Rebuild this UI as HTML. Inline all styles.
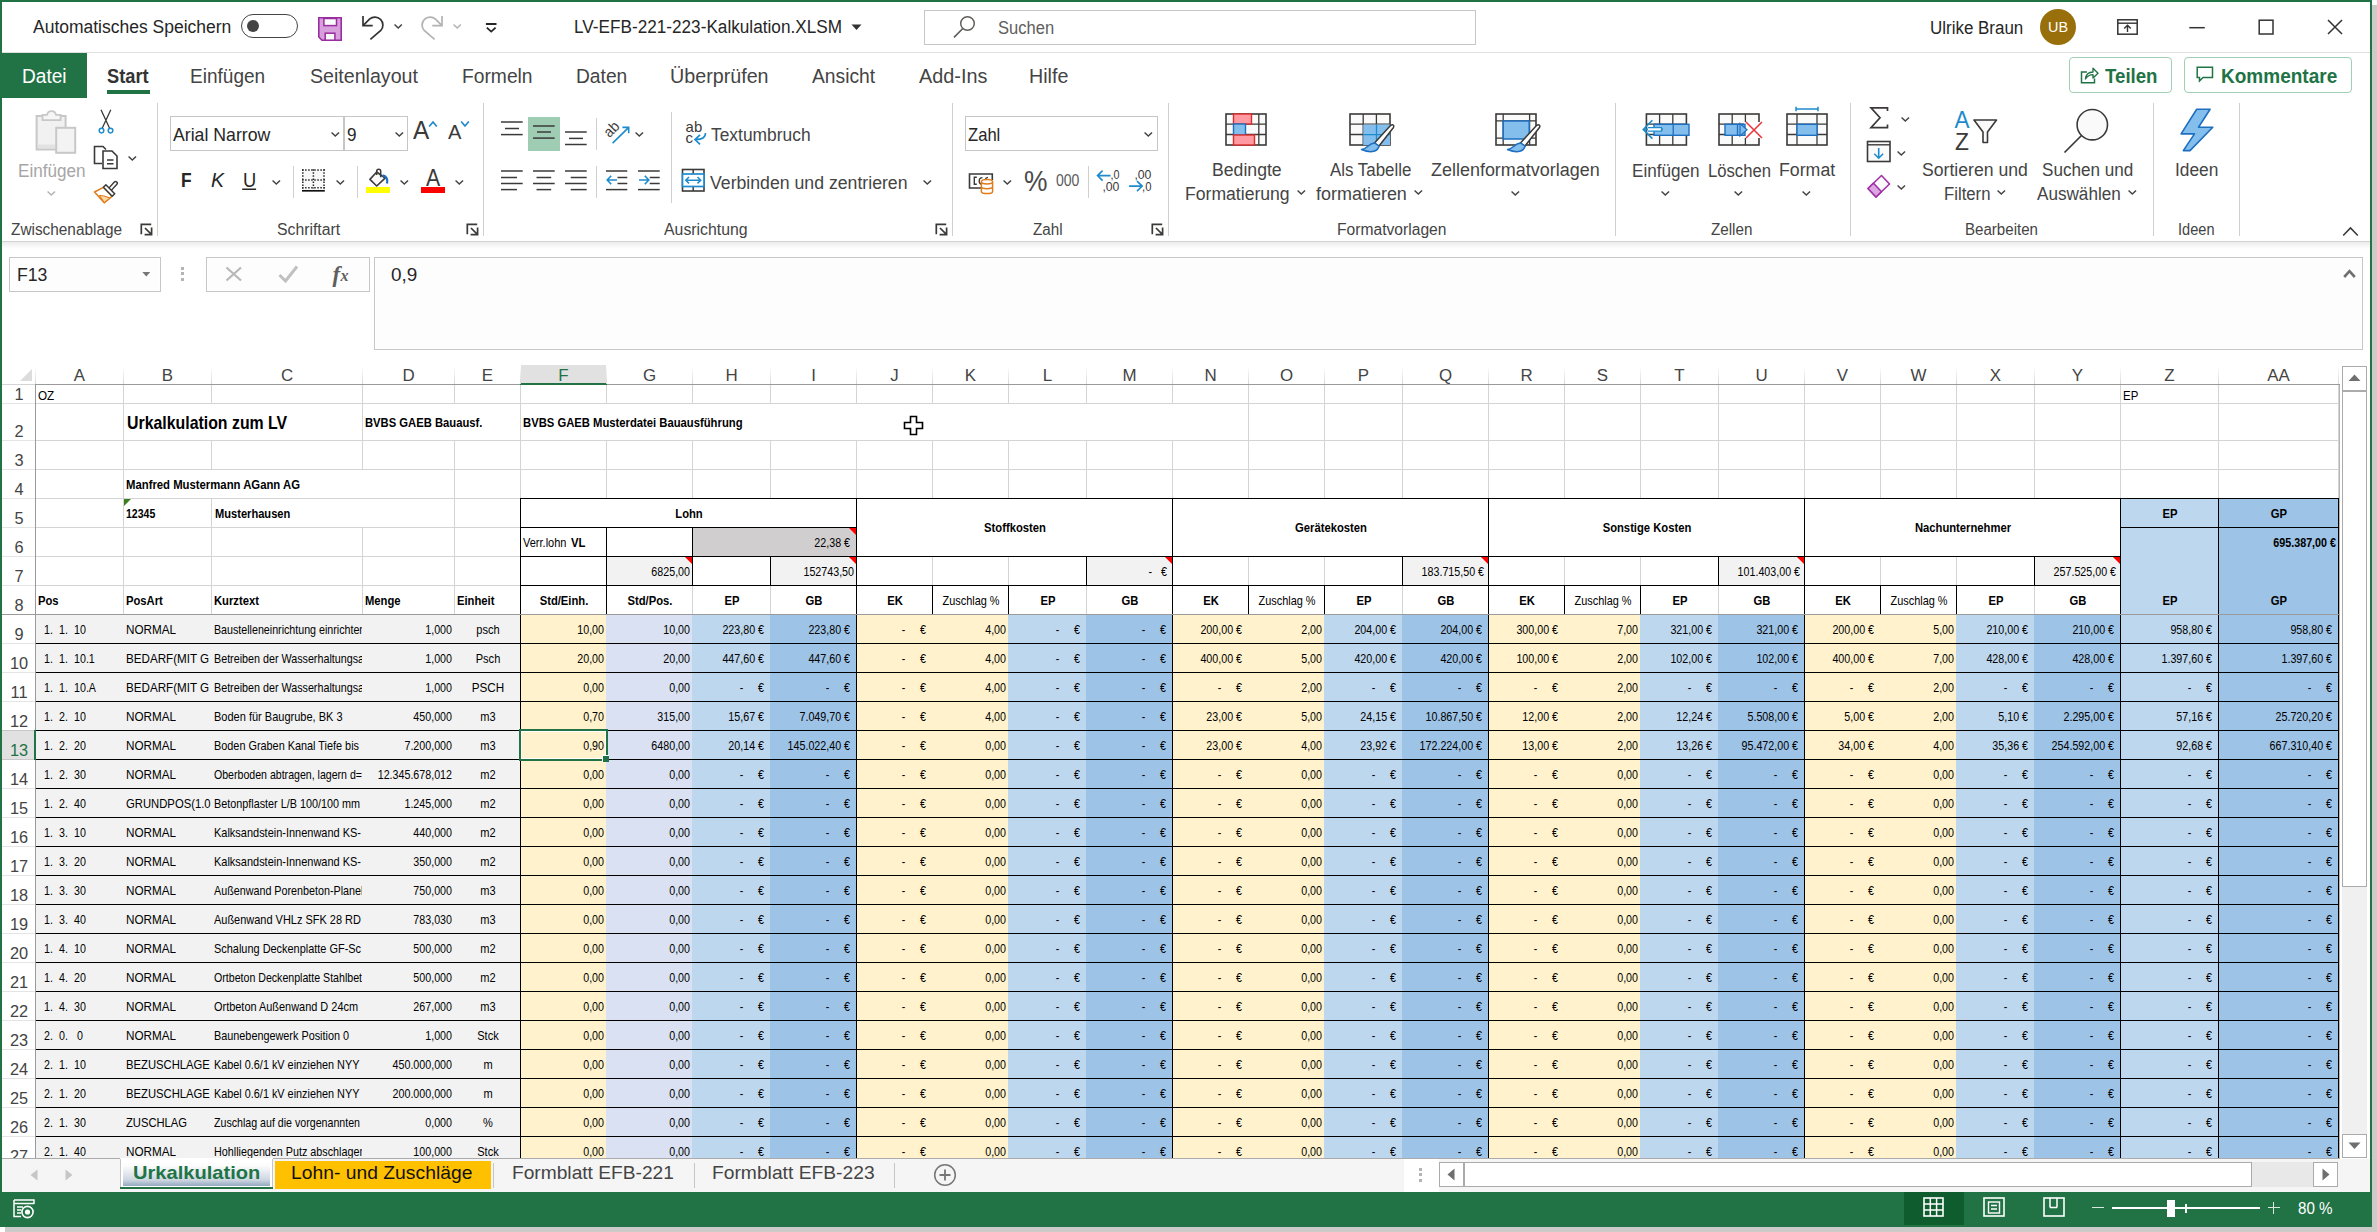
<!DOCTYPE html><html lang="de"><head><meta charset="utf-8"><title>LV-EFB-221-223-Kalkulation.XLSM - Excel</title><style>
html,body{margin:0;padding:0}
body{width:2377px;height:1232px;background:#cdcbca;position:relative;overflow:hidden;font-family:"Liberation Sans",sans-serif}
#w{position:absolute;left:0;top:0;width:2372px;height:1227px;background:#fff;overflow:hidden}
.r{position:absolute;display:block}
.t{position:absolute;white-space:nowrap;line-height:1;color:#444}
.p{white-space:pre}
</style></head><body><div id="w">
<div class="r" style="left:2px;top:2px;width:2368px;height:50px;background:#fff;"></div>
<div class="r" style="left:2px;top:52px;width:2368px;height:1px;background:#e1dfdd;"></div>
<span class="t" style="top:18px;font-size:18px;left:33.30px;transform-origin:0 50%;transform:scaleX(0.9715);color:#262626;">Automatisches Speichern</span>
<div class="r" style="left:241px;top:14px;width:55px;height:22px;border:1.4px solid #444;border-radius:12px;box-sizing:content-box"></div>
<div class="r" style="left:247px;top:20.3px;width:12px;height:12px;border-radius:6px;background:#444"></div>
<svg class="r" style="left:318px;top:17px;" width="24" height="24" viewBox="0 0 24 24"><path d="M0.8 0.8H23.2V23.2H4L0.8 20Z" fill="#d79fdc" stroke="#9a2da0" stroke-width="1.6"/><rect x="5.9" y="1.5" width="12.6" height="7.1" fill="#fafafa" stroke="#9a2da0" stroke-width="1.5"/><rect x="7.2" y="16.2" width="9.7" height="7" fill="#f8f8f8" stroke="#9a2da0" stroke-width="1.5"/></svg>
<svg class="r" style="left:360px;top:14px;" width="26" height="27" viewBox="0 0 26 27"><path d="M3 2V11.6H12.7" fill="none" stroke="#333" stroke-width="1.7"/><path d="M3.3 11.3L9.5 5.2A8 8 0 0 1 20.8 16.5L10.4 25.4" fill="none" stroke="#333" stroke-width="1.7"/></svg>
<svg class="r" style="left:393.4px;top:23.2px;" width="10.4" height="7.2" viewBox="0 0 10.4 7.2"><path d="M1.55 1.50L5.20 4.95L8.85 1.50" fill="none" stroke="#444" stroke-width="1.5"/></svg>
<svg class="r" style="left:418px;top:14px;" width="26" height="27" viewBox="0 0 26 27"><path d="M24 2V11.6H14.3" fill="none" stroke="#b4b2b0" stroke-width="1.7"/><path d="M23.7 11.3L17.5 5.2A8 8 0 0 0 6.2 16.5L16.6 25.4" fill="none" stroke="#b4b2b0" stroke-width="1.7"/></svg>
<svg class="r" style="left:452.2px;top:23.2px;" width="10.4" height="7.2" viewBox="0 0 10.4 7.2"><path d="M1.55 1.50L5.20 4.95L8.85 1.50" fill="none" stroke="#b4b2b0" stroke-width="1.5"/></svg>
<svg class="r" style="left:485px;top:22px;" width="13" height="11" viewBox="0 0 13 11"><path d="M0.9 2H11.5" stroke="#262626" stroke-width="2"/><path d="M1.8 5.6L6.2 9.6L10.6 5.6" fill="none" stroke="#262626" stroke-width="1.8"/></svg>
<span class="t" style="top:18px;font-size:18px;left:573.70px;transform-origin:0 50%;transform:scaleX(0.9543);color:#262626;">LV-EFB-221-223-Kalkulation.XLSM</span>
<svg class="r" style="left:851px;top:24px;" width="11" height="7" viewBox="0 0 11 7"><path d="M0.5 0.5H10.5L5.5 6Z" fill="#333"/></svg>
<div class="r" style="left:924px;top:10px;width:550px;height:33px;border:1px solid #c8c6c4;background:#fff;box-sizing:content-box"></div>
<svg class="r" style="left:953px;top:15px;" width="23" height="24" viewBox="0 0 23 24"><circle cx="14.5" cy="8.5" r="6.8" fill="none" stroke="#605e5c" stroke-width="1.5"/><path d="M9.8 13.5L1 22.3" stroke="#605e5c" stroke-width="1.7"/></svg>
<span class="t" style="top:19px;font-size:18px;left:998.40px;transform-origin:0 50%;transform:scaleX(0.9189);color:#605e5c;">Suchen</span>
<span class="t" style="top:19px;font-size:18px;left:1930.30px;transform-origin:0 50%;transform:scaleX(0.9420);color:#262626;">Ulrike Braun</span>
<div class="r" style="left:2040px;top:9px;width:36px;height:36px;border-radius:18px;background:#986f0b"></div>
<span class="t" style="top:19px;font-size:15px;left:2058.00px;transform:translateX(-50%) scaleX(0.9598);color:#fff;">UB</span>
<svg class="r" style="left:2117px;top:19px;" width="21" height="16" viewBox="0 0 21 16"><rect x="0.8" y="0.8" width="19.4" height="14.4" fill="none" stroke="#333" stroke-width="1.5"/><path d="M0.8 4.2H20.2" stroke="#333" stroke-width="1.4"/><path d="M10.5 13V6.5M7.2 9.5L10.5 6.3L13.8 9.5" fill="none" stroke="#333" stroke-width="1.4"/></svg>
<svg class="r" style="left:2188px;top:25px;" width="18" height="5" viewBox="0 0 18 5"><path d="M1.3 2.7H16.8" stroke="#333" stroke-width="1.5"/></svg>
<svg class="r" style="left:2257px;top:18px;" width="18" height="18" viewBox="0 0 18 18"><rect x="2.2" y="2.2" width="13.8" height="13.8" fill="none" stroke="#333" stroke-width="1.5"/></svg>
<svg class="r" style="left:2327px;top:19px;" width="16" height="16" viewBox="0 0 16 16"><path d="M1 1L15 15M15 1L1 15" stroke="#333" stroke-width="1.5"/></svg>
<div class="r" style="left:2px;top:53px;width:85px;height:45px;background:#217346;"></div>
<span class="t" style="top:67px;font-size:19.7px;left:21.60px;transform-origin:0 50%;transform:scaleX(0.9698);color:#fff;">Datei</span>
<span class="t" style="top:66px;font-size:20px;left:107.40px;transform-origin:0 50%;transform:scaleX(0.9129);color:#333;font-weight:bold;">Start</span>
<div class="r" style="left:107px;top:90px;width:43px;height:4px;background:#217346;"></div>
<span class="t" style="top:67px;font-size:19.7px;left:190.40px;transform-origin:0 50%;transform:scaleX(0.9669);color:#444;">Einfügen</span>
<span class="t" style="top:67px;font-size:19.7px;left:310.40px;transform-origin:0 50%;transform:scaleX(0.9960);color:#444;">Seitenlayout</span>
<span class="t" style="top:67px;font-size:19.7px;left:461.70px;transform-origin:0 50%;transform:scaleX(0.9771);color:#444;">Formeln</span>
<span class="t" style="top:67px;font-size:19.7px;left:575.50px;transform-origin:0 50%;transform:scaleX(0.9758);color:#444;">Daten</span>
<span class="t" style="top:67px;font-size:19.7px;left:670.00px;transform-origin:0 50%;transform:scaleX(1.0004);color:#444;">Überprüfen</span>
<span class="t" style="top:67px;font-size:19.7px;left:812.40px;transform-origin:0 50%;transform:scaleX(0.9783);color:#444;">Ansicht</span>
<span class="t" style="top:67px;font-size:19.7px;left:918.50px;transform-origin:0 50%;transform:scaleX(1.0074);color:#444;">Add-Ins</span>
<span class="t" style="top:67px;font-size:19.7px;left:1029.30px;transform-origin:0 50%;transform:scaleX(0.9997);color:#444;">Hilfe</span>
<div class="r" style="left:2069px;top:57px;width:101px;height:34px;border:1px solid #9fd0b5;border-radius:4px;box-sizing:content-box"></div>
<div class="r" style="left:2184px;top:57px;width:166px;height:34px;border:1px solid #9fd0b5;border-radius:4px;box-sizing:content-box"></div>
<svg class="r" style="left:2080px;top:66px;" width="19" height="18" viewBox="0 0 19 18"><path d="M7 6H1.5V16.8H14.5V12.5" fill="none" stroke="#217346" stroke-width="1.5"/><path d="M5.5 13C6 8.5 9 6 13 6V2.3L18 7.3L13 12V8.6C10 8.6 7.5 9.8 5.5 13Z" fill="none" stroke="#217346" stroke-width="1.4" stroke-linejoin="round"/></svg>
<span class="t" style="top:66px;font-size:20px;left:2105.00px;transform-origin:0 50%;transform:scaleX(0.9323);color:#217346;font-weight:bold;">Teilen</span>
<svg class="r" style="left:2196px;top:66px;" width="18" height="17" viewBox="0 0 18 17"><path d="M1.2 1.2H16.5V11.5H7L3.5 15V11.5H1.2Z" fill="none" stroke="#217346" stroke-width="1.5"/></svg>
<span class="t" style="top:66px;font-size:20px;left:2221.00px;transform-origin:0 50%;transform:scaleX(0.9505);color:#217346;font-weight:bold;">Kommentare</span>
<svg class="r" style="left:35px;top:108px;" width="42" height="47" viewBox="0 0 42 47"><rect x="1.6" y="8" width="29" height="33.5" fill="#f1f1f1" stroke="#c8c8c8" stroke-width="2"/><path d="M3 36.5H20V40H3Z" fill="#e2e2e2"/><path d="M7.5 12.2V6.8H12A4.6 4.6 0 0 1 21 6.8H25.6V12.2Z" fill="#f6f6f6" stroke="#c8c8c8" stroke-width="1.8"/><rect x="21.2" y="19.8" width="19" height="25" fill="#f3f3f3" stroke="#c8c8c8" stroke-width="2"/></svg>
<span class="t" style="top:163px;font-size:17.6px;left:17.80px;transform-origin:0 50%;transform:scaleX(0.9729);color:#a6a6a6;">Einfügen</span>
<svg class="r" style="left:46px;top:190px;" width="10.6" height="7.2" viewBox="0 0 10.6 7.2"><path d="M1.55 1.50L5.30 4.95L9.05 1.50" fill="none" stroke="#b4b4b4" stroke-width="1.5"/></svg>
<svg class="r" style="left:97px;top:108.5px;" width="18" height="26" viewBox="0 0 18 26"><path d="M4 0.8L12.6 19.2M13.8 0.8L5.2 19.2" stroke="#3b3a39" stroke-width="1.3" fill="none"/><circle cx="4.5" cy="21.6" r="2.3" fill="#fff" stroke="#1e8bcd" stroke-width="1.5"/><circle cx="13.5" cy="21.6" r="2.3" fill="#fff" stroke="#1e8bcd" stroke-width="1.5"/></svg>
<svg class="r" style="left:93px;top:145px;" width="26" height="25" viewBox="0 0 26 25"><path d="M9 18.5H1.5V1.5H10L13 4.5" fill="none" stroke="#3b3a39" stroke-width="1.6"/><path d="M10 6H19L24 11V23.5H10Z" fill="#fff" stroke="#3b3a39" stroke-width="1.6"/><path d="M14 15H20.5M14 18.7H20.5" stroke="#3b3a39" stroke-width="1.4"/></svg>
<svg class="r" style="left:127.2px;top:155px;" width="10.6" height="7.2" viewBox="0 0 10.6 7.2"><path d="M1.55 1.50L5.30 4.95L9.05 1.50" fill="none" stroke="#444" stroke-width="1.5"/></svg>
<svg class="r" style="left:93px;top:180px;" width="26" height="24" viewBox="0 0 26 24"><path d="M17.3 9L22.6 3.2" stroke="#3b3a39" stroke-width="4.8" stroke-linecap="round"/><path d="M17.3 9L22.6 3.2" stroke="#fff" stroke-width="1.9" stroke-linecap="round"/><path d="M10.4 7.3L1.5 12L11.3 22.7L19.2 16.2Z" fill="#fff" stroke="#e07b1a" stroke-width="1.5" stroke-linejoin="round"/><path d="M6.5 15.5C10 15 13 16.5 16.8 18.2L11.3 22.7Z" fill="#fbd9a6" stroke="#e07b1a" stroke-width="1.1" stroke-linejoin="round"/><path d="M10.4 7.3L12.9 4.8L21.7 13.7L19.2 16.2Z" fill="#fff" stroke="#3b3a39" stroke-width="1.5" stroke-linejoin="round"/></svg>
<span class="t" style="top:222px;font-size:15.6px;left:11.10px;transform-origin:0 50%;transform:scaleX(0.9855);color:#444;">Zwischenablage</span>
<svg class="r" style="left:139.5px;top:222.5px;" width="13" height="13" viewBox="0 0 13 13"><path d="M1.3 11.3V1.3H11.2M5 5L11.4 11.4M11.6 4.6V11.6H4.6" fill="none" stroke="#3b3a39" stroke-width="1.7"/></svg>
<div class="r" style="left:157px;top:103px;width:1px;height:133px;background:#d2d0ce;"></div>
<div class="r" style="left:170px;top:116px;width:172px;height:33px;border:1px solid #c8c6c4;box-sizing:content-box"></div>
<div class="r" style="left:344px;top:116px;width:62px;height:33px;border:1px solid #c8c6c4;box-sizing:content-box"></div>
<span class="t" style="top:126px;font-size:18.5px;left:173.30px;transform-origin:0 50%;transform:scaleX(0.9560);color:#262626;">Arial Narrow</span>
<svg class="r" style="left:329.8px;top:131px;" width="10.6" height="7.2" viewBox="0 0 10.6 7.2"><path d="M1.55 1.50L5.30 4.95L9.05 1.50" fill="none" stroke="#444" stroke-width="1.5"/></svg>
<span class="t" style="top:126px;font-size:18.5px;left:347.00px;transform-origin:0 50%;transform:scaleX(0.9233);color:#262626;">9</span>
<svg class="r" style="left:393.8px;top:131px;" width="10.6" height="7.2" viewBox="0 0 10.6 7.2"><path d="M1.55 1.50L5.30 4.95L9.05 1.50" fill="none" stroke="#444" stroke-width="1.5"/></svg>
<span class="t" style="top:117px;font-size:26px;left:413.20px;transform-origin:0 50%;transform:scaleX(0.9341);color:#3b3a39;">A</span>
<svg class="r" style="left:427.5px;top:120px;" width="10" height="8" viewBox="0 0 10 8"><path d="M1.2 6.5L5 2L8.8 6.5" fill="none" stroke="#1e8bcd" stroke-width="1.7"/></svg>
<span class="t" style="top:122px;font-size:20px;left:447.60px;transform-origin:0 50%;transform:scaleX(1.0045);color:#3b3a39;">A</span>
<svg class="r" style="left:459.5px;top:120px;" width="10" height="8" viewBox="0 0 10 8"><path d="M1.2 1.5L5 6L8.8 1.5" fill="none" stroke="#1e8bcd" stroke-width="1.7"/></svg>
<span class="t" style="top:170px;font-size:20.5px;left:180.60px;transform-origin:0 50%;transform:scaleX(0.8465);color:#262626;font-weight:bold;">F</span>
<span class="t" style="top:170px;font-size:20.5px;left:211.00px;transform-origin:0 50%;transform:scaleX(0.9507);color:#262626;font-style:italic;">K</span>
<span class="t" style="top:170px;font-size:20.5px;left:243.00px;transform-origin:0 50%;transform:scaleX(0.8916);color:#262626;">U</span>
<svg class="r" style="left:241px;top:187px;" width="17" height="4" viewBox="0 0 17 4"><path d="M1.2 2.25H15.1" stroke="#262626" stroke-width="1.5"/></svg>
<svg class="r" style="left:270.6px;top:178.8px;" width="10.6" height="7.2" viewBox="0 0 10.6 7.2"><path d="M1.55 1.50L5.30 4.95L9.05 1.50" fill="none" stroke="#444" stroke-width="1.5"/></svg>
<div class="r" style="left:293px;top:166px;width:1px;height:32px;background:#d2d0ce;"></div>
<svg class="r" style="left:301px;top:168px;" width="25" height="25" viewBox="0 0 25 25"><rect x="1.8" y="2" width="21.2" height="17.7" fill="#f8f8f8"/><path d="M1.05 2H24M1.05 12H24M1.05 19.7H24" fill="none" stroke="#262626" stroke-width="1.5" stroke-dasharray="1.5 1.55"/><path d="M1.8 1.25V20.5M12.4 1.25V20.5M23 1.25V20.5" fill="none" stroke="#262626" stroke-width="1.5" stroke-dasharray="1.5 1.55"/><path d="M1 22.8H23.8" stroke="#111" stroke-width="1.7"/></svg>
<svg class="r" style="left:334.8px;top:178.8px;" width="10.6" height="7.2" viewBox="0 0 10.6 7.2"><path d="M1.55 1.50L5.30 4.95L9.05 1.50" fill="none" stroke="#444" stroke-width="1.5"/></svg>
<div class="r" style="left:357px;top:166px;width:1px;height:32px;background:#d2d0ce;"></div>
<svg class="r" style="left:365px;top:168px;" width="27" height="26" viewBox="0 0 27 26"><path d="M11.7 4L4.9 11.4L11.7 18L20.1 10.2Z" fill="#fafafa" stroke="#3b3a39" stroke-width="1.6" stroke-linejoin="round"/><path d="M11.7 7V3.2A2 2 0 0 1 15.7 3.2V9.2" fill="none" stroke="#3b3a39" stroke-width="1.5"/><path d="M17.6 7.3C21.3 7.8 23 11.3 22 15.4" fill="none" stroke="#1e6fc0" stroke-width="2.3"/></svg>
<div class="r" style="left:366px;top:187px;width:24px;height:6px;background:#ffff00;"></div>
<svg class="r" style="left:398.8px;top:178.8px;" width="10.6" height="7.2" viewBox="0 0 10.6 7.2"><path d="M1.55 1.50L5.30 4.95L9.05 1.50" fill="none" stroke="#444" stroke-width="1.5"/></svg>
<span class="t" style="top:167px;font-size:23px;left:426.20px;transform-origin:0 50%;transform:scaleX(0.9256);color:#3b3a39;">A</span>
<div class="r" style="left:421px;top:187px;width:24px;height:6px;background:#ff0000;"></div>
<svg class="r" style="left:453.8px;top:178.8px;" width="10.6" height="7.2" viewBox="0 0 10.6 7.2"><path d="M1.55 1.50L5.30 4.95L9.05 1.50" fill="none" stroke="#444" stroke-width="1.5"/></svg>
<span class="t" style="top:222px;font-size:15.6px;left:276.60px;transform-origin:0 50%;transform:scaleX(1.0125);color:#444;">Schriftart</span>
<svg class="r" style="left:465.5px;top:222.5px;" width="13" height="13" viewBox="0 0 13 13"><path d="M1.3 11.3V1.3H11.2M5 5L11.4 11.4M11.6 4.6V11.6H4.6" fill="none" stroke="#3b3a39" stroke-width="1.7"/></svg>
<div class="r" style="left:483px;top:103px;width:1px;height:133px;background:#d2d0ce;"></div>
<div class="r" style="left:528px;top:117px;width:32px;height:34px;background:#9fcdb3;"></div>
<svg class="r" style="left:501.3px;top:119.8px;" width="23" height="17.6" viewBox="0 0 23 17.6"><path d="M0.0 2.0H21.7" stroke="#3b3a39" stroke-width="1.5"/><path d="M4.0 8.5H18.0" stroke="#3b3a39" stroke-width="1.5"/><path d="M0.0 14.6H21.7" stroke="#3b3a39" stroke-width="1.5"/></svg>
<svg class="r" style="left:533.2px;top:124.3px;" width="23" height="17.1" viewBox="0 0 23 17.1"><path d="M0.0 2.0H21.7" stroke="#3b3a39" stroke-width="1.5"/><path d="M4.0 8.0H18.0" stroke="#3b3a39" stroke-width="1.5"/><path d="M0.0 14.1H21.7" stroke="#3b3a39" stroke-width="1.5"/></svg>
<svg class="r" style="left:565.3px;top:130px;" width="23" height="17.5" viewBox="0 0 23 17.5"><path d="M0.0 2.0H21.7" stroke="#3b3a39" stroke-width="1.5"/><path d="M4.0 8.4H18.0" stroke="#3b3a39" stroke-width="1.5"/><path d="M0.0 14.5H21.7" stroke="#3b3a39" stroke-width="1.5"/></svg>
<div class="r" style="left:596px;top:118px;width:1px;height:32px;background:#d2d0ce;"></div>
<svg class="r" style="left:604px;top:119px;" width="27" height="27" viewBox="0 0 27 27"><path d="M8.6 24.1L24.5 8.6M18.4 8.4H24.7V14.3" fill="none" stroke="#1e8bcd" stroke-width="1.6"/><text x="0" y="0" font-size="15" fill="#3b3a39" font-family="Liberation Sans,sans-serif" textLength="15.5" lengthAdjust="spacingAndGlyphs" transform="translate(5.6 19.2) rotate(-45)">ab</text></svg>
<svg class="r" style="left:634px;top:131px;" width="10.6" height="7.2" viewBox="0 0 10.6 7.2"><path d="M1.55 1.50L5.30 4.95L9.05 1.50" fill="none" stroke="#444" stroke-width="1.5"/></svg>
<div class="r" style="left:671px;top:112px;width:1px;height:91px;background:#d2d0ce;"></div>
<svg class="r" style="left:684px;top:120px;" width="24" height="26" viewBox="0 0 24 26"><text x="1.6" y="12.4" font-size="15" fill="#3b3a39" font-family="Liberation Sans,sans-serif" textLength="16.6" lengthAdjust="spacingAndGlyphs">ab</text><text x="1.6" y="23.1" font-size="15" fill="#3b3a39" font-family="Liberation Sans,sans-serif">c</text><path d="M21.5 13C21.6 17 19 19.6 11.5 19.6M16 14.8L11 19.6L16 24.4" fill="none" stroke="#1e8bcd" stroke-width="1.7"/></svg>
<span class="t" style="top:127px;font-size:17.6px;left:711.40px;transform-origin:0 50%;transform:scaleX(0.9885);color:#444;">Textumbruch</span>
<svg class="r" style="left:501.3px;top:168.7px;" width="23" height="23.6" viewBox="0 0 23 23.6"><path d="M0.0 2.0H21.7" stroke="#3b3a39" stroke-width="1.5"/><path d="M0.0 8.5H16.0" stroke="#3b3a39" stroke-width="1.5"/><path d="M0.0 14.5H21.7" stroke="#3b3a39" stroke-width="1.5"/><path d="M0.0 20.6H16.0" stroke="#3b3a39" stroke-width="1.5"/></svg>
<svg class="r" style="left:533.2px;top:168.7px;" width="23" height="23.6" viewBox="0 0 23 23.6"><path d="M0.0 2.0H21.7" stroke="#3b3a39" stroke-width="1.5"/><path d="M3.5 8.5H18.2" stroke="#3b3a39" stroke-width="1.5"/><path d="M0.0 14.5H21.7" stroke="#3b3a39" stroke-width="1.5"/><path d="M3.5 20.6H18.2" stroke="#3b3a39" stroke-width="1.5"/></svg>
<svg class="r" style="left:565.3px;top:168.7px;" width="23" height="23.6" viewBox="0 0 23 23.6"><path d="M0.0 2.0H21.7" stroke="#3b3a39" stroke-width="1.5"/><path d="M5.7 8.5H21.7" stroke="#3b3a39" stroke-width="1.5"/><path d="M0.0 14.5H21.7" stroke="#3b3a39" stroke-width="1.5"/><path d="M5.7 20.6H21.7" stroke="#3b3a39" stroke-width="1.5"/></svg>
<div class="r" style="left:596px;top:166px;width:1px;height:32px;background:#d2d0ce;"></div>
<svg class="r" style="left:606.4px;top:168.7px;" width="23" height="23.6" viewBox="0 0 23 23.6"><path d="M0.0 2.0H21.3" stroke="#3b3a39" stroke-width="1.5"/><path d="M11.5 8.5H21.3" stroke="#3b3a39" stroke-width="1.5"/><path d="M11.5 14.5H21.3" stroke="#3b3a39" stroke-width="1.5"/><path d="M0.0 20.6H21.3" stroke="#3b3a39" stroke-width="1.5"/></svg>
<svg class="r" style="left:606px;top:174px;" width="12" height="12" viewBox="0 0 12 12"><path d="M11 6H1.5M5.2 1.8L1.2 6L5.2 10.2" fill="none" stroke="#1e8bcd" stroke-width="1.6"/></svg>
<svg class="r" style="left:638.3px;top:168.7px;" width="23" height="23.6" viewBox="0 0 23 23.6"><path d="M0.0 2.0H21.7" stroke="#3b3a39" stroke-width="1.5"/><path d="M11.7 8.5H21.7" stroke="#3b3a39" stroke-width="1.5"/><path d="M11.7 14.5H21.7" stroke="#3b3a39" stroke-width="1.5"/><path d="M0.0 20.6H21.7" stroke="#3b3a39" stroke-width="1.5"/></svg>
<svg class="r" style="left:637.5px;top:174px;" width="12" height="12" viewBox="0 0 12 12"><path d="M1 6H10.5M6.8 1.8L10.8 6L6.8 10.2" fill="none" stroke="#1e8bcd" stroke-width="1.6"/></svg>
<svg class="r" style="left:681px;top:168px;" width="25" height="25" viewBox="0 0 25 25"><rect x="1.5" y="1.5" width="21.5" height="21.5" fill="none" stroke="#3b3a39" stroke-width="1.6"/><path d="M12.2 1.5V6M12.2 18.5V23" stroke="#3b3a39" stroke-width="1.5"/><rect x="1.5" y="6" width="21.5" height="12.5" fill="#fff" stroke="#1e8bcd" stroke-width="1.7"/><path d="M5 12.2H19.5M8 9L4.8 12.2L8 15.4M16.5 9L19.7 12.2L16.5 15.4" fill="none" stroke="#1e8bcd" stroke-width="1.5"/></svg>
<span class="t" style="top:175px;font-size:17.6px;left:710.40px;transform-origin:0 50%;transform:scaleX(1.0047);color:#444;">Verbinden und zentrieren</span>
<svg class="r" style="left:921.5px;top:178.8px;" width="10.6" height="7.2" viewBox="0 0 10.6 7.2"><path d="M1.55 1.50L5.30 4.95L9.05 1.50" fill="none" stroke="#444" stroke-width="1.5"/></svg>
<span class="t" style="top:222px;font-size:15.6px;left:663.50px;transform-origin:0 50%;transform:scaleX(1.0160);color:#444;">Ausrichtung</span>
<svg class="r" style="left:935.0px;top:222.5px;" width="13" height="13" viewBox="0 0 13 13"><path d="M1.3 11.3V1.3H11.2M5 5L11.4 11.4M11.6 4.6V11.6H4.6" fill="none" stroke="#3b3a39" stroke-width="1.7"/></svg>
<div class="r" style="left:952px;top:103px;width:1px;height:133px;background:#d2d0ce;"></div>
<div class="r" style="left:965px;top:116px;width:191px;height:33px;border:1px solid #c8c6c4;box-sizing:content-box"></div>
<span class="t" style="top:126px;font-size:18.5px;left:968.30px;transform-origin:0 50%;transform:scaleX(0.8975);color:#262626;">Zahl</span>
<svg class="r" style="left:1142.6px;top:131px;" width="10.6" height="7.2" viewBox="0 0 10.6 7.2"><path d="M1.55 1.50L5.30 4.95L9.05 1.50" fill="none" stroke="#444" stroke-width="1.5"/></svg>
<svg class="r" style="left:968px;top:172px;" width="27" height="23" viewBox="0 0 27 23"><path d="M14 16H1.5V2H24.3V8" fill="none" stroke="#3b3a39" stroke-width="1.6"/><path d="M8.8 5.3H6.3V12.2H8.8M14.5 5.6A3.3 3.3 0 0 0 14.5 12.2M20 5.4A3 3 0 0 0 17.2 7.5" fill="none" stroke="#3b3a39" stroke-width="1.4"/><path d="M13.4 9.8V19.4A5.6 2.2 0 0 0 24.6 19.4V9.8A5.6 2.2 0 0 0 13.4 9.8A5.6 2.2 0 0 0 24.6 9.8M13.4 14.6A5.6 2.2 0 0 0 24.6 14.6" fill="#fff" stroke="#e07b1a" stroke-width="1.5"/></svg>
<svg class="r" style="left:1002px;top:178.8px;" width="10.6" height="7.2" viewBox="0 0 10.6 7.2"><path d="M1.55 1.50L5.30 4.95L9.05 1.50" fill="none" stroke="#444" stroke-width="1.5"/></svg>
<span class="t" style="top:167px;font-size:29px;left:1024.20px;transform-origin:0 50%;transform:scaleX(0.9114);color:#4a4a4a;">%</span>
<span class="t" style="top:172px;font-size:16.5px;left:1056.00px;transform-origin:0 50%;transform:scaleX(0.8500);color:#5a5a5a;">000</span>
<div class="r" style="left:1088px;top:166px;width:1px;height:32px;background:#d2d0ce;"></div>
<svg class="r" style="left:1096px;top:168px;" width="26" height="26" viewBox="0 0 26 26"><path d="M14.6 7.6H1.8M6.6 2.6L1.5 7.6L6.6 12.6" fill="none" stroke="#1e8bcd" stroke-width="1.6"/><text x="14.4" y="10.9" textLength="9" font-size="13.5" fill="#3b3a39" font-family="Liberation Sans,sans-serif" lengthAdjust="spacingAndGlyphs">,0</text><text x="6.4" y="22.7" textLength="17" font-size="13.5" fill="#3b3a39" font-family="Liberation Sans,sans-serif" lengthAdjust="spacingAndGlyphs">,00</text></svg>
<svg class="r" style="left:1128px;top:168px;" width="26" height="26" viewBox="0 0 26 26"><text x="6.4" y="10.9" textLength="17" font-size="13.5" fill="#3b3a39" font-family="Liberation Sans,sans-serif" lengthAdjust="spacingAndGlyphs">,00</text><path d="M1.1 18.1H13.9M9 13.1L14.2 18.1L9 23.1" fill="none" stroke="#1e8bcd" stroke-width="1.6"/><text x="14" y="22.7" textLength="9.4" font-size="13.5" fill="#3b3a39" font-family="Liberation Sans,sans-serif" lengthAdjust="spacingAndGlyphs">,0</text></svg>
<span class="t" style="top:222px;font-size:15.6px;left:1033.00px;transform-origin:0 50%;transform:scaleX(0.9753);color:#444;">Zahl</span>
<svg class="r" style="left:1150.5px;top:222.5px;" width="13" height="13" viewBox="0 0 13 13"><path d="M1.3 11.3V1.3H11.2M5 5L11.4 11.4M11.6 4.6V11.6H4.6" fill="none" stroke="#3b3a39" stroke-width="1.7"/></svg>
<div class="r" style="left:1168px;top:103px;width:1px;height:133px;background:#d2d0ce;"></div>
<svg class="r" style="left:1225px;top:113px;" width="42" height="34" viewBox="0 0 42 34"><rect x="1" y="1" width="40" height="31" fill="#fafafa" stroke="#3b3a39" stroke-width="1.6"/><path d="M9.0 1V32" stroke="#3b3a39" stroke-width="1.3"/><path d="M33.8 1V32" stroke="#3b3a39" stroke-width="1.3"/><path d="M1 11.2H41" stroke="#3b3a39" stroke-width="1.3"/><path d="M1 21.5H41" stroke="#3b3a39" stroke-width="1.3"/><rect x="8.5" y="1" width="18" height="10" fill="#ff9aa2" stroke="#d92c2c" stroke-width="1.4"/><rect x="8.5" y="11" width="12" height="11" fill="#83beec" stroke="#1e6fc0" stroke-width="1.4"/><rect x="8.5" y="22" width="21" height="10" fill="#ff9aa2" stroke="#d92c2c" stroke-width="1.4"/></svg>
<span class="t" style="top:162px;font-size:17.6px;left:1211.70px;transform-origin:0 50%;transform:scaleX(1.0031);color:#444;">Bedingte</span>
<span class="t" style="top:186px;font-size:17.6px;left:1184.80px;transform-origin:0 50%;transform:scaleX(1.0003);color:#444;">Formatierung</span>
<svg class="r" style="left:1295.6px;top:189.3px;" width="10.6" height="7.2" viewBox="0 0 10.6 7.2"><path d="M1.55 1.50L5.30 4.95L9.05 1.50" fill="none" stroke="#444" stroke-width="1.5"/></svg>
<svg class="r" style="left:1349px;top:113px;" width="47" height="42" viewBox="0 0 47 42"><rect x="1" y="1" width="40" height="31" fill="#fafafa" stroke="#3b3a39" stroke-width="1.6"/><path d="M14.2 1V32" stroke="#3b3a39" stroke-width="1.3"/><path d="M27.4 1V32" stroke="#3b3a39" stroke-width="1.3"/><path d="M1 11.2H41" stroke="#3b3a39" stroke-width="1.3"/><path d="M1 21.5H41" stroke="#3b3a39" stroke-width="1.3"/><rect x="14.3" y="11.5" width="26.7" height="20.5" fill="#83beec"/><path d="M14.3 21.7H41M27.5 11.5V32" stroke="#1e8bcd" stroke-width="1.3"/><path d="M41.5 12.5C44 11 45.5 12.5 44.5 14.5L30 33L25.5 30Z" fill="#fff" stroke="#3b3a39" stroke-width="1.5" stroke-linejoin="round"/><path d="M25.5 30L30 33C29 38 23 41 12.5 36.5C18 36.5 19 30.5 25.5 30Z" fill="#83beec" stroke="#1e6fc0" stroke-width="1.5" stroke-linejoin="round"/></svg>
<span class="t" style="top:162px;font-size:17.6px;left:1329.90px;transform-origin:0 50%;transform:scaleX(0.9599);color:#444;">Als Tabelle</span>
<span class="t" style="top:186px;font-size:17.6px;left:1315.70px;transform-origin:0 50%;transform:scaleX(1.0211);color:#444;">formatieren</span>
<svg class="r" style="left:1412.5px;top:189.3px;" width="10.6" height="7.2" viewBox="0 0 10.6 7.2"><path d="M1.55 1.50L5.30 4.95L9.05 1.50" fill="none" stroke="#444" stroke-width="1.5"/></svg>
<svg class="r" style="left:1495px;top:113px;" width="47" height="42" viewBox="0 0 47 42"><rect x="1" y="1" width="40" height="31" fill="#fafafa" stroke="#3b3a39" stroke-width="1.6"/><path d="M8.2 1V32" stroke="#3b3a39" stroke-width="1.3"/><path d="M34.6 1V32" stroke="#3b3a39" stroke-width="1.3"/><path d="M1 7.8H41" stroke="#3b3a39" stroke-width="1.3"/><path d="M1 25.2H41" stroke="#3b3a39" stroke-width="1.3"/><rect x="8.2" y="8" width="26" height="18" fill="#83beec" stroke="#1e6fc0" stroke-width="1.5"/><path d="M41.5 12.5C44 11 45.5 12.5 44.5 14.5L30 33L25.5 30Z" fill="#fff" stroke="#3b3a39" stroke-width="1.5" stroke-linejoin="round"/><path d="M25.5 30L30 33C29 38 23 41 12.5 36.5C18 36.5 19 30.5 25.5 30Z" fill="#83beec" stroke="#1e6fc0" stroke-width="1.5" stroke-linejoin="round"/></svg>
<span class="t" style="top:162px;font-size:17.6px;left:1431.30px;transform-origin:0 50%;transform:scaleX(1.0204);color:#444;">Zellenformatvorlagen</span>
<svg class="r" style="left:1509.7px;top:190px;" width="10.6" height="7.2" viewBox="0 0 10.6 7.2"><path d="M1.55 1.50L5.30 4.95L9.05 1.50" fill="none" stroke="#444" stroke-width="1.5"/></svg>
<span class="t" style="top:222px;font-size:15.6px;left:1337.00px;transform-origin:0 50%;transform:scaleX(1.0023);color:#444;">Formatvorlagen</span>
<div class="r" style="left:1615px;top:103px;width:1px;height:133px;background:#d2d0ce;"></div>
<svg class="r" style="left:1642px;top:113px;" width="49" height="34" viewBox="0 0 49 34"><g transform="translate(3.4 0)"><rect x="1" y="1" width="40" height="31" fill="#fafafa" stroke="#3b3a39" stroke-width="1.6"/><path d="M14.2 1V32" stroke="#3b3a39" stroke-width="1.3"/><path d="M27.4 1V32" stroke="#3b3a39" stroke-width="1.3"/><path d="M1 11.2H41" stroke="#3b3a39" stroke-width="1.3"/><path d="M1 21.5H41" stroke="#3b3a39" stroke-width="1.3"/></g><rect x="12" y="11.3" width="35" height="11" fill="#83beec" stroke="#1e6fc0" stroke-width="1.4"/><path d="M31.2 11.3V22.3" stroke="#1e6fc0" stroke-width="1.3"/><path d="M21 16.4H2.5M10.4 7.2L1.2 16.4L10.4 25.6" fill="none" stroke="#1e8bcd" stroke-width="1.6"/><path d="M6 14.6H19.5V18.2H6" fill="#fff" stroke="#1e8bcd" stroke-width="1.2"/></svg>
<span class="t" style="top:163px;font-size:17.6px;left:1632.00px;transform-origin:0 50%;transform:scaleX(0.9729);color:#444;">Einfügen</span>
<svg class="r" style="left:1660px;top:190px;" width="10.6" height="7.2" viewBox="0 0 10.6 7.2"><path d="M1.55 1.50L5.30 4.95L9.05 1.50" fill="none" stroke="#444" stroke-width="1.5"/></svg>
<svg class="r" style="left:1718px;top:113px;" width="46" height="34" viewBox="0 0 46 34"><rect x="1" y="1" width="40" height="31" fill="#fafafa" stroke="#3b3a39" stroke-width="1.6"/><path d="M14.2 1V32" stroke="#3b3a39" stroke-width="1.3"/><path d="M27.4 1V32" stroke="#3b3a39" stroke-width="1.3"/><path d="M1 11.2H41" stroke="#3b3a39" stroke-width="1.3"/><path d="M1 21.5H41" stroke="#3b3a39" stroke-width="1.3"/><rect x="26" y="9" width="19" height="16" fill="#fff"/><rect x="7" y="11.3" width="20" height="11" fill="#83beec" stroke="#1e6fc0" stroke-width="1.4"/><path d="M19.5 11.3V22.3" stroke="#1e6fc0" stroke-width="1.3"/><path d="M22 10.5L29 16.8L22 23Z" fill="#83beec" stroke="#1e6fc0" stroke-width="1.2"/><path d="M28 9L44 25M44 9L28 25" stroke="#e8383d" stroke-width="1.6"/></svg>
<span class="t" style="top:163px;font-size:17.6px;left:1707.70px;transform-origin:0 50%;transform:scaleX(0.9468);color:#444;">Löschen</span>
<svg class="r" style="left:1733px;top:190px;" width="10.6" height="7.2" viewBox="0 0 10.6 7.2"><path d="M1.55 1.50L5.30 4.95L9.05 1.50" fill="none" stroke="#444" stroke-width="1.5"/></svg>
<svg class="r" style="left:1786px;top:106px;" width="43" height="41" viewBox="0 0 43 41"><g transform="translate(0 7)"><rect x="1" y="1" width="40" height="31" fill="#fafafa" stroke="#3b3a39" stroke-width="1.6"/><path d="M11.0 1V32" stroke="#3b3a39" stroke-width="1.3"/><path d="M31.0 1V32" stroke="#3b3a39" stroke-width="1.3"/><path d="M1 11.2H41" stroke="#3b3a39" stroke-width="1.3"/><path d="M1 21.5H41" stroke="#3b3a39" stroke-width="1.3"/></g><rect x="11" y="18.3" width="20" height="11" fill="#83beec" stroke="#1e6fc0" stroke-width="1.4"/><path d="M10 3H32M10 0.8V5.2M32 0.8V5.2" stroke="#1e8bcd" stroke-width="1.5"/></svg>
<span class="t" style="top:162px;font-size:17.6px;left:1778.80px;transform-origin:0 50%;transform:scaleX(1.0082);color:#444;">Format</span>
<svg class="r" style="left:1801px;top:190px;" width="10.6" height="7.2" viewBox="0 0 10.6 7.2"><path d="M1.55 1.50L5.30 4.95L9.05 1.50" fill="none" stroke="#444" stroke-width="1.5"/></svg>
<span class="t" style="top:222px;font-size:15.6px;left:1711.10px;transform-origin:0 50%;transform:scaleX(0.9743);color:#444;">Zellen</span>
<div class="r" style="left:1850px;top:103px;width:1px;height:133px;background:#d2d0ce;"></div>
<svg class="r" style="left:1869px;top:106px;" width="21" height="24" viewBox="0 0 21 24"><path d="M18.5 5V1.8H2L11 11.8L2 21.6H18.5V18.5" fill="none" stroke="#3b3a39" stroke-width="1.7"/></svg>
<svg class="r" style="left:1899.6px;top:115.8px;" width="10.6" height="7.2" viewBox="0 0 10.6 7.2"><path d="M1.55 1.50L5.30 4.95L9.05 1.50" fill="none" stroke="#444" stroke-width="1.5"/></svg>
<svg class="r" style="left:1866px;top:140px;" width="26" height="24" viewBox="0 0 26 24"><rect x="1.5" y="1.5" width="22.5" height="20" fill="#fafafa" stroke="#3b3a39" stroke-width="1.6"/><path d="M1.5 4.8H24" stroke="#3b3a39" stroke-width="1.4"/><path d="M12.7 8V18M8.3 13.8L12.7 18.2L17.1 13.8" fill="none" stroke="#1e8bcd" stroke-width="1.6"/></svg>
<svg class="r" style="left:1896px;top:150px;" width="10.6" height="7.2" viewBox="0 0 10.6 7.2"><path d="M1.55 1.50L5.30 4.95L9.05 1.50" fill="none" stroke="#444" stroke-width="1.5"/></svg>
<svg class="r" style="left:1866px;top:174px;" width="26" height="25" viewBox="0 0 26 25"><path d="M2 14.5L15.5 1.5L23.5 10L10 23Z" fill="#fafafa" stroke="#a232a8" stroke-width="1.6" stroke-linejoin="round"/><path d="M2 14.5L7.5 9.2L15.5 17.7L10 23Z" fill="#dca6e0" stroke="#a232a8" stroke-width="1.6" stroke-linejoin="round"/></svg>
<svg class="r" style="left:1896px;top:184px;" width="10.6" height="7.2" viewBox="0 0 10.6 7.2"><path d="M1.55 1.50L5.30 4.95L9.05 1.50" fill="none" stroke="#444" stroke-width="1.5"/></svg>
<svg class="r" style="left:1954px;top:109px;" width="46" height="42" viewBox="0 0 46 42"><text x="0.5" y="19" font-size="23" fill="#1e8bcd" font-family="Liberation Sans,sans-serif" textLength="15" lengthAdjust="spacingAndGlyphs">A</text><text x="1" y="40.5" font-size="23" fill="#3b3a39" font-family="Liberation Sans,sans-serif" textLength="14" lengthAdjust="spacingAndGlyphs">Z</text><path d="M20 11H42.5L33.5 23V33.5H29V23Z" fill="#fafafa" stroke="#3b3a39" stroke-width="1.6" stroke-linejoin="round"/></svg>
<span class="t" style="top:162px;font-size:17.6px;left:1922.40px;transform-origin:0 50%;transform:scaleX(1.0021);color:#444;">Sortieren und</span>
<span class="t" style="top:186px;font-size:17.6px;left:1944.00px;transform-origin:0 50%;transform:scaleX(0.9509);color:#444;">Filtern</span>
<svg class="r" style="left:1996.2px;top:189.3px;" width="10.6" height="7.2" viewBox="0 0 10.6 7.2"><path d="M1.55 1.50L5.30 4.95L9.05 1.50" fill="none" stroke="#444" stroke-width="1.5"/></svg>
<svg class="r" style="left:2063px;top:108px;" width="47" height="46" viewBox="0 0 47 46"><circle cx="29.3" cy="16.7" r="15.2" fill="#fafafa" stroke="#3b3a39" stroke-width="1.6"/><path d="M18.5 27.5L1.5 44.5" stroke="#3b3a39" stroke-width="1.7"/></svg>
<span class="t" style="top:162px;font-size:17.6px;left:2041.60px;transform-origin:0 50%;transform:scaleX(0.9729);color:#444;">Suchen und</span>
<span class="t" style="top:186px;font-size:17.6px;left:2037.00px;transform-origin:0 50%;transform:scaleX(0.9732);color:#444;">Auswählen</span>
<svg class="r" style="left:2126.5px;top:189.3px;" width="10.6" height="7.2" viewBox="0 0 10.6 7.2"><path d="M1.55 1.50L5.30 4.95L9.05 1.50" fill="none" stroke="#444" stroke-width="1.5"/></svg>
<span class="t" style="top:222px;font-size:15.6px;left:1964.60px;transform-origin:0 50%;transform:scaleX(0.9674);color:#444;">Bearbeiten</span>
<div class="r" style="left:2153px;top:103px;width:1px;height:133px;background:#d2d0ce;"></div>
<svg class="r" style="left:2180px;top:108px;" width="35" height="44" viewBox="0 0 35 44"><path d="M16.7 1.2H30.1L18.5 19.2H32.8L10 42.6H3.3L14.5 25.9H1.1Z" fill="#83beec" stroke="#1e6fc0" stroke-width="1.6" stroke-linejoin="round"/></svg>
<span class="t" style="top:162px;font-size:17.6px;left:2175.40px;transform-origin:0 50%;transform:scaleX(0.9854);color:#444;">Ideen</span>
<span class="t" style="top:222px;font-size:15.6px;left:2177.80px;transform-origin:0 50%;transform:scaleX(0.9350);color:#444;">Ideen</span>
<div class="r" style="left:2239px;top:103px;width:1px;height:133px;background:#d2d0ce;"></div>
<svg class="r" style="left:2342px;top:226px;" width="17" height="11" viewBox="0 0 17 11"><path d="M1.2 9.5L8.5 2L15.8 9.5" fill="none" stroke="#3b3a39" stroke-width="1.6"/></svg>
<div class="r" style="left:2px;top:241px;width:2368px;height:1px;background:#d2d2d2;"></div>
<div class="r" style="left:2px;top:242px;width:2368px;height:7px;background:linear-gradient(#ececec,#fff)"></div>
<div class="r" style="left:9px;top:257px;width:150px;height:33px;border:1px solid #c6c6c6;box-sizing:content-box;background:#fdfdfd;box-shadow:inset 0 0 0 1px #fff"></div>
<span class="t" style="top:266px;font-size:18.5px;left:16.60px;transform-origin:0 50%;transform:scaleX(0.9536);color:#262626;">F13</span>
<svg class="r" style="left:142px;top:272px;" width="9" height="5" viewBox="0 0 9 5"><path d="M0.3 0H8.3L4.3 4.6Z" fill="#777"/></svg>
<div class="r" style="left:180.5px;top:266.5px;width:3.6px;height:3.2px;background:#b4b4b4;"></div>
<div class="r" style="left:180.5px;top:272px;width:3.6px;height:3.2px;background:#b4b4b4;"></div>
<div class="r" style="left:180.5px;top:277.5px;width:3.6px;height:3.2px;background:#b4b4b4;"></div>
<div class="r" style="left:206px;top:257px;width:162px;height:33px;border:1px solid #c6c6c6;box-sizing:content-box;background:#fdfdfd;box-shadow:inset 0 0 0 1px #fff"></div>
<svg class="r" style="left:225px;top:266px;" width="18" height="16" viewBox="0 0 18 16"><path d="M1.5 1.5L16 14.5M16 1.5L1.5 14.5" stroke="#b8b8b8" stroke-width="2.2"/></svg>
<svg class="r" style="left:278px;top:265px;" width="21" height="18" viewBox="0 0 21 18"><path d="M1.5 10L7.5 16L19 1.5" fill="none" stroke="#c0c0c0" stroke-width="3"/></svg>
<span class="t" style="top:263px;font-size:23px;left:332.50px;transform-origin:0 50%;transform:scaleX(1.0000);color:#5f5f5f;font-weight:bold;font-style:italic;font-family:'Liberation Serif',serif;">f</span>
<span class="t" style="top:268px;font-size:16px;left:340.50px;transform-origin:0 50%;transform:scaleX(1.0000);color:#5f5f5f;font-weight:bold;font-style:italic;font-family:'Liberation Serif',serif;">x</span>
<div class="r" style="left:374px;top:257px;width:1987px;height:91px;border:1px solid #c6c6c6;box-sizing:content-box;background:#fdfdfd;box-shadow:inset 0 0 0 1px #fff"></div>
<span class="t" style="top:266px;font-size:18.5px;left:391.40px;transform-origin:0 50%;transform:scaleX(1.0226);color:#262626;">0,9</span>
<svg class="r" style="left:2343px;top:269px;" width="13" height="10" viewBox="0 0 13 10"><path d="M1.2 8L6.5 2.2L11.8 8" fill="none" stroke="#6f6f6f" stroke-width="2.6"/></svg>
<div id="sheet" style="position:absolute;left:0;top:0;width:2340px;height:1159px;overflow:hidden">
<div class="r" style="left:36px;top:403px;width:2304px;height:1px;background:#d4d4d4;"></div>
<div class="r" style="left:2px;top:403px;width:33px;height:1px;background:#e4e4e4;"></div>
<div class="r" style="left:36px;top:440px;width:2304px;height:1px;background:#d4d4d4;"></div>
<div class="r" style="left:2px;top:440px;width:33px;height:1px;background:#e4e4e4;"></div>
<div class="r" style="left:36px;top:469px;width:2304px;height:1px;background:#d4d4d4;"></div>
<div class="r" style="left:2px;top:469px;width:33px;height:1px;background:#e4e4e4;"></div>
<div class="r" style="left:36px;top:498px;width:2304px;height:1px;background:#d4d4d4;"></div>
<div class="r" style="left:2px;top:498px;width:33px;height:1px;background:#e4e4e4;"></div>
<div class="r" style="left:36px;top:527px;width:2304px;height:1px;background:#d4d4d4;"></div>
<div class="r" style="left:2px;top:527px;width:33px;height:1px;background:#e4e4e4;"></div>
<div class="r" style="left:36px;top:556px;width:2304px;height:1px;background:#d4d4d4;"></div>
<div class="r" style="left:2px;top:556px;width:33px;height:1px;background:#e4e4e4;"></div>
<div class="r" style="left:36px;top:585px;width:2304px;height:1px;background:#d4d4d4;"></div>
<div class="r" style="left:2px;top:585px;width:33px;height:1px;background:#e4e4e4;"></div>
<div class="r" style="left:36px;top:614px;width:2304px;height:1px;background:#d4d4d4;"></div>
<div class="r" style="left:2px;top:614px;width:33px;height:1px;background:#e4e4e4;"></div>
<div class="r" style="left:36px;top:643px;width:2304px;height:1px;background:#d4d4d4;"></div>
<div class="r" style="left:2px;top:643px;width:33px;height:1px;background:#e4e4e4;"></div>
<div class="r" style="left:36px;top:672px;width:2304px;height:1px;background:#d4d4d4;"></div>
<div class="r" style="left:2px;top:672px;width:33px;height:1px;background:#e4e4e4;"></div>
<div class="r" style="left:36px;top:701px;width:2304px;height:1px;background:#d4d4d4;"></div>
<div class="r" style="left:2px;top:701px;width:33px;height:1px;background:#e4e4e4;"></div>
<div class="r" style="left:36px;top:730px;width:2304px;height:1px;background:#d4d4d4;"></div>
<div class="r" style="left:2px;top:730px;width:33px;height:1px;background:#e4e4e4;"></div>
<div class="r" style="left:36px;top:759px;width:2304px;height:1px;background:#d4d4d4;"></div>
<div class="r" style="left:2px;top:759px;width:33px;height:1px;background:#e4e4e4;"></div>
<div class="r" style="left:36px;top:788px;width:2304px;height:1px;background:#d4d4d4;"></div>
<div class="r" style="left:2px;top:788px;width:33px;height:1px;background:#e4e4e4;"></div>
<div class="r" style="left:36px;top:817px;width:2304px;height:1px;background:#d4d4d4;"></div>
<div class="r" style="left:2px;top:817px;width:33px;height:1px;background:#e4e4e4;"></div>
<div class="r" style="left:36px;top:846px;width:2304px;height:1px;background:#d4d4d4;"></div>
<div class="r" style="left:2px;top:846px;width:33px;height:1px;background:#e4e4e4;"></div>
<div class="r" style="left:36px;top:875px;width:2304px;height:1px;background:#d4d4d4;"></div>
<div class="r" style="left:2px;top:875px;width:33px;height:1px;background:#e4e4e4;"></div>
<div class="r" style="left:36px;top:904px;width:2304px;height:1px;background:#d4d4d4;"></div>
<div class="r" style="left:2px;top:904px;width:33px;height:1px;background:#e4e4e4;"></div>
<div class="r" style="left:36px;top:933px;width:2304px;height:1px;background:#d4d4d4;"></div>
<div class="r" style="left:2px;top:933px;width:33px;height:1px;background:#e4e4e4;"></div>
<div class="r" style="left:36px;top:962px;width:2304px;height:1px;background:#d4d4d4;"></div>
<div class="r" style="left:2px;top:962px;width:33px;height:1px;background:#e4e4e4;"></div>
<div class="r" style="left:36px;top:991px;width:2304px;height:1px;background:#d4d4d4;"></div>
<div class="r" style="left:2px;top:991px;width:33px;height:1px;background:#e4e4e4;"></div>
<div class="r" style="left:36px;top:1020px;width:2304px;height:1px;background:#d4d4d4;"></div>
<div class="r" style="left:2px;top:1020px;width:33px;height:1px;background:#e4e4e4;"></div>
<div class="r" style="left:36px;top:1049px;width:2304px;height:1px;background:#d4d4d4;"></div>
<div class="r" style="left:2px;top:1049px;width:33px;height:1px;background:#e4e4e4;"></div>
<div class="r" style="left:36px;top:1078px;width:2304px;height:1px;background:#d4d4d4;"></div>
<div class="r" style="left:2px;top:1078px;width:33px;height:1px;background:#e4e4e4;"></div>
<div class="r" style="left:36px;top:1107px;width:2304px;height:1px;background:#d4d4d4;"></div>
<div class="r" style="left:2px;top:1107px;width:33px;height:1px;background:#e4e4e4;"></div>
<div class="r" style="left:36px;top:1136px;width:2304px;height:1px;background:#d4d4d4;"></div>
<div class="r" style="left:2px;top:1136px;width:33px;height:1px;background:#e4e4e4;"></div>
<div class="r" style="left:36px;top:1165px;width:2304px;height:1px;background:#d4d4d4;"></div>
<div class="r" style="left:2px;top:1165px;width:33px;height:1px;background:#e4e4e4;"></div>
<div class="r" style="left:123px;top:385px;width:1px;height:774px;background:#d4d4d4;"></div>
<div class="r" style="left:211px;top:385px;width:1px;height:774px;background:#d4d4d4;"></div>
<div class="r" style="left:362px;top:385px;width:1px;height:774px;background:#d4d4d4;"></div>
<div class="r" style="left:454px;top:385px;width:1px;height:774px;background:#d4d4d4;"></div>
<div class="r" style="left:520px;top:385px;width:1px;height:774px;background:#d4d4d4;"></div>
<div class="r" style="left:606px;top:385px;width:1px;height:774px;background:#d4d4d4;"></div>
<div class="r" style="left:692px;top:385px;width:1px;height:774px;background:#d4d4d4;"></div>
<div class="r" style="left:770px;top:385px;width:1px;height:774px;background:#d4d4d4;"></div>
<div class="r" style="left:856px;top:385px;width:1px;height:774px;background:#d4d4d4;"></div>
<div class="r" style="left:932px;top:385px;width:1px;height:774px;background:#d4d4d4;"></div>
<div class="r" style="left:1008px;top:385px;width:1px;height:774px;background:#d4d4d4;"></div>
<div class="r" style="left:1086px;top:385px;width:1px;height:774px;background:#d4d4d4;"></div>
<div class="r" style="left:1172px;top:385px;width:1px;height:774px;background:#d4d4d4;"></div>
<div class="r" style="left:1248px;top:385px;width:1px;height:774px;background:#d4d4d4;"></div>
<div class="r" style="left:1324px;top:385px;width:1px;height:774px;background:#d4d4d4;"></div>
<div class="r" style="left:1402px;top:385px;width:1px;height:774px;background:#d4d4d4;"></div>
<div class="r" style="left:1488px;top:385px;width:1px;height:774px;background:#d4d4d4;"></div>
<div class="r" style="left:1564px;top:385px;width:1px;height:774px;background:#d4d4d4;"></div>
<div class="r" style="left:1640px;top:385px;width:1px;height:774px;background:#d4d4d4;"></div>
<div class="r" style="left:1718px;top:385px;width:1px;height:774px;background:#d4d4d4;"></div>
<div class="r" style="left:1804px;top:385px;width:1px;height:774px;background:#d4d4d4;"></div>
<div class="r" style="left:1880px;top:385px;width:1px;height:774px;background:#d4d4d4;"></div>
<div class="r" style="left:1956px;top:385px;width:1px;height:774px;background:#d4d4d4;"></div>
<div class="r" style="left:2034px;top:385px;width:1px;height:774px;background:#d4d4d4;"></div>
<div class="r" style="left:2120px;top:385px;width:1px;height:774px;background:#d4d4d4;"></div>
<div class="r" style="left:2218px;top:385px;width:1px;height:774px;background:#d4d4d4;"></div>
<div class="r" style="left:2338px;top:385px;width:1px;height:774px;background:#d4d4d4;"></div>
<div class="r" style="left:2339px;top:385px;width:1px;height:774px;background:#b4b4b4;"></div>
<div class="r" style="left:211px;top:404px;width:1px;height:36px;background:#fff;"></div>
<div class="r" style="left:454px;top:404px;width:1px;height:36px;background:#fff;"></div>
<div class="r" style="left:606px;top:404px;width:1px;height:36px;background:#fff;"></div>
<div class="r" style="left:692px;top:404px;width:1px;height:36px;background:#fff;"></div>
<div class="r" style="left:770px;top:404px;width:1px;height:36px;background:#fff;"></div>
<div class="r" style="left:856px;top:404px;width:1px;height:36px;background:#fff;"></div>
<div class="r" style="left:932px;top:404px;width:1px;height:36px;background:#fff;"></div>
<div class="r" style="left:1008px;top:404px;width:1px;height:36px;background:#fff;"></div>
<div class="r" style="left:1086px;top:404px;width:1px;height:36px;background:#fff;"></div>
<div class="r" style="left:1172px;top:404px;width:1px;height:36px;background:#fff;"></div>
<div class="r" style="left:211px;top:470px;width:1px;height:28px;background:#fff;"></div>
<div class="r" style="left:362px;top:470px;width:1px;height:28px;background:#fff;"></div>
<div class="r" style="left:362px;top:499px;width:1px;height:28px;background:#fff;"></div>
<div class="r" style="left:606px;top:499px;width:1px;height:28px;background:#fff;"></div>
<div class="r" style="left:692px;top:499px;width:1px;height:28px;background:#fff;"></div>
<div class="r" style="left:770px;top:499px;width:1px;height:28px;background:#fff;"></div>
<div class="r" style="left:857px;top:499px;width:315px;height:57px;background:#fff;"></div>
<div class="r" style="left:1173px;top:499px;width:315px;height:57px;background:#fff;"></div>
<div class="r" style="left:1489px;top:499px;width:315px;height:57px;background:#fff;"></div>
<div class="r" style="left:1805px;top:499px;width:315px;height:57px;background:#fff;"></div>
<div class="r" style="left:36px;top:615px;width:484px;height:545px;background:#f2f2f2;"></div>
<div class="r" style="left:520px;top:615px;width:86px;height:545px;background:#fff2cc;"></div>
<div class="r" style="left:606px;top:615px;width:86px;height:545px;background:#d9e1f2;"></div>
<div class="r" style="left:692px;top:615px;width:78px;height:545px;background:#bdd7ee;"></div>
<div class="r" style="left:770px;top:615px;width:86px;height:545px;background:#9dc3e6;"></div>
<div class="r" style="left:856px;top:615px;width:76px;height:545px;background:#fff2cc;"></div>
<div class="r" style="left:932px;top:615px;width:76px;height:545px;background:#fff2cc;"></div>
<div class="r" style="left:1008px;top:615px;width:78px;height:545px;background:#bdd7ee;"></div>
<div class="r" style="left:1086px;top:615px;width:86px;height:545px;background:#9dc3e6;"></div>
<div class="r" style="left:1172px;top:615px;width:76px;height:545px;background:#fff2cc;"></div>
<div class="r" style="left:1248px;top:615px;width:76px;height:545px;background:#fff2cc;"></div>
<div class="r" style="left:1324px;top:615px;width:78px;height:545px;background:#bdd7ee;"></div>
<div class="r" style="left:1402px;top:615px;width:86px;height:545px;background:#9dc3e6;"></div>
<div class="r" style="left:1488px;top:615px;width:76px;height:545px;background:#fff2cc;"></div>
<div class="r" style="left:1564px;top:615px;width:76px;height:545px;background:#fff2cc;"></div>
<div class="r" style="left:1640px;top:615px;width:78px;height:545px;background:#bdd7ee;"></div>
<div class="r" style="left:1718px;top:615px;width:86px;height:545px;background:#9dc3e6;"></div>
<div class="r" style="left:1804px;top:615px;width:76px;height:545px;background:#fff2cc;"></div>
<div class="r" style="left:1880px;top:615px;width:76px;height:545px;background:#fff2cc;"></div>
<div class="r" style="left:1956px;top:615px;width:78px;height:545px;background:#bdd7ee;"></div>
<div class="r" style="left:2034px;top:615px;width:86px;height:545px;background:#9dc3e6;"></div>
<div class="r" style="left:2120px;top:615px;width:98px;height:545px;background:#bdd7ee;"></div>
<div class="r" style="left:2218px;top:615px;width:120px;height:545px;background:#9dc3e6;"></div>
<div class="r" style="left:2120px;top:499px;width:98px;height:115px;background:#bdd7ee;"></div>
<div class="r" style="left:2218px;top:499px;width:120px;height:115px;background:#9dc3e6;"></div>
<div class="r" style="left:692px;top:528px;width:164px;height:28px;background:#d0cece;"></div>
<div class="r" style="left:606px;top:557px;width:86px;height:28px;background:#f2f2f2;"></div>
<div class="r" style="left:770px;top:557px;width:86px;height:28px;background:#f2f2f2;"></div>
<div class="r" style="left:1086px;top:557px;width:86px;height:28px;background:#f2f2f2;"></div>
<div class="r" style="left:1402px;top:557px;width:86px;height:28px;background:#f2f2f2;"></div>
<div class="r" style="left:1718px;top:557px;width:86px;height:28px;background:#f2f2f2;"></div>
<div class="r" style="left:2034px;top:557px;width:86px;height:28px;background:#f2f2f2;"></div>
<div class="r" style="left:520px;top:498px;width:1819px;height:1px;background:#000;"></div>
<div class="r" style="left:520px;top:527px;width:337px;height:1px;background:#000;"></div>
<div class="r" style="left:2120px;top:527px;width:219px;height:1px;background:#000;"></div>
<div class="r" style="left:520px;top:556px;width:1601px;height:1px;background:#000;"></div>
<div class="r" style="left:520px;top:585px;width:1601px;height:1px;background:#000;"></div>
<div class="r" style="left:36px;top:643px;width:2303px;height:1px;background:#000;"></div>
<div class="r" style="left:36px;top:672px;width:2303px;height:1px;background:#000;"></div>
<div class="r" style="left:36px;top:701px;width:2303px;height:1px;background:#000;"></div>
<div class="r" style="left:36px;top:730px;width:2303px;height:1px;background:#000;"></div>
<div class="r" style="left:36px;top:759px;width:2303px;height:1px;background:#000;"></div>
<div class="r" style="left:36px;top:788px;width:2303px;height:1px;background:#000;"></div>
<div class="r" style="left:36px;top:817px;width:2303px;height:1px;background:#000;"></div>
<div class="r" style="left:36px;top:846px;width:2303px;height:1px;background:#000;"></div>
<div class="r" style="left:36px;top:875px;width:2303px;height:1px;background:#000;"></div>
<div class="r" style="left:36px;top:904px;width:2303px;height:1px;background:#000;"></div>
<div class="r" style="left:36px;top:933px;width:2303px;height:1px;background:#000;"></div>
<div class="r" style="left:36px;top:962px;width:2303px;height:1px;background:#000;"></div>
<div class="r" style="left:36px;top:991px;width:2303px;height:1px;background:#000;"></div>
<div class="r" style="left:36px;top:1020px;width:2303px;height:1px;background:#000;"></div>
<div class="r" style="left:36px;top:1049px;width:2303px;height:1px;background:#000;"></div>
<div class="r" style="left:36px;top:1078px;width:2303px;height:1px;background:#000;"></div>
<div class="r" style="left:36px;top:1107px;width:2303px;height:1px;background:#000;"></div>
<div class="r" style="left:36px;top:1136px;width:2303px;height:1px;background:#000;"></div>
<div class="r" style="left:36px;top:1165px;width:2303px;height:1px;background:#000;"></div>
<div class="r" style="left:520px;top:498px;width:1px;height:661px;background:#000;"></div>
<div class="r" style="left:856px;top:498px;width:1px;height:661px;background:#000;"></div>
<div class="r" style="left:1172px;top:498px;width:1px;height:661px;background:#000;"></div>
<div class="r" style="left:1488px;top:498px;width:1px;height:661px;background:#000;"></div>
<div class="r" style="left:1804px;top:498px;width:1px;height:661px;background:#000;"></div>
<div class="r" style="left:2120px;top:498px;width:1px;height:661px;background:#000;"></div>
<div class="r" style="left:2218px;top:498px;width:1px;height:661px;background:#000;"></div>
<div class="r" style="left:2338px;top:498px;width:1px;height:661px;background:#000;"></div>
<div class="r" style="left:606px;top:527px;width:1px;height:88px;background:#000;"></div>
<div class="r" style="left:692px;top:527px;width:1px;height:59px;background:#000;"></div>
<div class="r" style="left:770px;top:556px;width:1px;height:30px;background:#000;"></div>
<div class="r" style="left:932px;top:585px;width:1px;height:30px;background:#000;"></div>
<div class="r" style="left:1008px;top:585px;width:1px;height:30px;background:#000;"></div>
<div class="r" style="left:1248px;top:585px;width:1px;height:30px;background:#000;"></div>
<div class="r" style="left:1324px;top:585px;width:1px;height:30px;background:#000;"></div>
<div class="r" style="left:1564px;top:585px;width:1px;height:30px;background:#000;"></div>
<div class="r" style="left:1640px;top:585px;width:1px;height:30px;background:#000;"></div>
<div class="r" style="left:1880px;top:585px;width:1px;height:30px;background:#000;"></div>
<div class="r" style="left:1956px;top:585px;width:1px;height:30px;background:#000;"></div>
<div class="r" style="left:1086px;top:556px;width:1px;height:30px;background:#000;"></div>
<div class="r" style="left:1402px;top:556px;width:1px;height:30px;background:#000;"></div>
<div class="r" style="left:1718px;top:556px;width:1px;height:30px;background:#000;"></div>
<div class="r" style="left:2034px;top:556px;width:1px;height:30px;background:#000;"></div>
<div class="r" style="left:2px;top:614px;width:2338px;height:1px;background:#9a9a9a;"></div>
<div class="r" style="left:35px;top:384px;width:2305px;height:1px;background:#9a9a9a;"></div>
<div class="r" style="left:35px;top:366px;width:1px;height:793px;background:#9a9a9a;"></div>
<svg class="r" style="left:849px;top:528px;" width="7" height="7" viewBox="0 0 7 7"><path d="M0 0H7V7Z" fill="#ff0000"/></svg>
<svg class="r" style="left:685px;top:557px;" width="7" height="7" viewBox="0 0 7 7"><path d="M0 0H7V7Z" fill="#ff0000"/></svg>
<svg class="r" style="left:849px;top:557px;" width="7" height="7" viewBox="0 0 7 7"><path d="M0 0H7V7Z" fill="#ff0000"/></svg>
<svg class="r" style="left:1165px;top:557px;" width="7" height="7" viewBox="0 0 7 7"><path d="M0 0H7V7Z" fill="#ff0000"/></svg>
<svg class="r" style="left:1481px;top:557px;" width="7" height="7" viewBox="0 0 7 7"><path d="M0 0H7V7Z" fill="#ff0000"/></svg>
<svg class="r" style="left:1797px;top:557px;" width="7" height="7" viewBox="0 0 7 7"><path d="M0 0H7V7Z" fill="#ff0000"/></svg>
<svg class="r" style="left:2113px;top:557px;" width="7" height="7" viewBox="0 0 7 7"><path d="M0 0H7V7Z" fill="#ff0000"/></svg>
<svg class="r" style="left:124px;top:499px;" width="7" height="7" viewBox="0 0 7 7"><path d="M0 0H7L0 7Z" fill="#3b7d23"/></svg>
<div class="r" style="left:521px;top:365px;width:85px;height:18px;background:#e1e1e1;"></div>
<div class="r" style="left:520px;top:383px;width:87px;height:2px;background:#217346;"></div>
<div class="r" style="left:35px;top:366px;width:1px;height:18px;background:linear-gradient(#fff,#d8d8d8)"></div>
<div class="r" style="left:123px;top:366px;width:1px;height:18px;background:linear-gradient(#fff,#d8d8d8)"></div>
<div class="r" style="left:211px;top:366px;width:1px;height:18px;background:linear-gradient(#fff,#d8d8d8)"></div>
<div class="r" style="left:362px;top:366px;width:1px;height:18px;background:linear-gradient(#fff,#d8d8d8)"></div>
<div class="r" style="left:454px;top:366px;width:1px;height:18px;background:linear-gradient(#fff,#d8d8d8)"></div>
<div class="r" style="left:520px;top:366px;width:1px;height:18px;background:linear-gradient(#fff,#d8d8d8)"></div>
<div class="r" style="left:606px;top:366px;width:1px;height:18px;background:linear-gradient(#fff,#d8d8d8)"></div>
<div class="r" style="left:692px;top:366px;width:1px;height:18px;background:linear-gradient(#fff,#d8d8d8)"></div>
<div class="r" style="left:770px;top:366px;width:1px;height:18px;background:linear-gradient(#fff,#d8d8d8)"></div>
<div class="r" style="left:856px;top:366px;width:1px;height:18px;background:linear-gradient(#fff,#d8d8d8)"></div>
<div class="r" style="left:932px;top:366px;width:1px;height:18px;background:linear-gradient(#fff,#d8d8d8)"></div>
<div class="r" style="left:1008px;top:366px;width:1px;height:18px;background:linear-gradient(#fff,#d8d8d8)"></div>
<div class="r" style="left:1086px;top:366px;width:1px;height:18px;background:linear-gradient(#fff,#d8d8d8)"></div>
<div class="r" style="left:1172px;top:366px;width:1px;height:18px;background:linear-gradient(#fff,#d8d8d8)"></div>
<div class="r" style="left:1248px;top:366px;width:1px;height:18px;background:linear-gradient(#fff,#d8d8d8)"></div>
<div class="r" style="left:1324px;top:366px;width:1px;height:18px;background:linear-gradient(#fff,#d8d8d8)"></div>
<div class="r" style="left:1402px;top:366px;width:1px;height:18px;background:linear-gradient(#fff,#d8d8d8)"></div>
<div class="r" style="left:1488px;top:366px;width:1px;height:18px;background:linear-gradient(#fff,#d8d8d8)"></div>
<div class="r" style="left:1564px;top:366px;width:1px;height:18px;background:linear-gradient(#fff,#d8d8d8)"></div>
<div class="r" style="left:1640px;top:366px;width:1px;height:18px;background:linear-gradient(#fff,#d8d8d8)"></div>
<div class="r" style="left:1718px;top:366px;width:1px;height:18px;background:linear-gradient(#fff,#d8d8d8)"></div>
<div class="r" style="left:1804px;top:366px;width:1px;height:18px;background:linear-gradient(#fff,#d8d8d8)"></div>
<div class="r" style="left:1880px;top:366px;width:1px;height:18px;background:linear-gradient(#fff,#d8d8d8)"></div>
<div class="r" style="left:1956px;top:366px;width:1px;height:18px;background:linear-gradient(#fff,#d8d8d8)"></div>
<div class="r" style="left:2034px;top:366px;width:1px;height:18px;background:linear-gradient(#fff,#d8d8d8)"></div>
<div class="r" style="left:2120px;top:366px;width:1px;height:18px;background:linear-gradient(#fff,#d8d8d8)"></div>
<div class="r" style="left:2218px;top:366px;width:1px;height:18px;background:linear-gradient(#fff,#d8d8d8)"></div>
<div class="r" style="left:2338px;top:366px;width:1px;height:18px;background:linear-gradient(#fff,#d8d8d8)"></div>
<span class="t" style="top:368px;font-size:16.9px;left:79.50px;transform:translateX(-50%) scaleX(1.0000);color:#444;">A</span>
<span class="t" style="top:368px;font-size:16.9px;left:167.50px;transform:translateX(-50%) scaleX(1.0000);color:#444;">B</span>
<span class="t" style="top:368px;font-size:16.9px;left:287.00px;transform:translateX(-50%) scaleX(1.0000);color:#444;">C</span>
<span class="t" style="top:368px;font-size:16.9px;left:408.50px;transform:translateX(-50%) scaleX(1.0000);color:#444;">D</span>
<span class="t" style="top:368px;font-size:16.9px;left:487.50px;transform:translateX(-50%) scaleX(1.0000);color:#444;">E</span>
<span class="t" style="top:368px;font-size:16.9px;left:563.50px;transform:translateX(-50%) scaleX(1.0000);color:#217346;">F</span>
<span class="t" style="top:368px;font-size:16.9px;left:649.50px;transform:translateX(-50%) scaleX(1.0000);color:#444;">G</span>
<span class="t" style="top:368px;font-size:16.9px;left:731.50px;transform:translateX(-50%) scaleX(1.0000);color:#444;">H</span>
<span class="t" style="top:368px;font-size:16.9px;left:813.50px;transform:translateX(-50%) scaleX(1.0000);color:#444;">I</span>
<span class="t" style="top:368px;font-size:16.9px;left:894.50px;transform:translateX(-50%) scaleX(1.0000);color:#444;">J</span>
<span class="t" style="top:368px;font-size:16.9px;left:970.50px;transform:translateX(-50%) scaleX(1.0000);color:#444;">K</span>
<span class="t" style="top:368px;font-size:16.9px;left:1047.50px;transform:translateX(-50%) scaleX(1.0000);color:#444;">L</span>
<span class="t" style="top:368px;font-size:16.9px;left:1129.50px;transform:translateX(-50%) scaleX(1.0000);color:#444;">M</span>
<span class="t" style="top:368px;font-size:16.9px;left:1210.50px;transform:translateX(-50%) scaleX(1.0000);color:#444;">N</span>
<span class="t" style="top:368px;font-size:16.9px;left:1286.50px;transform:translateX(-50%) scaleX(1.0000);color:#444;">O</span>
<span class="t" style="top:368px;font-size:16.9px;left:1363.50px;transform:translateX(-50%) scaleX(1.0000);color:#444;">P</span>
<span class="t" style="top:368px;font-size:16.9px;left:1445.50px;transform:translateX(-50%) scaleX(1.0000);color:#444;">Q</span>
<span class="t" style="top:368px;font-size:16.9px;left:1526.50px;transform:translateX(-50%) scaleX(1.0000);color:#444;">R</span>
<span class="t" style="top:368px;font-size:16.9px;left:1602.50px;transform:translateX(-50%) scaleX(1.0000);color:#444;">S</span>
<span class="t" style="top:368px;font-size:16.9px;left:1679.50px;transform:translateX(-50%) scaleX(1.0000);color:#444;">T</span>
<span class="t" style="top:368px;font-size:16.9px;left:1761.50px;transform:translateX(-50%) scaleX(1.0000);color:#444;">U</span>
<span class="t" style="top:368px;font-size:16.9px;left:1842.50px;transform:translateX(-50%) scaleX(1.0000);color:#444;">V</span>
<span class="t" style="top:368px;font-size:16.9px;left:1918.50px;transform:translateX(-50%) scaleX(1.0000);color:#444;">W</span>
<span class="t" style="top:368px;font-size:16.9px;left:1995.50px;transform:translateX(-50%) scaleX(1.0000);color:#444;">X</span>
<span class="t" style="top:368px;font-size:16.9px;left:2077.50px;transform:translateX(-50%) scaleX(1.0000);color:#444;">Y</span>
<span class="t" style="top:368px;font-size:16.9px;left:2169.50px;transform:translateX(-50%) scaleX(1.0000);color:#444;">Z</span>
<span class="t" style="top:368px;font-size:16.9px;left:2278.50px;transform:translateX(-50%) scaleX(1.0000);color:#444;">AA</span>
<svg class="r" style="left:20px;top:369px;" width="13" height="13" viewBox="0 0 13 13"><path d="M12 0V12H0Z" fill="#dcdcdc"/></svg>
<div class="r" style="left:2px;top:730px;width:32px;height:30px;background:#e1e1e1;"></div>
<div class="r" style="left:2px;top:730px;width:32px;height:1px;background:#c8c8c8;"></div>
<div class="r" style="left:2px;top:759px;width:32px;height:1px;background:#c8c8c8;"></div>
<div class="r" style="left:2px;top:384px;width:33px;height:1px;background:#d4d4d4;"></div>
<div class="r" style="left:34px;top:730px;width:2px;height:30px;background:#217346;"></div>
<span class="t" style="top:386px;font-size:17px;left:19.00px;transform:translateX(-50%) scaleX(0.9600);color:#444;">1</span>
<span class="t" style="top:423px;font-size:17px;left:19.00px;transform:translateX(-50%) scaleX(0.9600);color:#444;">2</span>
<span class="t" style="top:452px;font-size:17px;left:19.00px;transform:translateX(-50%) scaleX(0.9600);color:#444;">3</span>
<span class="t" style="top:481px;font-size:17px;left:19.00px;transform:translateX(-50%) scaleX(0.9600);color:#444;">4</span>
<span class="t" style="top:510px;font-size:17px;left:19.00px;transform:translateX(-50%) scaleX(0.9600);color:#444;">5</span>
<span class="t" style="top:539px;font-size:17px;left:19.00px;transform:translateX(-50%) scaleX(0.9600);color:#444;">6</span>
<span class="t" style="top:568px;font-size:17px;left:19.00px;transform:translateX(-50%) scaleX(0.9600);color:#444;">7</span>
<span class="t" style="top:597px;font-size:17px;left:19.00px;transform:translateX(-50%) scaleX(0.9600);color:#444;">8</span>
<span class="t" style="top:626px;font-size:17px;left:19.00px;transform:translateX(-50%) scaleX(0.9600);color:#444;">9</span>
<span class="t" style="top:655px;font-size:17px;left:19.00px;transform:translateX(-50%) scaleX(0.9600);color:#444;">10</span>
<span class="t" style="top:684px;font-size:17px;left:19.00px;transform:translateX(-50%) scaleX(0.9600);color:#444;">11</span>
<span class="t" style="top:713px;font-size:17px;left:19.00px;transform:translateX(-50%) scaleX(0.9600);color:#444;">12</span>
<span class="t" style="top:742px;font-size:17px;left:19.00px;transform:translateX(-50%) scaleX(0.9600);color:#217346;">13</span>
<span class="t" style="top:771px;font-size:17px;left:19.00px;transform:translateX(-50%) scaleX(0.9600);color:#444;">14</span>
<span class="t" style="top:800px;font-size:17px;left:19.00px;transform:translateX(-50%) scaleX(0.9600);color:#444;">15</span>
<span class="t" style="top:829px;font-size:17px;left:19.00px;transform:translateX(-50%) scaleX(0.9600);color:#444;">16</span>
<span class="t" style="top:858px;font-size:17px;left:19.00px;transform:translateX(-50%) scaleX(0.9600);color:#444;">17</span>
<span class="t" style="top:887px;font-size:17px;left:19.00px;transform:translateX(-50%) scaleX(0.9600);color:#444;">18</span>
<span class="t" style="top:916px;font-size:17px;left:19.00px;transform:translateX(-50%) scaleX(0.9600);color:#444;">19</span>
<span class="t" style="top:945px;font-size:17px;left:19.00px;transform:translateX(-50%) scaleX(0.9600);color:#444;">20</span>
<span class="t" style="top:974px;font-size:17px;left:19.00px;transform:translateX(-50%) scaleX(0.9600);color:#444;">21</span>
<span class="t" style="top:1003px;font-size:17px;left:19.00px;transform:translateX(-50%) scaleX(0.9600);color:#444;">22</span>
<span class="t" style="top:1032px;font-size:17px;left:19.00px;transform:translateX(-50%) scaleX(0.9600);color:#444;">23</span>
<span class="t" style="top:1061px;font-size:17px;left:19.00px;transform:translateX(-50%) scaleX(0.9600);color:#444;">24</span>
<span class="t" style="top:1090px;font-size:17px;left:19.00px;transform:translateX(-50%) scaleX(0.9600);color:#444;">25</span>
<span class="t" style="top:1119px;font-size:17px;left:19.00px;transform:translateX(-50%) scaleX(0.9600);color:#444;">26</span>
<span class="t" style="top:1148px;font-size:17px;left:19.00px;transform:translateX(-50%) scaleX(0.9600);color:#444;">27</span>
<span class="t" style="top:389px;font-size:13px;left:38.00px;transform-origin:0 50%;transform:scaleX(0.9000);color:#000;">OZ</span>
<span class="t" style="top:389px;font-size:13px;left:2123.00px;transform-origin:0 50%;transform:scaleX(0.8800);color:#000;">EP</span>
<span class="t" style="top:413px;font-size:19px;left:126.80px;transform-origin:0 50%;transform:scaleX(0.8353);color:#000;font-weight:bold;">Urkalkulation zum LV</span>
<span class="t" style="top:416px;font-size:13px;left:364.90px;transform-origin:0 50%;transform:scaleX(0.8645);color:#000;font-weight:bold;">BVBS GAEB Bauausf.</span>
<span class="t" style="top:416px;font-size:13px;left:522.70px;transform-origin:0 50%;transform:scaleX(0.8658);color:#000;font-weight:bold;">BVBS GAEB Musterdatei Bauausführung</span>
<span class="t" style="top:478px;font-size:13px;left:126.30px;transform-origin:0 50%;transform:scaleX(0.8707);color:#000;font-weight:bold;">Manfred Mustermann AGann AG</span>
<span class="t" style="top:507px;font-size:13px;left:126.30px;transform-origin:0 50%;transform:scaleX(0.8105);color:#000;font-weight:bold;">12345</span>
<span class="t" style="top:507px;font-size:13px;left:214.50px;transform-origin:0 50%;transform:scaleX(0.8544);color:#000;font-weight:bold;">Musterhausen</span>
<span class="t" style="top:507px;font-size:13px;left:688.50px;transform:translateX(-50%) scaleX(0.8650);color:#000;font-weight:bold;">Lohn</span>
<span class="t" style="top:521px;font-size:13px;left:1014.50px;transform:translateX(-50%) scaleX(0.8650);color:#000;font-weight:bold;">Stoffkosten</span>
<span class="t" style="top:521px;font-size:13px;left:1330.50px;transform:translateX(-50%) scaleX(0.8650);color:#000;font-weight:bold;">Gerätekosten</span>
<span class="t" style="top:521px;font-size:13px;left:1646.50px;transform:translateX(-50%) scaleX(0.8650);color:#000;font-weight:bold;">Sonstige Kosten</span>
<span class="t" style="top:521px;font-size:13px;left:1962.50px;transform:translateX(-50%) scaleX(0.8650);color:#000;font-weight:bold;">Nachunternehmer</span>
<span class="t" style="top:507px;font-size:13px;left:2169.50px;transform:translateX(-50%) scaleX(0.8650);color:#000;font-weight:bold;">EP</span>
<span class="t" style="top:507px;font-size:13px;left:2278.50px;transform:translateX(-50%) scaleX(0.8650);color:#000;font-weight:bold;">GP</span>
<span class="t" style="top:594px;font-size:13px;left:2169.50px;transform:translateX(-50%) scaleX(0.8650);color:#000;font-weight:bold;">EP</span>
<span class="t" style="top:594px;font-size:13px;left:2278.50px;transform:translateX(-50%) scaleX(0.8650);color:#000;font-weight:bold;">GP</span>
<span class="t p" style="top:536px;font-size:13px;left:2336.00px;transform-origin:100% 50%;transform:translateX(-100%) scaleX(0.8260);color:#000;font-weight:bold;">695.387,00 €</span>
<span class="t" style="top:536px;font-size:13px;left:523.00px;transform-origin:0 50%;transform:scaleX(0.8477);color:#000;">Verr.lohn</span>
<span class="t" style="top:536px;font-size:13px;left:570.50px;transform-origin:0 50%;transform:scaleX(0.8728);color:#000;font-weight:bold;">VL</span>
<span class="t p" style="top:536px;font-size:13px;left:849.70px;transform-origin:100% 50%;transform:translateX(-100%) scaleX(0.8220);color:#000;">22,38 €</span>
<span class="t p" style="top:565px;font-size:13px;left:690.00px;transform-origin:100% 50%;transform:translateX(-100%) scaleX(0.8220);color:#000;">6825,00</span>
<span class="t p" style="top:565px;font-size:13px;left:853.50px;transform-origin:100% 50%;transform:translateX(-100%) scaleX(0.8220);color:#000;">152743,50</span>
<span class="t p" style="top:565px;font-size:13px;left:1166.50px;transform-origin:100% 50%;transform:translateX(-100%) scaleX(0.8220);color:#000;">-   €</span>
<span class="t p" style="top:565px;font-size:13px;left:1484.00px;transform-origin:100% 50%;transform:translateX(-100%) scaleX(0.8220);color:#000;">183.715,50 €</span>
<span class="t p" style="top:565px;font-size:13px;left:1800.00px;transform-origin:100% 50%;transform:translateX(-100%) scaleX(0.8220);color:#000;">101.403,00 €</span>
<span class="t p" style="top:565px;font-size:13px;left:2116.00px;transform-origin:100% 50%;transform:translateX(-100%) scaleX(0.8220);color:#000;">257.525,00 €</span>
<span class="t" style="top:594px;font-size:13px;left:38.00px;transform-origin:0 50%;transform:scaleX(0.8650);color:#000;font-weight:bold;">Pos</span>
<span class="t" style="top:594px;font-size:13px;left:126.00px;transform-origin:0 50%;transform:scaleX(0.8650);color:#000;font-weight:bold;">PosArt</span>
<span class="t" style="top:594px;font-size:13px;left:214.00px;transform-origin:0 50%;transform:scaleX(0.8650);color:#000;font-weight:bold;">Kurztext</span>
<span class="t" style="top:594px;font-size:13px;left:365.00px;transform-origin:0 50%;transform:scaleX(0.8650);color:#000;font-weight:bold;">Menge</span>
<span class="t" style="top:594px;font-size:13px;left:457.00px;transform-origin:0 50%;transform:scaleX(0.8650);color:#000;font-weight:bold;">Einheit</span>
<span class="t" style="top:594px;font-size:13px;left:563.50px;transform:translateX(-50%) scaleX(0.8650);color:#000;font-weight:bold;">Std/Einh.</span>
<span class="t" style="top:594px;font-size:13px;left:649.50px;transform:translateX(-50%) scaleX(0.8650);color:#000;font-weight:bold;">Std/Pos.</span>
<span class="t" style="top:594px;font-size:13px;left:731.50px;transform:translateX(-50%) scaleX(0.8650);color:#000;font-weight:bold;">EP</span>
<span class="t" style="top:594px;font-size:13px;left:813.50px;transform:translateX(-50%) scaleX(0.8650);color:#000;font-weight:bold;">GB</span>
<span class="t" style="top:594px;font-size:13px;left:894.50px;transform:translateX(-50%) scaleX(0.8650);color:#000;font-weight:bold;">EK</span>
<span class="t" style="top:594px;font-size:13px;left:970.50px;transform:translateX(-50%) scaleX(0.8400);color:#000;">Zuschlag %</span>
<span class="t" style="top:594px;font-size:13px;left:1047.50px;transform:translateX(-50%) scaleX(0.8650);color:#000;font-weight:bold;">EP</span>
<span class="t" style="top:594px;font-size:13px;left:1129.50px;transform:translateX(-50%) scaleX(0.8650);color:#000;font-weight:bold;">GB</span>
<span class="t" style="top:594px;font-size:13px;left:1210.50px;transform:translateX(-50%) scaleX(0.8650);color:#000;font-weight:bold;">EK</span>
<span class="t" style="top:594px;font-size:13px;left:1286.50px;transform:translateX(-50%) scaleX(0.8400);color:#000;">Zuschlag %</span>
<span class="t" style="top:594px;font-size:13px;left:1363.50px;transform:translateX(-50%) scaleX(0.8650);color:#000;font-weight:bold;">EP</span>
<span class="t" style="top:594px;font-size:13px;left:1445.50px;transform:translateX(-50%) scaleX(0.8650);color:#000;font-weight:bold;">GB</span>
<span class="t" style="top:594px;font-size:13px;left:1526.50px;transform:translateX(-50%) scaleX(0.8650);color:#000;font-weight:bold;">EK</span>
<span class="t" style="top:594px;font-size:13px;left:1602.50px;transform:translateX(-50%) scaleX(0.8400);color:#000;">Zuschlag %</span>
<span class="t" style="top:594px;font-size:13px;left:1679.50px;transform:translateX(-50%) scaleX(0.8650);color:#000;font-weight:bold;">EP</span>
<span class="t" style="top:594px;font-size:13px;left:1761.50px;transform:translateX(-50%) scaleX(0.8650);color:#000;font-weight:bold;">GB</span>
<span class="t" style="top:594px;font-size:13px;left:1842.50px;transform:translateX(-50%) scaleX(0.8650);color:#000;font-weight:bold;">EK</span>
<span class="t" style="top:594px;font-size:13px;left:1918.50px;transform:translateX(-50%) scaleX(0.8400);color:#000;">Zuschlag %</span>
<span class="t" style="top:594px;font-size:13px;left:1995.50px;transform:translateX(-50%) scaleX(0.8650);color:#000;font-weight:bold;">EP</span>
<span class="t" style="top:594px;font-size:13px;left:2077.50px;transform:translateX(-50%) scaleX(0.8650);color:#000;font-weight:bold;">GB</span>
<span class="t" style="top:623px;font-size:13px;left:43.60px;transform-origin:0 50%;transform:scaleX(0.8220);color:#000;word-spacing:3.8px;">1. 1. 10</span>
<div class="r" style="left:124px;top:615px;width:87px;height:28px;overflow:hidden"><span class="t" style="left:2px;top:8px;font-size:13px;color:#000;transform-origin:0 50%;transform:scaleX(0.9)">NORMAL</span></div>
<div class="r" style="left:212px;top:615px;width:150px;height:28px;overflow:hidden"><span class="t" style="left:2px;top:8px;font-size:13px;color:#000;transform-origin:0 50%;transform:scaleX(0.821)">Baustelleneinrichtung einrichten</span></div>
<span class="t p" style="top:623px;font-size:13px;left:452.00px;transform-origin:100% 50%;transform:translateX(-100%) scaleX(0.8220);color:#000;">1,000</span>
<span class="t" style="top:623px;font-size:13px;left:487.50px;transform:translateX(-50%) scaleX(0.8500);color:#000;">psch</span>
<span class="t p" style="top:623px;font-size:13px;left:604.00px;transform-origin:100% 50%;transform:translateX(-100%) scaleX(0.8220);color:#000;">10,00</span>
<span class="t p" style="top:623px;font-size:13px;left:690.00px;transform-origin:100% 50%;transform:translateX(-100%) scaleX(0.8220);color:#000;">10,00</span>
<span class="t p" style="top:623px;font-size:13px;left:763.70px;transform-origin:100% 50%;transform:translateX(-100%) scaleX(0.8220);color:#000;">223,80 €</span>
<span class="t p" style="top:623px;font-size:13px;left:849.70px;transform-origin:100% 50%;transform:translateX(-100%) scaleX(0.8220);color:#000;">223,80 €</span>
<span class="t p" style="top:623px;font-size:13px;left:925.70px;transform-origin:100% 50%;transform:translateX(-100%) scaleX(0.8220);color:#000;">-     €</span>
<span class="t p" style="top:623px;font-size:13px;left:1006.00px;transform-origin:100% 50%;transform:translateX(-100%) scaleX(0.8220);color:#000;">4,00</span>
<span class="t p" style="top:623px;font-size:13px;left:1079.70px;transform-origin:100% 50%;transform:translateX(-100%) scaleX(0.8220);color:#000;">-     €</span>
<span class="t p" style="top:623px;font-size:13px;left:1165.70px;transform-origin:100% 50%;transform:translateX(-100%) scaleX(0.8220);color:#000;">-     €</span>
<span class="t p" style="top:623px;font-size:13px;left:1241.70px;transform-origin:100% 50%;transform:translateX(-100%) scaleX(0.8220);color:#000;">200,00 €</span>
<span class="t p" style="top:623px;font-size:13px;left:1322.00px;transform-origin:100% 50%;transform:translateX(-100%) scaleX(0.8220);color:#000;">2,00</span>
<span class="t p" style="top:623px;font-size:13px;left:1395.70px;transform-origin:100% 50%;transform:translateX(-100%) scaleX(0.8220);color:#000;">204,00 €</span>
<span class="t p" style="top:623px;font-size:13px;left:1481.70px;transform-origin:100% 50%;transform:translateX(-100%) scaleX(0.8220);color:#000;">204,00 €</span>
<span class="t p" style="top:623px;font-size:13px;left:1557.70px;transform-origin:100% 50%;transform:translateX(-100%) scaleX(0.8220);color:#000;">300,00 €</span>
<span class="t p" style="top:623px;font-size:13px;left:1638.00px;transform-origin:100% 50%;transform:translateX(-100%) scaleX(0.8220);color:#000;">7,00</span>
<span class="t p" style="top:623px;font-size:13px;left:1711.70px;transform-origin:100% 50%;transform:translateX(-100%) scaleX(0.8220);color:#000;">321,00 €</span>
<span class="t p" style="top:623px;font-size:13px;left:1797.70px;transform-origin:100% 50%;transform:translateX(-100%) scaleX(0.8220);color:#000;">321,00 €</span>
<span class="t p" style="top:623px;font-size:13px;left:1873.70px;transform-origin:100% 50%;transform:translateX(-100%) scaleX(0.8220);color:#000;">200,00 €</span>
<span class="t p" style="top:623px;font-size:13px;left:1954.00px;transform-origin:100% 50%;transform:translateX(-100%) scaleX(0.8220);color:#000;">5,00</span>
<span class="t p" style="top:623px;font-size:13px;left:2027.70px;transform-origin:100% 50%;transform:translateX(-100%) scaleX(0.8220);color:#000;">210,00 €</span>
<span class="t p" style="top:623px;font-size:13px;left:2113.70px;transform-origin:100% 50%;transform:translateX(-100%) scaleX(0.8220);color:#000;">210,00 €</span>
<span class="t p" style="top:623px;font-size:13px;left:2211.70px;transform-origin:100% 50%;transform:translateX(-100%) scaleX(0.8220);color:#000;">958,80 €</span>
<span class="t p" style="top:623px;font-size:13px;left:2331.70px;transform-origin:100% 50%;transform:translateX(-100%) scaleX(0.8220);color:#000;">958,80 €</span>
<span class="t" style="top:652px;font-size:13px;left:43.60px;transform-origin:0 50%;transform:scaleX(0.8220);color:#000;word-spacing:3.8px;">1. 1. 10.1</span>
<div class="r" style="left:124px;top:644px;width:87px;height:28px;overflow:hidden"><span class="t" style="left:2px;top:8px;font-size:13px;color:#000;transform-origin:0 50%;transform:scaleX(0.895)">BEDARF(MIT G</span></div>
<div class="r" style="left:212px;top:644px;width:150px;height:28px;overflow:hidden"><span class="t" style="left:2px;top:8px;font-size:13px;color:#000;transform-origin:0 50%;transform:scaleX(0.826)">Betreiben der Wasserhaltungsanlage</span></div>
<span class="t p" style="top:652px;font-size:13px;left:452.00px;transform-origin:100% 50%;transform:translateX(-100%) scaleX(0.8220);color:#000;">1,000</span>
<span class="t" style="top:652px;font-size:13px;left:487.50px;transform:translateX(-50%) scaleX(0.8500);color:#000;">Psch</span>
<span class="t p" style="top:652px;font-size:13px;left:604.00px;transform-origin:100% 50%;transform:translateX(-100%) scaleX(0.8220);color:#000;">20,00</span>
<span class="t p" style="top:652px;font-size:13px;left:690.00px;transform-origin:100% 50%;transform:translateX(-100%) scaleX(0.8220);color:#000;">20,00</span>
<span class="t p" style="top:652px;font-size:13px;left:763.70px;transform-origin:100% 50%;transform:translateX(-100%) scaleX(0.8220);color:#000;">447,60 €</span>
<span class="t p" style="top:652px;font-size:13px;left:849.70px;transform-origin:100% 50%;transform:translateX(-100%) scaleX(0.8220);color:#000;">447,60 €</span>
<span class="t p" style="top:652px;font-size:13px;left:925.70px;transform-origin:100% 50%;transform:translateX(-100%) scaleX(0.8220);color:#000;">-     €</span>
<span class="t p" style="top:652px;font-size:13px;left:1006.00px;transform-origin:100% 50%;transform:translateX(-100%) scaleX(0.8220);color:#000;">4,00</span>
<span class="t p" style="top:652px;font-size:13px;left:1079.70px;transform-origin:100% 50%;transform:translateX(-100%) scaleX(0.8220);color:#000;">-     €</span>
<span class="t p" style="top:652px;font-size:13px;left:1165.70px;transform-origin:100% 50%;transform:translateX(-100%) scaleX(0.8220);color:#000;">-     €</span>
<span class="t p" style="top:652px;font-size:13px;left:1241.70px;transform-origin:100% 50%;transform:translateX(-100%) scaleX(0.8220);color:#000;">400,00 €</span>
<span class="t p" style="top:652px;font-size:13px;left:1322.00px;transform-origin:100% 50%;transform:translateX(-100%) scaleX(0.8220);color:#000;">5,00</span>
<span class="t p" style="top:652px;font-size:13px;left:1395.70px;transform-origin:100% 50%;transform:translateX(-100%) scaleX(0.8220);color:#000;">420,00 €</span>
<span class="t p" style="top:652px;font-size:13px;left:1481.70px;transform-origin:100% 50%;transform:translateX(-100%) scaleX(0.8220);color:#000;">420,00 €</span>
<span class="t p" style="top:652px;font-size:13px;left:1557.70px;transform-origin:100% 50%;transform:translateX(-100%) scaleX(0.8220);color:#000;">100,00 €</span>
<span class="t p" style="top:652px;font-size:13px;left:1638.00px;transform-origin:100% 50%;transform:translateX(-100%) scaleX(0.8220);color:#000;">2,00</span>
<span class="t p" style="top:652px;font-size:13px;left:1711.70px;transform-origin:100% 50%;transform:translateX(-100%) scaleX(0.8220);color:#000;">102,00 €</span>
<span class="t p" style="top:652px;font-size:13px;left:1797.70px;transform-origin:100% 50%;transform:translateX(-100%) scaleX(0.8220);color:#000;">102,00 €</span>
<span class="t p" style="top:652px;font-size:13px;left:1873.70px;transform-origin:100% 50%;transform:translateX(-100%) scaleX(0.8220);color:#000;">400,00 €</span>
<span class="t p" style="top:652px;font-size:13px;left:1954.00px;transform-origin:100% 50%;transform:translateX(-100%) scaleX(0.8220);color:#000;">7,00</span>
<span class="t p" style="top:652px;font-size:13px;left:2027.70px;transform-origin:100% 50%;transform:translateX(-100%) scaleX(0.8220);color:#000;">428,00 €</span>
<span class="t p" style="top:652px;font-size:13px;left:2113.70px;transform-origin:100% 50%;transform:translateX(-100%) scaleX(0.8220);color:#000;">428,00 €</span>
<span class="t p" style="top:652px;font-size:13px;left:2211.70px;transform-origin:100% 50%;transform:translateX(-100%) scaleX(0.8220);color:#000;">1.397,60 €</span>
<span class="t p" style="top:652px;font-size:13px;left:2331.70px;transform-origin:100% 50%;transform:translateX(-100%) scaleX(0.8220);color:#000;">1.397,60 €</span>
<span class="t" style="top:681px;font-size:13px;left:43.60px;transform-origin:0 50%;transform:scaleX(0.8220);color:#000;word-spacing:3.8px;">1. 1. 10.A</span>
<div class="r" style="left:124px;top:673px;width:87px;height:28px;overflow:hidden"><span class="t" style="left:2px;top:8px;font-size:13px;color:#000;transform-origin:0 50%;transform:scaleX(0.895)">BEDARF(MIT G</span></div>
<div class="r" style="left:212px;top:673px;width:150px;height:28px;overflow:hidden"><span class="t" style="left:2px;top:8px;font-size:13px;color:#000;transform-origin:0 50%;transform:scaleX(0.826)">Betreiben der Wasserhaltungsanlage</span></div>
<span class="t p" style="top:681px;font-size:13px;left:452.00px;transform-origin:100% 50%;transform:translateX(-100%) scaleX(0.8220);color:#000;">1,000</span>
<span class="t" style="top:681px;font-size:13px;left:487.50px;transform:translateX(-50%) scaleX(0.9000);color:#000;">PSCH</span>
<span class="t p" style="top:681px;font-size:13px;left:604.00px;transform-origin:100% 50%;transform:translateX(-100%) scaleX(0.8220);color:#000;">0,00</span>
<span class="t p" style="top:681px;font-size:13px;left:690.00px;transform-origin:100% 50%;transform:translateX(-100%) scaleX(0.8220);color:#000;">0,00</span>
<span class="t p" style="top:681px;font-size:13px;left:763.70px;transform-origin:100% 50%;transform:translateX(-100%) scaleX(0.8220);color:#000;">-     €</span>
<span class="t p" style="top:681px;font-size:13px;left:849.70px;transform-origin:100% 50%;transform:translateX(-100%) scaleX(0.8220);color:#000;">-     €</span>
<span class="t p" style="top:681px;font-size:13px;left:925.70px;transform-origin:100% 50%;transform:translateX(-100%) scaleX(0.8220);color:#000;">-     €</span>
<span class="t p" style="top:681px;font-size:13px;left:1006.00px;transform-origin:100% 50%;transform:translateX(-100%) scaleX(0.8220);color:#000;">4,00</span>
<span class="t p" style="top:681px;font-size:13px;left:1079.70px;transform-origin:100% 50%;transform:translateX(-100%) scaleX(0.8220);color:#000;">-     €</span>
<span class="t p" style="top:681px;font-size:13px;left:1165.70px;transform-origin:100% 50%;transform:translateX(-100%) scaleX(0.8220);color:#000;">-     €</span>
<span class="t p" style="top:681px;font-size:13px;left:1241.70px;transform-origin:100% 50%;transform:translateX(-100%) scaleX(0.8220);color:#000;">-     €</span>
<span class="t p" style="top:681px;font-size:13px;left:1322.00px;transform-origin:100% 50%;transform:translateX(-100%) scaleX(0.8220);color:#000;">2,00</span>
<span class="t p" style="top:681px;font-size:13px;left:1395.70px;transform-origin:100% 50%;transform:translateX(-100%) scaleX(0.8220);color:#000;">-     €</span>
<span class="t p" style="top:681px;font-size:13px;left:1481.70px;transform-origin:100% 50%;transform:translateX(-100%) scaleX(0.8220);color:#000;">-     €</span>
<span class="t p" style="top:681px;font-size:13px;left:1557.70px;transform-origin:100% 50%;transform:translateX(-100%) scaleX(0.8220);color:#000;">-     €</span>
<span class="t p" style="top:681px;font-size:13px;left:1638.00px;transform-origin:100% 50%;transform:translateX(-100%) scaleX(0.8220);color:#000;">2,00</span>
<span class="t p" style="top:681px;font-size:13px;left:1711.70px;transform-origin:100% 50%;transform:translateX(-100%) scaleX(0.8220);color:#000;">-     €</span>
<span class="t p" style="top:681px;font-size:13px;left:1797.70px;transform-origin:100% 50%;transform:translateX(-100%) scaleX(0.8220);color:#000;">-     €</span>
<span class="t p" style="top:681px;font-size:13px;left:1873.70px;transform-origin:100% 50%;transform:translateX(-100%) scaleX(0.8220);color:#000;">-     €</span>
<span class="t p" style="top:681px;font-size:13px;left:1954.00px;transform-origin:100% 50%;transform:translateX(-100%) scaleX(0.8220);color:#000;">2,00</span>
<span class="t p" style="top:681px;font-size:13px;left:2027.70px;transform-origin:100% 50%;transform:translateX(-100%) scaleX(0.8220);color:#000;">-     €</span>
<span class="t p" style="top:681px;font-size:13px;left:2113.70px;transform-origin:100% 50%;transform:translateX(-100%) scaleX(0.8220);color:#000;">-     €</span>
<span class="t p" style="top:681px;font-size:13px;left:2211.70px;transform-origin:100% 50%;transform:translateX(-100%) scaleX(0.8220);color:#000;">-     €</span>
<span class="t p" style="top:681px;font-size:13px;left:2331.70px;transform-origin:100% 50%;transform:translateX(-100%) scaleX(0.8220);color:#000;">-     €</span>
<span class="t" style="top:710px;font-size:13px;left:43.60px;transform-origin:0 50%;transform:scaleX(0.8220);color:#000;word-spacing:3.8px;">1. 2. 10</span>
<div class="r" style="left:124px;top:702px;width:87px;height:28px;overflow:hidden"><span class="t" style="left:2px;top:8px;font-size:13px;color:#000;transform-origin:0 50%;transform:scaleX(0.9)">NORMAL</span></div>
<div class="r" style="left:212px;top:702px;width:150px;height:28px;overflow:hidden"><span class="t" style="left:2px;top:8px;font-size:13px;color:#000;transform-origin:0 50%;transform:scaleX(0.847)">Boden für Baugrube, BK 3</span></div>
<span class="t p" style="top:710px;font-size:13px;left:452.00px;transform-origin:100% 50%;transform:translateX(-100%) scaleX(0.8220);color:#000;">450,000</span>
<span class="t" style="top:710px;font-size:13px;left:487.50px;transform:translateX(-50%) scaleX(0.8500);color:#000;">m3</span>
<span class="t p" style="top:710px;font-size:13px;left:604.00px;transform-origin:100% 50%;transform:translateX(-100%) scaleX(0.8220);color:#000;">0,70</span>
<span class="t p" style="top:710px;font-size:13px;left:690.00px;transform-origin:100% 50%;transform:translateX(-100%) scaleX(0.8220);color:#000;">315,00</span>
<span class="t p" style="top:710px;font-size:13px;left:763.70px;transform-origin:100% 50%;transform:translateX(-100%) scaleX(0.8220);color:#000;">15,67 €</span>
<span class="t p" style="top:710px;font-size:13px;left:849.70px;transform-origin:100% 50%;transform:translateX(-100%) scaleX(0.8220);color:#000;">7.049,70 €</span>
<span class="t p" style="top:710px;font-size:13px;left:925.70px;transform-origin:100% 50%;transform:translateX(-100%) scaleX(0.8220);color:#000;">-     €</span>
<span class="t p" style="top:710px;font-size:13px;left:1006.00px;transform-origin:100% 50%;transform:translateX(-100%) scaleX(0.8220);color:#000;">4,00</span>
<span class="t p" style="top:710px;font-size:13px;left:1079.70px;transform-origin:100% 50%;transform:translateX(-100%) scaleX(0.8220);color:#000;">-     €</span>
<span class="t p" style="top:710px;font-size:13px;left:1165.70px;transform-origin:100% 50%;transform:translateX(-100%) scaleX(0.8220);color:#000;">-     €</span>
<span class="t p" style="top:710px;font-size:13px;left:1241.70px;transform-origin:100% 50%;transform:translateX(-100%) scaleX(0.8220);color:#000;">23,00 €</span>
<span class="t p" style="top:710px;font-size:13px;left:1322.00px;transform-origin:100% 50%;transform:translateX(-100%) scaleX(0.8220);color:#000;">5,00</span>
<span class="t p" style="top:710px;font-size:13px;left:1395.70px;transform-origin:100% 50%;transform:translateX(-100%) scaleX(0.8220);color:#000;">24,15 €</span>
<span class="t p" style="top:710px;font-size:13px;left:1481.70px;transform-origin:100% 50%;transform:translateX(-100%) scaleX(0.8220);color:#000;">10.867,50 €</span>
<span class="t p" style="top:710px;font-size:13px;left:1557.70px;transform-origin:100% 50%;transform:translateX(-100%) scaleX(0.8220);color:#000;">12,00 €</span>
<span class="t p" style="top:710px;font-size:13px;left:1638.00px;transform-origin:100% 50%;transform:translateX(-100%) scaleX(0.8220);color:#000;">2,00</span>
<span class="t p" style="top:710px;font-size:13px;left:1711.70px;transform-origin:100% 50%;transform:translateX(-100%) scaleX(0.8220);color:#000;">12,24 €</span>
<span class="t p" style="top:710px;font-size:13px;left:1797.70px;transform-origin:100% 50%;transform:translateX(-100%) scaleX(0.8220);color:#000;">5.508,00 €</span>
<span class="t p" style="top:710px;font-size:13px;left:1873.70px;transform-origin:100% 50%;transform:translateX(-100%) scaleX(0.8220);color:#000;">5,00 €</span>
<span class="t p" style="top:710px;font-size:13px;left:1954.00px;transform-origin:100% 50%;transform:translateX(-100%) scaleX(0.8220);color:#000;">2,00</span>
<span class="t p" style="top:710px;font-size:13px;left:2027.70px;transform-origin:100% 50%;transform:translateX(-100%) scaleX(0.8220);color:#000;">5,10 €</span>
<span class="t p" style="top:710px;font-size:13px;left:2113.70px;transform-origin:100% 50%;transform:translateX(-100%) scaleX(0.8220);color:#000;">2.295,00 €</span>
<span class="t p" style="top:710px;font-size:13px;left:2211.70px;transform-origin:100% 50%;transform:translateX(-100%) scaleX(0.8220);color:#000;">57,16 €</span>
<span class="t p" style="top:710px;font-size:13px;left:2331.70px;transform-origin:100% 50%;transform:translateX(-100%) scaleX(0.8220);color:#000;">25.720,20 €</span>
<span class="t" style="top:739px;font-size:13px;left:43.60px;transform-origin:0 50%;transform:scaleX(0.8220);color:#000;word-spacing:3.8px;">1. 2. 20</span>
<div class="r" style="left:124px;top:731px;width:87px;height:28px;overflow:hidden"><span class="t" style="left:2px;top:8px;font-size:13px;color:#000;transform-origin:0 50%;transform:scaleX(0.9)">NORMAL</span></div>
<div class="r" style="left:212px;top:731px;width:150px;height:28px;overflow:hidden"><span class="t" style="left:2px;top:8px;font-size:13px;color:#000;transform-origin:0 50%;transform:scaleX(0.836)">Boden Graben Kanal Tiefe bis 1,75 m</span></div>
<span class="t p" style="top:739px;font-size:13px;left:452.00px;transform-origin:100% 50%;transform:translateX(-100%) scaleX(0.8220);color:#000;">7.200,000</span>
<span class="t" style="top:739px;font-size:13px;left:487.50px;transform:translateX(-50%) scaleX(0.8500);color:#000;">m3</span>
<span class="t p" style="top:739px;font-size:13px;left:604.00px;transform-origin:100% 50%;transform:translateX(-100%) scaleX(0.8220);color:#000;">0,90</span>
<span class="t p" style="top:739px;font-size:13px;left:690.00px;transform-origin:100% 50%;transform:translateX(-100%) scaleX(0.8220);color:#000;">6480,00</span>
<span class="t p" style="top:739px;font-size:13px;left:763.70px;transform-origin:100% 50%;transform:translateX(-100%) scaleX(0.8220);color:#000;">20,14 €</span>
<span class="t p" style="top:739px;font-size:13px;left:849.70px;transform-origin:100% 50%;transform:translateX(-100%) scaleX(0.8220);color:#000;">145.022,40 €</span>
<span class="t p" style="top:739px;font-size:13px;left:925.70px;transform-origin:100% 50%;transform:translateX(-100%) scaleX(0.8220);color:#000;">-     €</span>
<span class="t p" style="top:739px;font-size:13px;left:1006.00px;transform-origin:100% 50%;transform:translateX(-100%) scaleX(0.8220);color:#000;">0,00</span>
<span class="t p" style="top:739px;font-size:13px;left:1079.70px;transform-origin:100% 50%;transform:translateX(-100%) scaleX(0.8220);color:#000;">-     €</span>
<span class="t p" style="top:739px;font-size:13px;left:1165.70px;transform-origin:100% 50%;transform:translateX(-100%) scaleX(0.8220);color:#000;">-     €</span>
<span class="t p" style="top:739px;font-size:13px;left:1241.70px;transform-origin:100% 50%;transform:translateX(-100%) scaleX(0.8220);color:#000;">23,00 €</span>
<span class="t p" style="top:739px;font-size:13px;left:1322.00px;transform-origin:100% 50%;transform:translateX(-100%) scaleX(0.8220);color:#000;">4,00</span>
<span class="t p" style="top:739px;font-size:13px;left:1395.70px;transform-origin:100% 50%;transform:translateX(-100%) scaleX(0.8220);color:#000;">23,92 €</span>
<span class="t p" style="top:739px;font-size:13px;left:1481.70px;transform-origin:100% 50%;transform:translateX(-100%) scaleX(0.8220);color:#000;">172.224,00 €</span>
<span class="t p" style="top:739px;font-size:13px;left:1557.70px;transform-origin:100% 50%;transform:translateX(-100%) scaleX(0.8220);color:#000;">13,00 €</span>
<span class="t p" style="top:739px;font-size:13px;left:1638.00px;transform-origin:100% 50%;transform:translateX(-100%) scaleX(0.8220);color:#000;">2,00</span>
<span class="t p" style="top:739px;font-size:13px;left:1711.70px;transform-origin:100% 50%;transform:translateX(-100%) scaleX(0.8220);color:#000;">13,26 €</span>
<span class="t p" style="top:739px;font-size:13px;left:1797.70px;transform-origin:100% 50%;transform:translateX(-100%) scaleX(0.8220);color:#000;">95.472,00 €</span>
<span class="t p" style="top:739px;font-size:13px;left:1873.70px;transform-origin:100% 50%;transform:translateX(-100%) scaleX(0.8220);color:#000;">34,00 €</span>
<span class="t p" style="top:739px;font-size:13px;left:1954.00px;transform-origin:100% 50%;transform:translateX(-100%) scaleX(0.8220);color:#000;">4,00</span>
<span class="t p" style="top:739px;font-size:13px;left:2027.70px;transform-origin:100% 50%;transform:translateX(-100%) scaleX(0.8220);color:#000;">35,36 €</span>
<span class="t p" style="top:739px;font-size:13px;left:2113.70px;transform-origin:100% 50%;transform:translateX(-100%) scaleX(0.8220);color:#000;">254.592,00 €</span>
<span class="t p" style="top:739px;font-size:13px;left:2211.70px;transform-origin:100% 50%;transform:translateX(-100%) scaleX(0.8220);color:#000;">92,68 €</span>
<span class="t p" style="top:739px;font-size:13px;left:2331.70px;transform-origin:100% 50%;transform:translateX(-100%) scaleX(0.8220);color:#000;">667.310,40 €</span>
<span class="t" style="top:768px;font-size:13px;left:43.60px;transform-origin:0 50%;transform:scaleX(0.8220);color:#000;word-spacing:3.8px;">1. 2. 30</span>
<div class="r" style="left:124px;top:760px;width:87px;height:28px;overflow:hidden"><span class="t" style="left:2px;top:8px;font-size:13px;color:#000;transform-origin:0 50%;transform:scaleX(0.9)">NORMAL</span></div>
<div class="r" style="left:212px;top:760px;width:150px;height:28px;overflow:hidden"><span class="t" style="left:2px;top:8px;font-size:13px;color:#000;transform-origin:0 50%;transform:scaleX(0.814)">Oberboden abtragen, lagern d=30 cm</span></div>
<span class="t p" style="top:768px;font-size:13px;left:452.00px;transform-origin:100% 50%;transform:translateX(-100%) scaleX(0.8220);color:#000;">12.345.678,012</span>
<span class="t" style="top:768px;font-size:13px;left:487.50px;transform:translateX(-50%) scaleX(0.8500);color:#000;">m2</span>
<span class="t p" style="top:768px;font-size:13px;left:604.00px;transform-origin:100% 50%;transform:translateX(-100%) scaleX(0.8220);color:#000;">0,00</span>
<span class="t p" style="top:768px;font-size:13px;left:690.00px;transform-origin:100% 50%;transform:translateX(-100%) scaleX(0.8220);color:#000;">0,00</span>
<span class="t p" style="top:768px;font-size:13px;left:763.70px;transform-origin:100% 50%;transform:translateX(-100%) scaleX(0.8220);color:#000;">-     €</span>
<span class="t p" style="top:768px;font-size:13px;left:849.70px;transform-origin:100% 50%;transform:translateX(-100%) scaleX(0.8220);color:#000;">-     €</span>
<span class="t p" style="top:768px;font-size:13px;left:925.70px;transform-origin:100% 50%;transform:translateX(-100%) scaleX(0.8220);color:#000;">-     €</span>
<span class="t p" style="top:768px;font-size:13px;left:1006.00px;transform-origin:100% 50%;transform:translateX(-100%) scaleX(0.8220);color:#000;">0,00</span>
<span class="t p" style="top:768px;font-size:13px;left:1079.70px;transform-origin:100% 50%;transform:translateX(-100%) scaleX(0.8220);color:#000;">-     €</span>
<span class="t p" style="top:768px;font-size:13px;left:1165.70px;transform-origin:100% 50%;transform:translateX(-100%) scaleX(0.8220);color:#000;">-     €</span>
<span class="t p" style="top:768px;font-size:13px;left:1241.70px;transform-origin:100% 50%;transform:translateX(-100%) scaleX(0.8220);color:#000;">-     €</span>
<span class="t p" style="top:768px;font-size:13px;left:1322.00px;transform-origin:100% 50%;transform:translateX(-100%) scaleX(0.8220);color:#000;">0,00</span>
<span class="t p" style="top:768px;font-size:13px;left:1395.70px;transform-origin:100% 50%;transform:translateX(-100%) scaleX(0.8220);color:#000;">-     €</span>
<span class="t p" style="top:768px;font-size:13px;left:1481.70px;transform-origin:100% 50%;transform:translateX(-100%) scaleX(0.8220);color:#000;">-     €</span>
<span class="t p" style="top:768px;font-size:13px;left:1557.70px;transform-origin:100% 50%;transform:translateX(-100%) scaleX(0.8220);color:#000;">-     €</span>
<span class="t p" style="top:768px;font-size:13px;left:1638.00px;transform-origin:100% 50%;transform:translateX(-100%) scaleX(0.8220);color:#000;">0,00</span>
<span class="t p" style="top:768px;font-size:13px;left:1711.70px;transform-origin:100% 50%;transform:translateX(-100%) scaleX(0.8220);color:#000;">-     €</span>
<span class="t p" style="top:768px;font-size:13px;left:1797.70px;transform-origin:100% 50%;transform:translateX(-100%) scaleX(0.8220);color:#000;">-     €</span>
<span class="t p" style="top:768px;font-size:13px;left:1873.70px;transform-origin:100% 50%;transform:translateX(-100%) scaleX(0.8220);color:#000;">-     €</span>
<span class="t p" style="top:768px;font-size:13px;left:1954.00px;transform-origin:100% 50%;transform:translateX(-100%) scaleX(0.8220);color:#000;">0,00</span>
<span class="t p" style="top:768px;font-size:13px;left:2027.70px;transform-origin:100% 50%;transform:translateX(-100%) scaleX(0.8220);color:#000;">-     €</span>
<span class="t p" style="top:768px;font-size:13px;left:2113.70px;transform-origin:100% 50%;transform:translateX(-100%) scaleX(0.8220);color:#000;">-     €</span>
<span class="t p" style="top:768px;font-size:13px;left:2211.70px;transform-origin:100% 50%;transform:translateX(-100%) scaleX(0.8220);color:#000;">-     €</span>
<span class="t p" style="top:768px;font-size:13px;left:2331.70px;transform-origin:100% 50%;transform:translateX(-100%) scaleX(0.8220);color:#000;">-     €</span>
<span class="t" style="top:797px;font-size:13px;left:43.60px;transform-origin:0 50%;transform:scaleX(0.8220);color:#000;word-spacing:3.8px;">1. 2. 40</span>
<div class="r" style="left:124px;top:789px;width:87px;height:28px;overflow:hidden"><span class="t" style="left:2px;top:8px;font-size:13px;color:#000;transform-origin:0 50%;transform:scaleX(0.868)">GRUNDPOS(1.0</span></div>
<div class="r" style="left:212px;top:789px;width:150px;height:28px;overflow:hidden"><span class="t" style="left:2px;top:8px;font-size:13px;color:#000;transform-origin:0 50%;transform:scaleX(0.831)">Betonpflaster L/B 100/100 mm</span></div>
<span class="t p" style="top:797px;font-size:13px;left:452.00px;transform-origin:100% 50%;transform:translateX(-100%) scaleX(0.8220);color:#000;">1.245,000</span>
<span class="t" style="top:797px;font-size:13px;left:487.50px;transform:translateX(-50%) scaleX(0.8500);color:#000;">m2</span>
<span class="t p" style="top:797px;font-size:13px;left:604.00px;transform-origin:100% 50%;transform:translateX(-100%) scaleX(0.8220);color:#000;">0,00</span>
<span class="t p" style="top:797px;font-size:13px;left:690.00px;transform-origin:100% 50%;transform:translateX(-100%) scaleX(0.8220);color:#000;">0,00</span>
<span class="t p" style="top:797px;font-size:13px;left:763.70px;transform-origin:100% 50%;transform:translateX(-100%) scaleX(0.8220);color:#000;">-     €</span>
<span class="t p" style="top:797px;font-size:13px;left:849.70px;transform-origin:100% 50%;transform:translateX(-100%) scaleX(0.8220);color:#000;">-     €</span>
<span class="t p" style="top:797px;font-size:13px;left:925.70px;transform-origin:100% 50%;transform:translateX(-100%) scaleX(0.8220);color:#000;">-     €</span>
<span class="t p" style="top:797px;font-size:13px;left:1006.00px;transform-origin:100% 50%;transform:translateX(-100%) scaleX(0.8220);color:#000;">0,00</span>
<span class="t p" style="top:797px;font-size:13px;left:1079.70px;transform-origin:100% 50%;transform:translateX(-100%) scaleX(0.8220);color:#000;">-     €</span>
<span class="t p" style="top:797px;font-size:13px;left:1165.70px;transform-origin:100% 50%;transform:translateX(-100%) scaleX(0.8220);color:#000;">-     €</span>
<span class="t p" style="top:797px;font-size:13px;left:1241.70px;transform-origin:100% 50%;transform:translateX(-100%) scaleX(0.8220);color:#000;">-     €</span>
<span class="t p" style="top:797px;font-size:13px;left:1322.00px;transform-origin:100% 50%;transform:translateX(-100%) scaleX(0.8220);color:#000;">0,00</span>
<span class="t p" style="top:797px;font-size:13px;left:1395.70px;transform-origin:100% 50%;transform:translateX(-100%) scaleX(0.8220);color:#000;">-     €</span>
<span class="t p" style="top:797px;font-size:13px;left:1481.70px;transform-origin:100% 50%;transform:translateX(-100%) scaleX(0.8220);color:#000;">-     €</span>
<span class="t p" style="top:797px;font-size:13px;left:1557.70px;transform-origin:100% 50%;transform:translateX(-100%) scaleX(0.8220);color:#000;">-     €</span>
<span class="t p" style="top:797px;font-size:13px;left:1638.00px;transform-origin:100% 50%;transform:translateX(-100%) scaleX(0.8220);color:#000;">0,00</span>
<span class="t p" style="top:797px;font-size:13px;left:1711.70px;transform-origin:100% 50%;transform:translateX(-100%) scaleX(0.8220);color:#000;">-     €</span>
<span class="t p" style="top:797px;font-size:13px;left:1797.70px;transform-origin:100% 50%;transform:translateX(-100%) scaleX(0.8220);color:#000;">-     €</span>
<span class="t p" style="top:797px;font-size:13px;left:1873.70px;transform-origin:100% 50%;transform:translateX(-100%) scaleX(0.8220);color:#000;">-     €</span>
<span class="t p" style="top:797px;font-size:13px;left:1954.00px;transform-origin:100% 50%;transform:translateX(-100%) scaleX(0.8220);color:#000;">0,00</span>
<span class="t p" style="top:797px;font-size:13px;left:2027.70px;transform-origin:100% 50%;transform:translateX(-100%) scaleX(0.8220);color:#000;">-     €</span>
<span class="t p" style="top:797px;font-size:13px;left:2113.70px;transform-origin:100% 50%;transform:translateX(-100%) scaleX(0.8220);color:#000;">-     €</span>
<span class="t p" style="top:797px;font-size:13px;left:2211.70px;transform-origin:100% 50%;transform:translateX(-100%) scaleX(0.8220);color:#000;">-     €</span>
<span class="t p" style="top:797px;font-size:13px;left:2331.70px;transform-origin:100% 50%;transform:translateX(-100%) scaleX(0.8220);color:#000;">-     €</span>
<span class="t" style="top:826px;font-size:13px;left:43.60px;transform-origin:0 50%;transform:scaleX(0.8220);color:#000;word-spacing:3.8px;">1. 3. 10</span>
<div class="r" style="left:124px;top:818px;width:87px;height:28px;overflow:hidden"><span class="t" style="left:2px;top:8px;font-size:13px;color:#000;transform-origin:0 50%;transform:scaleX(0.9)">NORMAL</span></div>
<div class="r" style="left:212px;top:818px;width:150px;height:28px;overflow:hidden"><span class="t" style="left:2px;top:8px;font-size:13px;color:#000;transform-origin:0 50%;transform:scaleX(0.844)">Kalksandstein-Innenwand KS-</span></div>
<span class="t p" style="top:826px;font-size:13px;left:452.00px;transform-origin:100% 50%;transform:translateX(-100%) scaleX(0.8220);color:#000;">440,000</span>
<span class="t" style="top:826px;font-size:13px;left:487.50px;transform:translateX(-50%) scaleX(0.8500);color:#000;">m2</span>
<span class="t p" style="top:826px;font-size:13px;left:604.00px;transform-origin:100% 50%;transform:translateX(-100%) scaleX(0.8220);color:#000;">0,00</span>
<span class="t p" style="top:826px;font-size:13px;left:690.00px;transform-origin:100% 50%;transform:translateX(-100%) scaleX(0.8220);color:#000;">0,00</span>
<span class="t p" style="top:826px;font-size:13px;left:763.70px;transform-origin:100% 50%;transform:translateX(-100%) scaleX(0.8220);color:#000;">-     €</span>
<span class="t p" style="top:826px;font-size:13px;left:849.70px;transform-origin:100% 50%;transform:translateX(-100%) scaleX(0.8220);color:#000;">-     €</span>
<span class="t p" style="top:826px;font-size:13px;left:925.70px;transform-origin:100% 50%;transform:translateX(-100%) scaleX(0.8220);color:#000;">-     €</span>
<span class="t p" style="top:826px;font-size:13px;left:1006.00px;transform-origin:100% 50%;transform:translateX(-100%) scaleX(0.8220);color:#000;">0,00</span>
<span class="t p" style="top:826px;font-size:13px;left:1079.70px;transform-origin:100% 50%;transform:translateX(-100%) scaleX(0.8220);color:#000;">-     €</span>
<span class="t p" style="top:826px;font-size:13px;left:1165.70px;transform-origin:100% 50%;transform:translateX(-100%) scaleX(0.8220);color:#000;">-     €</span>
<span class="t p" style="top:826px;font-size:13px;left:1241.70px;transform-origin:100% 50%;transform:translateX(-100%) scaleX(0.8220);color:#000;">-     €</span>
<span class="t p" style="top:826px;font-size:13px;left:1322.00px;transform-origin:100% 50%;transform:translateX(-100%) scaleX(0.8220);color:#000;">0,00</span>
<span class="t p" style="top:826px;font-size:13px;left:1395.70px;transform-origin:100% 50%;transform:translateX(-100%) scaleX(0.8220);color:#000;">-     €</span>
<span class="t p" style="top:826px;font-size:13px;left:1481.70px;transform-origin:100% 50%;transform:translateX(-100%) scaleX(0.8220);color:#000;">-     €</span>
<span class="t p" style="top:826px;font-size:13px;left:1557.70px;transform-origin:100% 50%;transform:translateX(-100%) scaleX(0.8220);color:#000;">-     €</span>
<span class="t p" style="top:826px;font-size:13px;left:1638.00px;transform-origin:100% 50%;transform:translateX(-100%) scaleX(0.8220);color:#000;">0,00</span>
<span class="t p" style="top:826px;font-size:13px;left:1711.70px;transform-origin:100% 50%;transform:translateX(-100%) scaleX(0.8220);color:#000;">-     €</span>
<span class="t p" style="top:826px;font-size:13px;left:1797.70px;transform-origin:100% 50%;transform:translateX(-100%) scaleX(0.8220);color:#000;">-     €</span>
<span class="t p" style="top:826px;font-size:13px;left:1873.70px;transform-origin:100% 50%;transform:translateX(-100%) scaleX(0.8220);color:#000;">-     €</span>
<span class="t p" style="top:826px;font-size:13px;left:1954.00px;transform-origin:100% 50%;transform:translateX(-100%) scaleX(0.8220);color:#000;">0,00</span>
<span class="t p" style="top:826px;font-size:13px;left:2027.70px;transform-origin:100% 50%;transform:translateX(-100%) scaleX(0.8220);color:#000;">-     €</span>
<span class="t p" style="top:826px;font-size:13px;left:2113.70px;transform-origin:100% 50%;transform:translateX(-100%) scaleX(0.8220);color:#000;">-     €</span>
<span class="t p" style="top:826px;font-size:13px;left:2211.70px;transform-origin:100% 50%;transform:translateX(-100%) scaleX(0.8220);color:#000;">-     €</span>
<span class="t p" style="top:826px;font-size:13px;left:2331.70px;transform-origin:100% 50%;transform:translateX(-100%) scaleX(0.8220);color:#000;">-     €</span>
<span class="t" style="top:855px;font-size:13px;left:43.60px;transform-origin:0 50%;transform:scaleX(0.8220);color:#000;word-spacing:3.8px;">1. 3. 20</span>
<div class="r" style="left:124px;top:847px;width:87px;height:28px;overflow:hidden"><span class="t" style="left:2px;top:8px;font-size:13px;color:#000;transform-origin:0 50%;transform:scaleX(0.9)">NORMAL</span></div>
<div class="r" style="left:212px;top:847px;width:150px;height:28px;overflow:hidden"><span class="t" style="left:2px;top:8px;font-size:13px;color:#000;transform-origin:0 50%;transform:scaleX(0.844)">Kalksandstein-Innenwand KS-</span></div>
<span class="t p" style="top:855px;font-size:13px;left:452.00px;transform-origin:100% 50%;transform:translateX(-100%) scaleX(0.8220);color:#000;">350,000</span>
<span class="t" style="top:855px;font-size:13px;left:487.50px;transform:translateX(-50%) scaleX(0.8500);color:#000;">m2</span>
<span class="t p" style="top:855px;font-size:13px;left:604.00px;transform-origin:100% 50%;transform:translateX(-100%) scaleX(0.8220);color:#000;">0,00</span>
<span class="t p" style="top:855px;font-size:13px;left:690.00px;transform-origin:100% 50%;transform:translateX(-100%) scaleX(0.8220);color:#000;">0,00</span>
<span class="t p" style="top:855px;font-size:13px;left:763.70px;transform-origin:100% 50%;transform:translateX(-100%) scaleX(0.8220);color:#000;">-     €</span>
<span class="t p" style="top:855px;font-size:13px;left:849.70px;transform-origin:100% 50%;transform:translateX(-100%) scaleX(0.8220);color:#000;">-     €</span>
<span class="t p" style="top:855px;font-size:13px;left:925.70px;transform-origin:100% 50%;transform:translateX(-100%) scaleX(0.8220);color:#000;">-     €</span>
<span class="t p" style="top:855px;font-size:13px;left:1006.00px;transform-origin:100% 50%;transform:translateX(-100%) scaleX(0.8220);color:#000;">0,00</span>
<span class="t p" style="top:855px;font-size:13px;left:1079.70px;transform-origin:100% 50%;transform:translateX(-100%) scaleX(0.8220);color:#000;">-     €</span>
<span class="t p" style="top:855px;font-size:13px;left:1165.70px;transform-origin:100% 50%;transform:translateX(-100%) scaleX(0.8220);color:#000;">-     €</span>
<span class="t p" style="top:855px;font-size:13px;left:1241.70px;transform-origin:100% 50%;transform:translateX(-100%) scaleX(0.8220);color:#000;">-     €</span>
<span class="t p" style="top:855px;font-size:13px;left:1322.00px;transform-origin:100% 50%;transform:translateX(-100%) scaleX(0.8220);color:#000;">0,00</span>
<span class="t p" style="top:855px;font-size:13px;left:1395.70px;transform-origin:100% 50%;transform:translateX(-100%) scaleX(0.8220);color:#000;">-     €</span>
<span class="t p" style="top:855px;font-size:13px;left:1481.70px;transform-origin:100% 50%;transform:translateX(-100%) scaleX(0.8220);color:#000;">-     €</span>
<span class="t p" style="top:855px;font-size:13px;left:1557.70px;transform-origin:100% 50%;transform:translateX(-100%) scaleX(0.8220);color:#000;">-     €</span>
<span class="t p" style="top:855px;font-size:13px;left:1638.00px;transform-origin:100% 50%;transform:translateX(-100%) scaleX(0.8220);color:#000;">0,00</span>
<span class="t p" style="top:855px;font-size:13px;left:1711.70px;transform-origin:100% 50%;transform:translateX(-100%) scaleX(0.8220);color:#000;">-     €</span>
<span class="t p" style="top:855px;font-size:13px;left:1797.70px;transform-origin:100% 50%;transform:translateX(-100%) scaleX(0.8220);color:#000;">-     €</span>
<span class="t p" style="top:855px;font-size:13px;left:1873.70px;transform-origin:100% 50%;transform:translateX(-100%) scaleX(0.8220);color:#000;">-     €</span>
<span class="t p" style="top:855px;font-size:13px;left:1954.00px;transform-origin:100% 50%;transform:translateX(-100%) scaleX(0.8220);color:#000;">0,00</span>
<span class="t p" style="top:855px;font-size:13px;left:2027.70px;transform-origin:100% 50%;transform:translateX(-100%) scaleX(0.8220);color:#000;">-     €</span>
<span class="t p" style="top:855px;font-size:13px;left:2113.70px;transform-origin:100% 50%;transform:translateX(-100%) scaleX(0.8220);color:#000;">-     €</span>
<span class="t p" style="top:855px;font-size:13px;left:2211.70px;transform-origin:100% 50%;transform:translateX(-100%) scaleX(0.8220);color:#000;">-     €</span>
<span class="t p" style="top:855px;font-size:13px;left:2331.70px;transform-origin:100% 50%;transform:translateX(-100%) scaleX(0.8220);color:#000;">-     €</span>
<span class="t" style="top:884px;font-size:13px;left:43.60px;transform-origin:0 50%;transform:scaleX(0.8220);color:#000;word-spacing:3.8px;">1. 3. 30</span>
<div class="r" style="left:124px;top:876px;width:87px;height:28px;overflow:hidden"><span class="t" style="left:2px;top:8px;font-size:13px;color:#000;transform-origin:0 50%;transform:scaleX(0.9)">NORMAL</span></div>
<div class="r" style="left:212px;top:876px;width:150px;height:28px;overflow:hidden"><span class="t" style="left:2px;top:8px;font-size:13px;color:#000;transform-origin:0 50%;transform:scaleX(0.827)">Außenwand Porenbeton-Planelemente</span></div>
<span class="t p" style="top:884px;font-size:13px;left:452.00px;transform-origin:100% 50%;transform:translateX(-100%) scaleX(0.8220);color:#000;">750,000</span>
<span class="t" style="top:884px;font-size:13px;left:487.50px;transform:translateX(-50%) scaleX(0.8500);color:#000;">m3</span>
<span class="t p" style="top:884px;font-size:13px;left:604.00px;transform-origin:100% 50%;transform:translateX(-100%) scaleX(0.8220);color:#000;">0,00</span>
<span class="t p" style="top:884px;font-size:13px;left:690.00px;transform-origin:100% 50%;transform:translateX(-100%) scaleX(0.8220);color:#000;">0,00</span>
<span class="t p" style="top:884px;font-size:13px;left:763.70px;transform-origin:100% 50%;transform:translateX(-100%) scaleX(0.8220);color:#000;">-     €</span>
<span class="t p" style="top:884px;font-size:13px;left:849.70px;transform-origin:100% 50%;transform:translateX(-100%) scaleX(0.8220);color:#000;">-     €</span>
<span class="t p" style="top:884px;font-size:13px;left:925.70px;transform-origin:100% 50%;transform:translateX(-100%) scaleX(0.8220);color:#000;">-     €</span>
<span class="t p" style="top:884px;font-size:13px;left:1006.00px;transform-origin:100% 50%;transform:translateX(-100%) scaleX(0.8220);color:#000;">0,00</span>
<span class="t p" style="top:884px;font-size:13px;left:1079.70px;transform-origin:100% 50%;transform:translateX(-100%) scaleX(0.8220);color:#000;">-     €</span>
<span class="t p" style="top:884px;font-size:13px;left:1165.70px;transform-origin:100% 50%;transform:translateX(-100%) scaleX(0.8220);color:#000;">-     €</span>
<span class="t p" style="top:884px;font-size:13px;left:1241.70px;transform-origin:100% 50%;transform:translateX(-100%) scaleX(0.8220);color:#000;">-     €</span>
<span class="t p" style="top:884px;font-size:13px;left:1322.00px;transform-origin:100% 50%;transform:translateX(-100%) scaleX(0.8220);color:#000;">0,00</span>
<span class="t p" style="top:884px;font-size:13px;left:1395.70px;transform-origin:100% 50%;transform:translateX(-100%) scaleX(0.8220);color:#000;">-     €</span>
<span class="t p" style="top:884px;font-size:13px;left:1481.70px;transform-origin:100% 50%;transform:translateX(-100%) scaleX(0.8220);color:#000;">-     €</span>
<span class="t p" style="top:884px;font-size:13px;left:1557.70px;transform-origin:100% 50%;transform:translateX(-100%) scaleX(0.8220);color:#000;">-     €</span>
<span class="t p" style="top:884px;font-size:13px;left:1638.00px;transform-origin:100% 50%;transform:translateX(-100%) scaleX(0.8220);color:#000;">0,00</span>
<span class="t p" style="top:884px;font-size:13px;left:1711.70px;transform-origin:100% 50%;transform:translateX(-100%) scaleX(0.8220);color:#000;">-     €</span>
<span class="t p" style="top:884px;font-size:13px;left:1797.70px;transform-origin:100% 50%;transform:translateX(-100%) scaleX(0.8220);color:#000;">-     €</span>
<span class="t p" style="top:884px;font-size:13px;left:1873.70px;transform-origin:100% 50%;transform:translateX(-100%) scaleX(0.8220);color:#000;">-     €</span>
<span class="t p" style="top:884px;font-size:13px;left:1954.00px;transform-origin:100% 50%;transform:translateX(-100%) scaleX(0.8220);color:#000;">0,00</span>
<span class="t p" style="top:884px;font-size:13px;left:2027.70px;transform-origin:100% 50%;transform:translateX(-100%) scaleX(0.8220);color:#000;">-     €</span>
<span class="t p" style="top:884px;font-size:13px;left:2113.70px;transform-origin:100% 50%;transform:translateX(-100%) scaleX(0.8220);color:#000;">-     €</span>
<span class="t p" style="top:884px;font-size:13px;left:2211.70px;transform-origin:100% 50%;transform:translateX(-100%) scaleX(0.8220);color:#000;">-     €</span>
<span class="t p" style="top:884px;font-size:13px;left:2331.70px;transform-origin:100% 50%;transform:translateX(-100%) scaleX(0.8220);color:#000;">-     €</span>
<span class="t" style="top:913px;font-size:13px;left:43.60px;transform-origin:0 50%;transform:scaleX(0.8220);color:#000;word-spacing:3.8px;">1. 3. 40</span>
<div class="r" style="left:124px;top:905px;width:87px;height:28px;overflow:hidden"><span class="t" style="left:2px;top:8px;font-size:13px;color:#000;transform-origin:0 50%;transform:scaleX(0.9)">NORMAL</span></div>
<div class="r" style="left:212px;top:905px;width:150px;height:28px;overflow:hidden"><span class="t" style="left:2px;top:8px;font-size:13px;color:#000;transform-origin:0 50%;transform:scaleX(0.844)">Außenwand VHLz SFK 28 RD</span></div>
<span class="t p" style="top:913px;font-size:13px;left:452.00px;transform-origin:100% 50%;transform:translateX(-100%) scaleX(0.8220);color:#000;">783,030</span>
<span class="t" style="top:913px;font-size:13px;left:487.50px;transform:translateX(-50%) scaleX(0.8500);color:#000;">m3</span>
<span class="t p" style="top:913px;font-size:13px;left:604.00px;transform-origin:100% 50%;transform:translateX(-100%) scaleX(0.8220);color:#000;">0,00</span>
<span class="t p" style="top:913px;font-size:13px;left:690.00px;transform-origin:100% 50%;transform:translateX(-100%) scaleX(0.8220);color:#000;">0,00</span>
<span class="t p" style="top:913px;font-size:13px;left:763.70px;transform-origin:100% 50%;transform:translateX(-100%) scaleX(0.8220);color:#000;">-     €</span>
<span class="t p" style="top:913px;font-size:13px;left:849.70px;transform-origin:100% 50%;transform:translateX(-100%) scaleX(0.8220);color:#000;">-     €</span>
<span class="t p" style="top:913px;font-size:13px;left:925.70px;transform-origin:100% 50%;transform:translateX(-100%) scaleX(0.8220);color:#000;">-     €</span>
<span class="t p" style="top:913px;font-size:13px;left:1006.00px;transform-origin:100% 50%;transform:translateX(-100%) scaleX(0.8220);color:#000;">0,00</span>
<span class="t p" style="top:913px;font-size:13px;left:1079.70px;transform-origin:100% 50%;transform:translateX(-100%) scaleX(0.8220);color:#000;">-     €</span>
<span class="t p" style="top:913px;font-size:13px;left:1165.70px;transform-origin:100% 50%;transform:translateX(-100%) scaleX(0.8220);color:#000;">-     €</span>
<span class="t p" style="top:913px;font-size:13px;left:1241.70px;transform-origin:100% 50%;transform:translateX(-100%) scaleX(0.8220);color:#000;">-     €</span>
<span class="t p" style="top:913px;font-size:13px;left:1322.00px;transform-origin:100% 50%;transform:translateX(-100%) scaleX(0.8220);color:#000;">0,00</span>
<span class="t p" style="top:913px;font-size:13px;left:1395.70px;transform-origin:100% 50%;transform:translateX(-100%) scaleX(0.8220);color:#000;">-     €</span>
<span class="t p" style="top:913px;font-size:13px;left:1481.70px;transform-origin:100% 50%;transform:translateX(-100%) scaleX(0.8220);color:#000;">-     €</span>
<span class="t p" style="top:913px;font-size:13px;left:1557.70px;transform-origin:100% 50%;transform:translateX(-100%) scaleX(0.8220);color:#000;">-     €</span>
<span class="t p" style="top:913px;font-size:13px;left:1638.00px;transform-origin:100% 50%;transform:translateX(-100%) scaleX(0.8220);color:#000;">0,00</span>
<span class="t p" style="top:913px;font-size:13px;left:1711.70px;transform-origin:100% 50%;transform:translateX(-100%) scaleX(0.8220);color:#000;">-     €</span>
<span class="t p" style="top:913px;font-size:13px;left:1797.70px;transform-origin:100% 50%;transform:translateX(-100%) scaleX(0.8220);color:#000;">-     €</span>
<span class="t p" style="top:913px;font-size:13px;left:1873.70px;transform-origin:100% 50%;transform:translateX(-100%) scaleX(0.8220);color:#000;">-     €</span>
<span class="t p" style="top:913px;font-size:13px;left:1954.00px;transform-origin:100% 50%;transform:translateX(-100%) scaleX(0.8220);color:#000;">0,00</span>
<span class="t p" style="top:913px;font-size:13px;left:2027.70px;transform-origin:100% 50%;transform:translateX(-100%) scaleX(0.8220);color:#000;">-     €</span>
<span class="t p" style="top:913px;font-size:13px;left:2113.70px;transform-origin:100% 50%;transform:translateX(-100%) scaleX(0.8220);color:#000;">-     €</span>
<span class="t p" style="top:913px;font-size:13px;left:2211.70px;transform-origin:100% 50%;transform:translateX(-100%) scaleX(0.8220);color:#000;">-     €</span>
<span class="t p" style="top:913px;font-size:13px;left:2331.70px;transform-origin:100% 50%;transform:translateX(-100%) scaleX(0.8220);color:#000;">-     €</span>
<span class="t" style="top:942px;font-size:13px;left:43.60px;transform-origin:0 50%;transform:scaleX(0.8220);color:#000;word-spacing:3.8px;">1. 4. 10</span>
<div class="r" style="left:124px;top:934px;width:87px;height:28px;overflow:hidden"><span class="t" style="left:2px;top:8px;font-size:13px;color:#000;transform-origin:0 50%;transform:scaleX(0.9)">NORMAL</span></div>
<div class="r" style="left:212px;top:934px;width:150px;height:28px;overflow:hidden"><span class="t" style="left:2px;top:8px;font-size:13px;color:#000;transform-origin:0 50%;transform:scaleX(0.841)">Schalung Deckenplatte GF-Sc</span></div>
<span class="t p" style="top:942px;font-size:13px;left:452.00px;transform-origin:100% 50%;transform:translateX(-100%) scaleX(0.8220);color:#000;">500,000</span>
<span class="t" style="top:942px;font-size:13px;left:487.50px;transform:translateX(-50%) scaleX(0.8500);color:#000;">m2</span>
<span class="t p" style="top:942px;font-size:13px;left:604.00px;transform-origin:100% 50%;transform:translateX(-100%) scaleX(0.8220);color:#000;">0,00</span>
<span class="t p" style="top:942px;font-size:13px;left:690.00px;transform-origin:100% 50%;transform:translateX(-100%) scaleX(0.8220);color:#000;">0,00</span>
<span class="t p" style="top:942px;font-size:13px;left:763.70px;transform-origin:100% 50%;transform:translateX(-100%) scaleX(0.8220);color:#000;">-     €</span>
<span class="t p" style="top:942px;font-size:13px;left:849.70px;transform-origin:100% 50%;transform:translateX(-100%) scaleX(0.8220);color:#000;">-     €</span>
<span class="t p" style="top:942px;font-size:13px;left:925.70px;transform-origin:100% 50%;transform:translateX(-100%) scaleX(0.8220);color:#000;">-     €</span>
<span class="t p" style="top:942px;font-size:13px;left:1006.00px;transform-origin:100% 50%;transform:translateX(-100%) scaleX(0.8220);color:#000;">0,00</span>
<span class="t p" style="top:942px;font-size:13px;left:1079.70px;transform-origin:100% 50%;transform:translateX(-100%) scaleX(0.8220);color:#000;">-     €</span>
<span class="t p" style="top:942px;font-size:13px;left:1165.70px;transform-origin:100% 50%;transform:translateX(-100%) scaleX(0.8220);color:#000;">-     €</span>
<span class="t p" style="top:942px;font-size:13px;left:1241.70px;transform-origin:100% 50%;transform:translateX(-100%) scaleX(0.8220);color:#000;">-     €</span>
<span class="t p" style="top:942px;font-size:13px;left:1322.00px;transform-origin:100% 50%;transform:translateX(-100%) scaleX(0.8220);color:#000;">0,00</span>
<span class="t p" style="top:942px;font-size:13px;left:1395.70px;transform-origin:100% 50%;transform:translateX(-100%) scaleX(0.8220);color:#000;">-     €</span>
<span class="t p" style="top:942px;font-size:13px;left:1481.70px;transform-origin:100% 50%;transform:translateX(-100%) scaleX(0.8220);color:#000;">-     €</span>
<span class="t p" style="top:942px;font-size:13px;left:1557.70px;transform-origin:100% 50%;transform:translateX(-100%) scaleX(0.8220);color:#000;">-     €</span>
<span class="t p" style="top:942px;font-size:13px;left:1638.00px;transform-origin:100% 50%;transform:translateX(-100%) scaleX(0.8220);color:#000;">0,00</span>
<span class="t p" style="top:942px;font-size:13px;left:1711.70px;transform-origin:100% 50%;transform:translateX(-100%) scaleX(0.8220);color:#000;">-     €</span>
<span class="t p" style="top:942px;font-size:13px;left:1797.70px;transform-origin:100% 50%;transform:translateX(-100%) scaleX(0.8220);color:#000;">-     €</span>
<span class="t p" style="top:942px;font-size:13px;left:1873.70px;transform-origin:100% 50%;transform:translateX(-100%) scaleX(0.8220);color:#000;">-     €</span>
<span class="t p" style="top:942px;font-size:13px;left:1954.00px;transform-origin:100% 50%;transform:translateX(-100%) scaleX(0.8220);color:#000;">0,00</span>
<span class="t p" style="top:942px;font-size:13px;left:2027.70px;transform-origin:100% 50%;transform:translateX(-100%) scaleX(0.8220);color:#000;">-     €</span>
<span class="t p" style="top:942px;font-size:13px;left:2113.70px;transform-origin:100% 50%;transform:translateX(-100%) scaleX(0.8220);color:#000;">-     €</span>
<span class="t p" style="top:942px;font-size:13px;left:2211.70px;transform-origin:100% 50%;transform:translateX(-100%) scaleX(0.8220);color:#000;">-     €</span>
<span class="t p" style="top:942px;font-size:13px;left:2331.70px;transform-origin:100% 50%;transform:translateX(-100%) scaleX(0.8220);color:#000;">-     €</span>
<span class="t" style="top:971px;font-size:13px;left:43.60px;transform-origin:0 50%;transform:scaleX(0.8220);color:#000;word-spacing:3.8px;">1. 4. 20</span>
<div class="r" style="left:124px;top:963px;width:87px;height:28px;overflow:hidden"><span class="t" style="left:2px;top:8px;font-size:13px;color:#000;transform-origin:0 50%;transform:scaleX(0.9)">NORMAL</span></div>
<div class="r" style="left:212px;top:963px;width:150px;height:28px;overflow:hidden"><span class="t" style="left:2px;top:8px;font-size:13px;color:#000;transform-origin:0 50%;transform:scaleX(0.816)">Ortbeton Deckenplatte Stahlbeton</span></div>
<span class="t p" style="top:971px;font-size:13px;left:452.00px;transform-origin:100% 50%;transform:translateX(-100%) scaleX(0.8220);color:#000;">500,000</span>
<span class="t" style="top:971px;font-size:13px;left:487.50px;transform:translateX(-50%) scaleX(0.8500);color:#000;">m2</span>
<span class="t p" style="top:971px;font-size:13px;left:604.00px;transform-origin:100% 50%;transform:translateX(-100%) scaleX(0.8220);color:#000;">0,00</span>
<span class="t p" style="top:971px;font-size:13px;left:690.00px;transform-origin:100% 50%;transform:translateX(-100%) scaleX(0.8220);color:#000;">0,00</span>
<span class="t p" style="top:971px;font-size:13px;left:763.70px;transform-origin:100% 50%;transform:translateX(-100%) scaleX(0.8220);color:#000;">-     €</span>
<span class="t p" style="top:971px;font-size:13px;left:849.70px;transform-origin:100% 50%;transform:translateX(-100%) scaleX(0.8220);color:#000;">-     €</span>
<span class="t p" style="top:971px;font-size:13px;left:925.70px;transform-origin:100% 50%;transform:translateX(-100%) scaleX(0.8220);color:#000;">-     €</span>
<span class="t p" style="top:971px;font-size:13px;left:1006.00px;transform-origin:100% 50%;transform:translateX(-100%) scaleX(0.8220);color:#000;">0,00</span>
<span class="t p" style="top:971px;font-size:13px;left:1079.70px;transform-origin:100% 50%;transform:translateX(-100%) scaleX(0.8220);color:#000;">-     €</span>
<span class="t p" style="top:971px;font-size:13px;left:1165.70px;transform-origin:100% 50%;transform:translateX(-100%) scaleX(0.8220);color:#000;">-     €</span>
<span class="t p" style="top:971px;font-size:13px;left:1241.70px;transform-origin:100% 50%;transform:translateX(-100%) scaleX(0.8220);color:#000;">-     €</span>
<span class="t p" style="top:971px;font-size:13px;left:1322.00px;transform-origin:100% 50%;transform:translateX(-100%) scaleX(0.8220);color:#000;">0,00</span>
<span class="t p" style="top:971px;font-size:13px;left:1395.70px;transform-origin:100% 50%;transform:translateX(-100%) scaleX(0.8220);color:#000;">-     €</span>
<span class="t p" style="top:971px;font-size:13px;left:1481.70px;transform-origin:100% 50%;transform:translateX(-100%) scaleX(0.8220);color:#000;">-     €</span>
<span class="t p" style="top:971px;font-size:13px;left:1557.70px;transform-origin:100% 50%;transform:translateX(-100%) scaleX(0.8220);color:#000;">-     €</span>
<span class="t p" style="top:971px;font-size:13px;left:1638.00px;transform-origin:100% 50%;transform:translateX(-100%) scaleX(0.8220);color:#000;">0,00</span>
<span class="t p" style="top:971px;font-size:13px;left:1711.70px;transform-origin:100% 50%;transform:translateX(-100%) scaleX(0.8220);color:#000;">-     €</span>
<span class="t p" style="top:971px;font-size:13px;left:1797.70px;transform-origin:100% 50%;transform:translateX(-100%) scaleX(0.8220);color:#000;">-     €</span>
<span class="t p" style="top:971px;font-size:13px;left:1873.70px;transform-origin:100% 50%;transform:translateX(-100%) scaleX(0.8220);color:#000;">-     €</span>
<span class="t p" style="top:971px;font-size:13px;left:1954.00px;transform-origin:100% 50%;transform:translateX(-100%) scaleX(0.8220);color:#000;">0,00</span>
<span class="t p" style="top:971px;font-size:13px;left:2027.70px;transform-origin:100% 50%;transform:translateX(-100%) scaleX(0.8220);color:#000;">-     €</span>
<span class="t p" style="top:971px;font-size:13px;left:2113.70px;transform-origin:100% 50%;transform:translateX(-100%) scaleX(0.8220);color:#000;">-     €</span>
<span class="t p" style="top:971px;font-size:13px;left:2211.70px;transform-origin:100% 50%;transform:translateX(-100%) scaleX(0.8220);color:#000;">-     €</span>
<span class="t p" style="top:971px;font-size:13px;left:2331.70px;transform-origin:100% 50%;transform:translateX(-100%) scaleX(0.8220);color:#000;">-     €</span>
<span class="t" style="top:1000px;font-size:13px;left:43.60px;transform-origin:0 50%;transform:scaleX(0.8220);color:#000;word-spacing:3.8px;">1. 4. 30</span>
<div class="r" style="left:124px;top:992px;width:87px;height:28px;overflow:hidden"><span class="t" style="left:2px;top:8px;font-size:13px;color:#000;transform-origin:0 50%;transform:scaleX(0.9)">NORMAL</span></div>
<div class="r" style="left:212px;top:992px;width:150px;height:28px;overflow:hidden"><span class="t" style="left:2px;top:8px;font-size:13px;color:#000;transform-origin:0 50%;transform:scaleX(0.841)">Ortbeton Außenwand D 24cm</span></div>
<span class="t p" style="top:1000px;font-size:13px;left:452.00px;transform-origin:100% 50%;transform:translateX(-100%) scaleX(0.8220);color:#000;">267,000</span>
<span class="t" style="top:1000px;font-size:13px;left:487.50px;transform:translateX(-50%) scaleX(0.8500);color:#000;">m3</span>
<span class="t p" style="top:1000px;font-size:13px;left:604.00px;transform-origin:100% 50%;transform:translateX(-100%) scaleX(0.8220);color:#000;">0,00</span>
<span class="t p" style="top:1000px;font-size:13px;left:690.00px;transform-origin:100% 50%;transform:translateX(-100%) scaleX(0.8220);color:#000;">0,00</span>
<span class="t p" style="top:1000px;font-size:13px;left:763.70px;transform-origin:100% 50%;transform:translateX(-100%) scaleX(0.8220);color:#000;">-     €</span>
<span class="t p" style="top:1000px;font-size:13px;left:849.70px;transform-origin:100% 50%;transform:translateX(-100%) scaleX(0.8220);color:#000;">-     €</span>
<span class="t p" style="top:1000px;font-size:13px;left:925.70px;transform-origin:100% 50%;transform:translateX(-100%) scaleX(0.8220);color:#000;">-     €</span>
<span class="t p" style="top:1000px;font-size:13px;left:1006.00px;transform-origin:100% 50%;transform:translateX(-100%) scaleX(0.8220);color:#000;">0,00</span>
<span class="t p" style="top:1000px;font-size:13px;left:1079.70px;transform-origin:100% 50%;transform:translateX(-100%) scaleX(0.8220);color:#000;">-     €</span>
<span class="t p" style="top:1000px;font-size:13px;left:1165.70px;transform-origin:100% 50%;transform:translateX(-100%) scaleX(0.8220);color:#000;">-     €</span>
<span class="t p" style="top:1000px;font-size:13px;left:1241.70px;transform-origin:100% 50%;transform:translateX(-100%) scaleX(0.8220);color:#000;">-     €</span>
<span class="t p" style="top:1000px;font-size:13px;left:1322.00px;transform-origin:100% 50%;transform:translateX(-100%) scaleX(0.8220);color:#000;">0,00</span>
<span class="t p" style="top:1000px;font-size:13px;left:1395.70px;transform-origin:100% 50%;transform:translateX(-100%) scaleX(0.8220);color:#000;">-     €</span>
<span class="t p" style="top:1000px;font-size:13px;left:1481.70px;transform-origin:100% 50%;transform:translateX(-100%) scaleX(0.8220);color:#000;">-     €</span>
<span class="t p" style="top:1000px;font-size:13px;left:1557.70px;transform-origin:100% 50%;transform:translateX(-100%) scaleX(0.8220);color:#000;">-     €</span>
<span class="t p" style="top:1000px;font-size:13px;left:1638.00px;transform-origin:100% 50%;transform:translateX(-100%) scaleX(0.8220);color:#000;">0,00</span>
<span class="t p" style="top:1000px;font-size:13px;left:1711.70px;transform-origin:100% 50%;transform:translateX(-100%) scaleX(0.8220);color:#000;">-     €</span>
<span class="t p" style="top:1000px;font-size:13px;left:1797.70px;transform-origin:100% 50%;transform:translateX(-100%) scaleX(0.8220);color:#000;">-     €</span>
<span class="t p" style="top:1000px;font-size:13px;left:1873.70px;transform-origin:100% 50%;transform:translateX(-100%) scaleX(0.8220);color:#000;">-     €</span>
<span class="t p" style="top:1000px;font-size:13px;left:1954.00px;transform-origin:100% 50%;transform:translateX(-100%) scaleX(0.8220);color:#000;">0,00</span>
<span class="t p" style="top:1000px;font-size:13px;left:2027.70px;transform-origin:100% 50%;transform:translateX(-100%) scaleX(0.8220);color:#000;">-     €</span>
<span class="t p" style="top:1000px;font-size:13px;left:2113.70px;transform-origin:100% 50%;transform:translateX(-100%) scaleX(0.8220);color:#000;">-     €</span>
<span class="t p" style="top:1000px;font-size:13px;left:2211.70px;transform-origin:100% 50%;transform:translateX(-100%) scaleX(0.8220);color:#000;">-     €</span>
<span class="t p" style="top:1000px;font-size:13px;left:2331.70px;transform-origin:100% 50%;transform:translateX(-100%) scaleX(0.8220);color:#000;">-     €</span>
<span class="t" style="top:1029px;font-size:13px;left:43.60px;transform-origin:0 50%;transform:scaleX(0.8220);color:#000;word-spacing:3.8px;">2. 0.</span>
<span class="t" style="top:1029px;font-size:13px;left:76.80px;transform-origin:0 50%;transform:scaleX(0.8220);color:#000;">0</span>
<div class="r" style="left:124px;top:1021px;width:87px;height:28px;overflow:hidden"><span class="t" style="left:2px;top:8px;font-size:13px;color:#000;transform-origin:0 50%;transform:scaleX(0.9)">NORMAL</span></div>
<div class="r" style="left:212px;top:1021px;width:150px;height:28px;overflow:hidden"><span class="t" style="left:2px;top:8px;font-size:13px;color:#000;transform-origin:0 50%;transform:scaleX(0.834)">Baunebengewerk Position 0</span></div>
<span class="t p" style="top:1029px;font-size:13px;left:452.00px;transform-origin:100% 50%;transform:translateX(-100%) scaleX(0.8220);color:#000;">1,000</span>
<span class="t" style="top:1029px;font-size:13px;left:487.50px;transform:translateX(-50%) scaleX(0.8500);color:#000;">Stck</span>
<span class="t p" style="top:1029px;font-size:13px;left:604.00px;transform-origin:100% 50%;transform:translateX(-100%) scaleX(0.8220);color:#000;">0,00</span>
<span class="t p" style="top:1029px;font-size:13px;left:690.00px;transform-origin:100% 50%;transform:translateX(-100%) scaleX(0.8220);color:#000;">0,00</span>
<span class="t p" style="top:1029px;font-size:13px;left:763.70px;transform-origin:100% 50%;transform:translateX(-100%) scaleX(0.8220);color:#000;">-     €</span>
<span class="t p" style="top:1029px;font-size:13px;left:849.70px;transform-origin:100% 50%;transform:translateX(-100%) scaleX(0.8220);color:#000;">-     €</span>
<span class="t p" style="top:1029px;font-size:13px;left:925.70px;transform-origin:100% 50%;transform:translateX(-100%) scaleX(0.8220);color:#000;">-     €</span>
<span class="t p" style="top:1029px;font-size:13px;left:1006.00px;transform-origin:100% 50%;transform:translateX(-100%) scaleX(0.8220);color:#000;">0,00</span>
<span class="t p" style="top:1029px;font-size:13px;left:1079.70px;transform-origin:100% 50%;transform:translateX(-100%) scaleX(0.8220);color:#000;">-     €</span>
<span class="t p" style="top:1029px;font-size:13px;left:1165.70px;transform-origin:100% 50%;transform:translateX(-100%) scaleX(0.8220);color:#000;">-     €</span>
<span class="t p" style="top:1029px;font-size:13px;left:1241.70px;transform-origin:100% 50%;transform:translateX(-100%) scaleX(0.8220);color:#000;">-     €</span>
<span class="t p" style="top:1029px;font-size:13px;left:1322.00px;transform-origin:100% 50%;transform:translateX(-100%) scaleX(0.8220);color:#000;">0,00</span>
<span class="t p" style="top:1029px;font-size:13px;left:1395.70px;transform-origin:100% 50%;transform:translateX(-100%) scaleX(0.8220);color:#000;">-     €</span>
<span class="t p" style="top:1029px;font-size:13px;left:1481.70px;transform-origin:100% 50%;transform:translateX(-100%) scaleX(0.8220);color:#000;">-     €</span>
<span class="t p" style="top:1029px;font-size:13px;left:1557.70px;transform-origin:100% 50%;transform:translateX(-100%) scaleX(0.8220);color:#000;">-     €</span>
<span class="t p" style="top:1029px;font-size:13px;left:1638.00px;transform-origin:100% 50%;transform:translateX(-100%) scaleX(0.8220);color:#000;">0,00</span>
<span class="t p" style="top:1029px;font-size:13px;left:1711.70px;transform-origin:100% 50%;transform:translateX(-100%) scaleX(0.8220);color:#000;">-     €</span>
<span class="t p" style="top:1029px;font-size:13px;left:1797.70px;transform-origin:100% 50%;transform:translateX(-100%) scaleX(0.8220);color:#000;">-     €</span>
<span class="t p" style="top:1029px;font-size:13px;left:1873.70px;transform-origin:100% 50%;transform:translateX(-100%) scaleX(0.8220);color:#000;">-     €</span>
<span class="t p" style="top:1029px;font-size:13px;left:1954.00px;transform-origin:100% 50%;transform:translateX(-100%) scaleX(0.8220);color:#000;">0,00</span>
<span class="t p" style="top:1029px;font-size:13px;left:2027.70px;transform-origin:100% 50%;transform:translateX(-100%) scaleX(0.8220);color:#000;">-     €</span>
<span class="t p" style="top:1029px;font-size:13px;left:2113.70px;transform-origin:100% 50%;transform:translateX(-100%) scaleX(0.8220);color:#000;">-     €</span>
<span class="t p" style="top:1029px;font-size:13px;left:2211.70px;transform-origin:100% 50%;transform:translateX(-100%) scaleX(0.8220);color:#000;">-     €</span>
<span class="t p" style="top:1029px;font-size:13px;left:2331.70px;transform-origin:100% 50%;transform:translateX(-100%) scaleX(0.8220);color:#000;">-     €</span>
<span class="t" style="top:1058px;font-size:13px;left:43.60px;transform-origin:0 50%;transform:scaleX(0.8220);color:#000;word-spacing:3.8px;">2. 1. 10</span>
<div class="r" style="left:124px;top:1050px;width:87px;height:28px;overflow:hidden"><span class="t" style="left:2px;top:8px;font-size:13px;color:#000;transform-origin:0 50%;transform:scaleX(0.866)">BEZUSCHLAGE</span></div>
<div class="r" style="left:212px;top:1050px;width:150px;height:28px;overflow:hidden"><span class="t" style="left:2px;top:8px;font-size:13px;color:#000;transform-origin:0 50%;transform:scaleX(0.835)">Kabel 0.6/1 kV einziehen NYY</span></div>
<span class="t p" style="top:1058px;font-size:13px;left:452.00px;transform-origin:100% 50%;transform:translateX(-100%) scaleX(0.8220);color:#000;">450.000,000</span>
<span class="t" style="top:1058px;font-size:13px;left:487.50px;transform:translateX(-50%) scaleX(0.8500);color:#000;">m</span>
<span class="t p" style="top:1058px;font-size:13px;left:604.00px;transform-origin:100% 50%;transform:translateX(-100%) scaleX(0.8220);color:#000;">0,00</span>
<span class="t p" style="top:1058px;font-size:13px;left:690.00px;transform-origin:100% 50%;transform:translateX(-100%) scaleX(0.8220);color:#000;">0,00</span>
<span class="t p" style="top:1058px;font-size:13px;left:763.70px;transform-origin:100% 50%;transform:translateX(-100%) scaleX(0.8220);color:#000;">-     €</span>
<span class="t p" style="top:1058px;font-size:13px;left:849.70px;transform-origin:100% 50%;transform:translateX(-100%) scaleX(0.8220);color:#000;">-     €</span>
<span class="t p" style="top:1058px;font-size:13px;left:925.70px;transform-origin:100% 50%;transform:translateX(-100%) scaleX(0.8220);color:#000;">-     €</span>
<span class="t p" style="top:1058px;font-size:13px;left:1006.00px;transform-origin:100% 50%;transform:translateX(-100%) scaleX(0.8220);color:#000;">0,00</span>
<span class="t p" style="top:1058px;font-size:13px;left:1079.70px;transform-origin:100% 50%;transform:translateX(-100%) scaleX(0.8220);color:#000;">-     €</span>
<span class="t p" style="top:1058px;font-size:13px;left:1165.70px;transform-origin:100% 50%;transform:translateX(-100%) scaleX(0.8220);color:#000;">-     €</span>
<span class="t p" style="top:1058px;font-size:13px;left:1241.70px;transform-origin:100% 50%;transform:translateX(-100%) scaleX(0.8220);color:#000;">-     €</span>
<span class="t p" style="top:1058px;font-size:13px;left:1322.00px;transform-origin:100% 50%;transform:translateX(-100%) scaleX(0.8220);color:#000;">0,00</span>
<span class="t p" style="top:1058px;font-size:13px;left:1395.70px;transform-origin:100% 50%;transform:translateX(-100%) scaleX(0.8220);color:#000;">-     €</span>
<span class="t p" style="top:1058px;font-size:13px;left:1481.70px;transform-origin:100% 50%;transform:translateX(-100%) scaleX(0.8220);color:#000;">-     €</span>
<span class="t p" style="top:1058px;font-size:13px;left:1557.70px;transform-origin:100% 50%;transform:translateX(-100%) scaleX(0.8220);color:#000;">-     €</span>
<span class="t p" style="top:1058px;font-size:13px;left:1638.00px;transform-origin:100% 50%;transform:translateX(-100%) scaleX(0.8220);color:#000;">0,00</span>
<span class="t p" style="top:1058px;font-size:13px;left:1711.70px;transform-origin:100% 50%;transform:translateX(-100%) scaleX(0.8220);color:#000;">-     €</span>
<span class="t p" style="top:1058px;font-size:13px;left:1797.70px;transform-origin:100% 50%;transform:translateX(-100%) scaleX(0.8220);color:#000;">-     €</span>
<span class="t p" style="top:1058px;font-size:13px;left:1873.70px;transform-origin:100% 50%;transform:translateX(-100%) scaleX(0.8220);color:#000;">-     €</span>
<span class="t p" style="top:1058px;font-size:13px;left:1954.00px;transform-origin:100% 50%;transform:translateX(-100%) scaleX(0.8220);color:#000;">0,00</span>
<span class="t p" style="top:1058px;font-size:13px;left:2027.70px;transform-origin:100% 50%;transform:translateX(-100%) scaleX(0.8220);color:#000;">-     €</span>
<span class="t p" style="top:1058px;font-size:13px;left:2113.70px;transform-origin:100% 50%;transform:translateX(-100%) scaleX(0.8220);color:#000;">-     €</span>
<span class="t p" style="top:1058px;font-size:13px;left:2211.70px;transform-origin:100% 50%;transform:translateX(-100%) scaleX(0.8220);color:#000;">-     €</span>
<span class="t p" style="top:1058px;font-size:13px;left:2331.70px;transform-origin:100% 50%;transform:translateX(-100%) scaleX(0.8220);color:#000;">-     €</span>
<span class="t" style="top:1087px;font-size:13px;left:43.60px;transform-origin:0 50%;transform:scaleX(0.8220);color:#000;word-spacing:3.8px;">2. 1. 20</span>
<div class="r" style="left:124px;top:1079px;width:87px;height:28px;overflow:hidden"><span class="t" style="left:2px;top:8px;font-size:13px;color:#000;transform-origin:0 50%;transform:scaleX(0.866)">BEZUSCHLAGE</span></div>
<div class="r" style="left:212px;top:1079px;width:150px;height:28px;overflow:hidden"><span class="t" style="left:2px;top:8px;font-size:13px;color:#000;transform-origin:0 50%;transform:scaleX(0.835)">Kabel 0.6/1 kV einziehen NYY</span></div>
<span class="t p" style="top:1087px;font-size:13px;left:452.00px;transform-origin:100% 50%;transform:translateX(-100%) scaleX(0.8220);color:#000;">200.000,000</span>
<span class="t" style="top:1087px;font-size:13px;left:487.50px;transform:translateX(-50%) scaleX(0.8500);color:#000;">m</span>
<span class="t p" style="top:1087px;font-size:13px;left:604.00px;transform-origin:100% 50%;transform:translateX(-100%) scaleX(0.8220);color:#000;">0,00</span>
<span class="t p" style="top:1087px;font-size:13px;left:690.00px;transform-origin:100% 50%;transform:translateX(-100%) scaleX(0.8220);color:#000;">0,00</span>
<span class="t p" style="top:1087px;font-size:13px;left:763.70px;transform-origin:100% 50%;transform:translateX(-100%) scaleX(0.8220);color:#000;">-     €</span>
<span class="t p" style="top:1087px;font-size:13px;left:849.70px;transform-origin:100% 50%;transform:translateX(-100%) scaleX(0.8220);color:#000;">-     €</span>
<span class="t p" style="top:1087px;font-size:13px;left:925.70px;transform-origin:100% 50%;transform:translateX(-100%) scaleX(0.8220);color:#000;">-     €</span>
<span class="t p" style="top:1087px;font-size:13px;left:1006.00px;transform-origin:100% 50%;transform:translateX(-100%) scaleX(0.8220);color:#000;">0,00</span>
<span class="t p" style="top:1087px;font-size:13px;left:1079.70px;transform-origin:100% 50%;transform:translateX(-100%) scaleX(0.8220);color:#000;">-     €</span>
<span class="t p" style="top:1087px;font-size:13px;left:1165.70px;transform-origin:100% 50%;transform:translateX(-100%) scaleX(0.8220);color:#000;">-     €</span>
<span class="t p" style="top:1087px;font-size:13px;left:1241.70px;transform-origin:100% 50%;transform:translateX(-100%) scaleX(0.8220);color:#000;">-     €</span>
<span class="t p" style="top:1087px;font-size:13px;left:1322.00px;transform-origin:100% 50%;transform:translateX(-100%) scaleX(0.8220);color:#000;">0,00</span>
<span class="t p" style="top:1087px;font-size:13px;left:1395.70px;transform-origin:100% 50%;transform:translateX(-100%) scaleX(0.8220);color:#000;">-     €</span>
<span class="t p" style="top:1087px;font-size:13px;left:1481.70px;transform-origin:100% 50%;transform:translateX(-100%) scaleX(0.8220);color:#000;">-     €</span>
<span class="t p" style="top:1087px;font-size:13px;left:1557.70px;transform-origin:100% 50%;transform:translateX(-100%) scaleX(0.8220);color:#000;">-     €</span>
<span class="t p" style="top:1087px;font-size:13px;left:1638.00px;transform-origin:100% 50%;transform:translateX(-100%) scaleX(0.8220);color:#000;">0,00</span>
<span class="t p" style="top:1087px;font-size:13px;left:1711.70px;transform-origin:100% 50%;transform:translateX(-100%) scaleX(0.8220);color:#000;">-     €</span>
<span class="t p" style="top:1087px;font-size:13px;left:1797.70px;transform-origin:100% 50%;transform:translateX(-100%) scaleX(0.8220);color:#000;">-     €</span>
<span class="t p" style="top:1087px;font-size:13px;left:1873.70px;transform-origin:100% 50%;transform:translateX(-100%) scaleX(0.8220);color:#000;">-     €</span>
<span class="t p" style="top:1087px;font-size:13px;left:1954.00px;transform-origin:100% 50%;transform:translateX(-100%) scaleX(0.8220);color:#000;">0,00</span>
<span class="t p" style="top:1087px;font-size:13px;left:2027.70px;transform-origin:100% 50%;transform:translateX(-100%) scaleX(0.8220);color:#000;">-     €</span>
<span class="t p" style="top:1087px;font-size:13px;left:2113.70px;transform-origin:100% 50%;transform:translateX(-100%) scaleX(0.8220);color:#000;">-     €</span>
<span class="t p" style="top:1087px;font-size:13px;left:2211.70px;transform-origin:100% 50%;transform:translateX(-100%) scaleX(0.8220);color:#000;">-     €</span>
<span class="t p" style="top:1087px;font-size:13px;left:2331.70px;transform-origin:100% 50%;transform:translateX(-100%) scaleX(0.8220);color:#000;">-     €</span>
<span class="t" style="top:1116px;font-size:13px;left:43.60px;transform-origin:0 50%;transform:scaleX(0.8220);color:#000;word-spacing:3.8px;">2. 1. 30</span>
<div class="r" style="left:124px;top:1108px;width:87px;height:28px;overflow:hidden"><span class="t" style="left:2px;top:8px;font-size:13px;color:#000;transform-origin:0 50%;transform:scaleX(0.862)">ZUSCHLAG</span></div>
<div class="r" style="left:212px;top:1108px;width:150px;height:28px;overflow:hidden"><span class="t" style="left:2px;top:8px;font-size:13px;color:#000;transform-origin:0 50%;transform:scaleX(0.818)">Zuschlag auf die vorgenannten</span></div>
<span class="t p" style="top:1116px;font-size:13px;left:452.00px;transform-origin:100% 50%;transform:translateX(-100%) scaleX(0.8220);color:#000;">0,000</span>
<span class="t" style="top:1116px;font-size:13px;left:487.50px;transform:translateX(-50%) scaleX(0.8500);color:#000;">%</span>
<span class="t p" style="top:1116px;font-size:13px;left:604.00px;transform-origin:100% 50%;transform:translateX(-100%) scaleX(0.8220);color:#000;">0,00</span>
<span class="t p" style="top:1116px;font-size:13px;left:690.00px;transform-origin:100% 50%;transform:translateX(-100%) scaleX(0.8220);color:#000;">0,00</span>
<span class="t p" style="top:1116px;font-size:13px;left:763.70px;transform-origin:100% 50%;transform:translateX(-100%) scaleX(0.8220);color:#000;">-     €</span>
<span class="t p" style="top:1116px;font-size:13px;left:849.70px;transform-origin:100% 50%;transform:translateX(-100%) scaleX(0.8220);color:#000;">-     €</span>
<span class="t p" style="top:1116px;font-size:13px;left:925.70px;transform-origin:100% 50%;transform:translateX(-100%) scaleX(0.8220);color:#000;">-     €</span>
<span class="t p" style="top:1116px;font-size:13px;left:1006.00px;transform-origin:100% 50%;transform:translateX(-100%) scaleX(0.8220);color:#000;">0,00</span>
<span class="t p" style="top:1116px;font-size:13px;left:1079.70px;transform-origin:100% 50%;transform:translateX(-100%) scaleX(0.8220);color:#000;">-     €</span>
<span class="t p" style="top:1116px;font-size:13px;left:1165.70px;transform-origin:100% 50%;transform:translateX(-100%) scaleX(0.8220);color:#000;">-     €</span>
<span class="t p" style="top:1116px;font-size:13px;left:1241.70px;transform-origin:100% 50%;transform:translateX(-100%) scaleX(0.8220);color:#000;">-     €</span>
<span class="t p" style="top:1116px;font-size:13px;left:1322.00px;transform-origin:100% 50%;transform:translateX(-100%) scaleX(0.8220);color:#000;">0,00</span>
<span class="t p" style="top:1116px;font-size:13px;left:1395.70px;transform-origin:100% 50%;transform:translateX(-100%) scaleX(0.8220);color:#000;">-     €</span>
<span class="t p" style="top:1116px;font-size:13px;left:1481.70px;transform-origin:100% 50%;transform:translateX(-100%) scaleX(0.8220);color:#000;">-     €</span>
<span class="t p" style="top:1116px;font-size:13px;left:1557.70px;transform-origin:100% 50%;transform:translateX(-100%) scaleX(0.8220);color:#000;">-     €</span>
<span class="t p" style="top:1116px;font-size:13px;left:1638.00px;transform-origin:100% 50%;transform:translateX(-100%) scaleX(0.8220);color:#000;">0,00</span>
<span class="t p" style="top:1116px;font-size:13px;left:1711.70px;transform-origin:100% 50%;transform:translateX(-100%) scaleX(0.8220);color:#000;">-     €</span>
<span class="t p" style="top:1116px;font-size:13px;left:1797.70px;transform-origin:100% 50%;transform:translateX(-100%) scaleX(0.8220);color:#000;">-     €</span>
<span class="t p" style="top:1116px;font-size:13px;left:1873.70px;transform-origin:100% 50%;transform:translateX(-100%) scaleX(0.8220);color:#000;">-     €</span>
<span class="t p" style="top:1116px;font-size:13px;left:1954.00px;transform-origin:100% 50%;transform:translateX(-100%) scaleX(0.8220);color:#000;">0,00</span>
<span class="t p" style="top:1116px;font-size:13px;left:2027.70px;transform-origin:100% 50%;transform:translateX(-100%) scaleX(0.8220);color:#000;">-     €</span>
<span class="t p" style="top:1116px;font-size:13px;left:2113.70px;transform-origin:100% 50%;transform:translateX(-100%) scaleX(0.8220);color:#000;">-     €</span>
<span class="t p" style="top:1116px;font-size:13px;left:2211.70px;transform-origin:100% 50%;transform:translateX(-100%) scaleX(0.8220);color:#000;">-     €</span>
<span class="t p" style="top:1116px;font-size:13px;left:2331.70px;transform-origin:100% 50%;transform:translateX(-100%) scaleX(0.8220);color:#000;">-     €</span>
<span class="t" style="top:1145px;font-size:13px;left:43.60px;transform-origin:0 50%;transform:scaleX(0.8220);color:#000;word-spacing:3.8px;">2. 1. 40</span>
<div class="r" style="left:124px;top:1137px;width:87px;height:28px;overflow:hidden"><span class="t" style="left:2px;top:8px;font-size:13px;color:#000;transform-origin:0 50%;transform:scaleX(0.9)">NORMAL</span></div>
<div class="r" style="left:212px;top:1137px;width:150px;height:28px;overflow:hidden"><span class="t" style="left:2px;top:8px;font-size:13px;color:#000;transform-origin:0 50%;transform:scaleX(0.828)">Hohlliegenden Putz abschlagen</span></div>
<span class="t p" style="top:1145px;font-size:13px;left:452.00px;transform-origin:100% 50%;transform:translateX(-100%) scaleX(0.8220);color:#000;">100,000</span>
<span class="t" style="top:1145px;font-size:13px;left:487.50px;transform:translateX(-50%) scaleX(0.8500);color:#000;">Stck</span>
<span class="t p" style="top:1145px;font-size:13px;left:604.00px;transform-origin:100% 50%;transform:translateX(-100%) scaleX(0.8220);color:#000;">0,00</span>
<span class="t p" style="top:1145px;font-size:13px;left:690.00px;transform-origin:100% 50%;transform:translateX(-100%) scaleX(0.8220);color:#000;">0,00</span>
<span class="t p" style="top:1145px;font-size:13px;left:763.70px;transform-origin:100% 50%;transform:translateX(-100%) scaleX(0.8220);color:#000;">-     €</span>
<span class="t p" style="top:1145px;font-size:13px;left:849.70px;transform-origin:100% 50%;transform:translateX(-100%) scaleX(0.8220);color:#000;">-     €</span>
<span class="t p" style="top:1145px;font-size:13px;left:925.70px;transform-origin:100% 50%;transform:translateX(-100%) scaleX(0.8220);color:#000;">-     €</span>
<span class="t p" style="top:1145px;font-size:13px;left:1006.00px;transform-origin:100% 50%;transform:translateX(-100%) scaleX(0.8220);color:#000;">0,00</span>
<span class="t p" style="top:1145px;font-size:13px;left:1079.70px;transform-origin:100% 50%;transform:translateX(-100%) scaleX(0.8220);color:#000;">-     €</span>
<span class="t p" style="top:1145px;font-size:13px;left:1165.70px;transform-origin:100% 50%;transform:translateX(-100%) scaleX(0.8220);color:#000;">-     €</span>
<span class="t p" style="top:1145px;font-size:13px;left:1241.70px;transform-origin:100% 50%;transform:translateX(-100%) scaleX(0.8220);color:#000;">-     €</span>
<span class="t p" style="top:1145px;font-size:13px;left:1322.00px;transform-origin:100% 50%;transform:translateX(-100%) scaleX(0.8220);color:#000;">0,00</span>
<span class="t p" style="top:1145px;font-size:13px;left:1395.70px;transform-origin:100% 50%;transform:translateX(-100%) scaleX(0.8220);color:#000;">-     €</span>
<span class="t p" style="top:1145px;font-size:13px;left:1481.70px;transform-origin:100% 50%;transform:translateX(-100%) scaleX(0.8220);color:#000;">-     €</span>
<span class="t p" style="top:1145px;font-size:13px;left:1557.70px;transform-origin:100% 50%;transform:translateX(-100%) scaleX(0.8220);color:#000;">-     €</span>
<span class="t p" style="top:1145px;font-size:13px;left:1638.00px;transform-origin:100% 50%;transform:translateX(-100%) scaleX(0.8220);color:#000;">0,00</span>
<span class="t p" style="top:1145px;font-size:13px;left:1711.70px;transform-origin:100% 50%;transform:translateX(-100%) scaleX(0.8220);color:#000;">-     €</span>
<span class="t p" style="top:1145px;font-size:13px;left:1797.70px;transform-origin:100% 50%;transform:translateX(-100%) scaleX(0.8220);color:#000;">-     €</span>
<span class="t p" style="top:1145px;font-size:13px;left:1873.70px;transform-origin:100% 50%;transform:translateX(-100%) scaleX(0.8220);color:#000;">-     €</span>
<span class="t p" style="top:1145px;font-size:13px;left:1954.00px;transform-origin:100% 50%;transform:translateX(-100%) scaleX(0.8220);color:#000;">0,00</span>
<span class="t p" style="top:1145px;font-size:13px;left:2027.70px;transform-origin:100% 50%;transform:translateX(-100%) scaleX(0.8220);color:#000;">-     €</span>
<span class="t p" style="top:1145px;font-size:13px;left:2113.70px;transform-origin:100% 50%;transform:translateX(-100%) scaleX(0.8220);color:#000;">-     €</span>
<span class="t p" style="top:1145px;font-size:13px;left:2211.70px;transform-origin:100% 50%;transform:translateX(-100%) scaleX(0.8220);color:#000;">-     €</span>
<span class="t p" style="top:1145px;font-size:13px;left:2331.70px;transform-origin:100% 50%;transform:translateX(-100%) scaleX(0.8220);color:#000;">-     €</span>
<div class="r" style="left:519px;top:729px;width:85px;height:28px;border:2px solid #217346;box-shadow:inset 0 0 0 1px #fff"></div>
<div class="r" style="left:602px;top:755px;width:7px;height:7px;background:#fff;"></div>
<div class="r" style="left:603px;top:756px;width:6px;height:6px;background:#217346;"></div>
<svg class="r" style="left:903px;top:415px;" width="21" height="21" viewBox="0 0 21 21"><path d="M7.5 1.5h6v6h6v6h-6v6h-6v-6h-6v-6h6z" fill="#fff" stroke="#000" stroke-width="1.6"/></svg>
</div>
<div class="r" style="left:2342px;top:366px;width:25px;height:792px;background:#f0f0f0;"></div>
<div class="r" style="left:2342px;top:366px;width:23px;height:23px;border:1px solid #ababab;background:#fff;box-sizing:content-box"></div>
<svg class="r" style="left:2348px;top:374px;" width="13" height="8" viewBox="0 0 13 8"><path d="M0.5 7L6.5 0.5L12.5 7Z" fill="#6f6f6f"/></svg>
<div class="r" style="left:2342px;top:391px;width:23px;height:494px;border:1px solid #ababab;background:#fff;box-sizing:content-box"></div>
<div class="r" style="left:2342px;top:1134px;width:23px;height:22px;border:1px solid #ababab;background:#fff;box-sizing:content-box"></div>
<svg class="r" style="left:2348px;top:1142px;" width="13" height="8" viewBox="0 0 13 8"><path d="M0.5 0.5H12.5L6.5 7Z" fill="#6f6f6f"/></svg>
<div class="r" style="left:2px;top:1159px;width:2368px;height:33px;background:#f5f5f5;"></div>
<div class="r" style="left:2px;top:1158px;width:2338px;height:1px;background:#ababab;"></div>
<svg class="r" style="left:30px;top:1169px;" width="8" height="12" viewBox="0 0 8 12"><path d="M7.5 0.5V11.5L0.5 6Z" fill="#c6c6c6"/></svg>
<svg class="r" style="left:65px;top:1169px;" width="8" height="12" viewBox="0 0 8 12"><path d="M0.5 0.5V11.5L7.5 6Z" fill="#c6c6c6"/></svg>
<div class="r" style="left:120px;top:1158px;width:153px;height:29px;background:#fff;"></div>
<div class="r" style="left:120px;top:1159px;width:1px;height:28px;background:#c6c6c6;"></div>
<div class="r" style="left:272px;top:1159px;width:1px;height:28px;background:#c6c6c6;"></div>
<div class="r" style="left:123px;top:1163px;width:147px;height:23px;background:linear-gradient(#fdfdfd 10%,#e3e8ee 45%,#cbd5e0 75%,#93a8bf)"></div>
<div class="r" style="left:120px;top:1187px;width:153px;height:2px;background:#217346;"></div>
<span class="t" style="top:1163px;font-size:19px;left:132.50px;transform-origin:0 50%;transform:scaleX(1.0576);color:#217346;font-weight:bold;">Urkalkulation</span>
<div class="r" style="left:275px;top:1161px;width:216px;height:28px;background:#ffc000;"></div>
<span class="t" style="top:1163px;font-size:19px;left:291.30px;transform-origin:0 50%;transform:scaleX(1.0161);color:#111;">Lohn- und Zuschläge</span>
<div class="r" style="left:493px;top:1163px;width:1px;height:25px;background:#c6c6c6;"></div>
<span class="t" style="top:1163px;font-size:19px;left:511.60px;transform-origin:0 50%;transform:scaleX(1.0087);color:#444;">Formblatt EFB-221</span>
<div class="r" style="left:694px;top:1163px;width:1px;height:25px;background:#c6c6c6;"></div>
<span class="t" style="top:1163px;font-size:19px;left:712.40px;transform-origin:0 50%;transform:scaleX(1.0131);color:#444;">Formblatt EFB-223</span>
<div class="r" style="left:894px;top:1163px;width:1px;height:25px;background:#c6c6c6;"></div>
<svg class="r" style="left:933px;top:1163px;" width="24" height="24" viewBox="0 0 24 24"><circle cx="12" cy="12" r="10.3" fill="none" stroke="#767676" stroke-width="1.5"/><path d="M12 6.5V17.5M6.5 12H17.5" stroke="#767676" stroke-width="1.8"/></svg>
<div class="r" style="left:1404px;top:1159px;width:35px;height:33px;background:#fff;"></div>
<div class="r" style="left:1418.5px;top:1167.5px;width:3.6px;height:3.2px;background:#b4b4b4;"></div>
<div class="r" style="left:1418.5px;top:1173px;width:3.6px;height:3.2px;background:#b4b4b4;"></div>
<div class="r" style="left:1418.5px;top:1178.5px;width:3.6px;height:3.2px;background:#b4b4b4;"></div>
<div class="r" style="left:1439px;top:1162px;width:899px;height:25px;background:#e8e8e8;"></div>
<div class="r" style="left:1439px;top:1162px;width:23px;height:23px;border:1px solid #ababab;background:#fff;box-sizing:content-box"></div>
<svg class="r" style="left:1447px;top:1168px;" width="8" height="13" viewBox="0 0 8 13"><path d="M7.5 0.5V12.5L0.5 6.5Z" fill="#6f6f6f"/></svg>
<div class="r" style="left:1464px;top:1162px;width:786px;height:23px;border:1px solid #ababab;background:#fff;box-sizing:content-box"></div>
<div class="r" style="left:2313px;top:1162px;width:23px;height:23px;border:1px solid #ababab;background:#fff;box-sizing:content-box"></div>
<svg class="r" style="left:2322px;top:1168px;" width="8" height="13" viewBox="0 0 8 13"><path d="M0.5 0.5V12.5L7.5 6.5Z" fill="#6f6f6f"/></svg>
<div class="r" style="left:0px;top:1192px;width:2372px;height:35px;background:#217346;"></div>
<svg class="r" style="left:13px;top:1199px;" width="23" height="20" viewBox="0 0 23 20"><path d="M1 1H21V5" fill="none" stroke="#fff" stroke-width="1.5"/><path d="M1 1V17.5H8" fill="none" stroke="#fff" stroke-width="1.5"/><path d="M1 4.5H21M4 8H10M4 11H8M4 14H8" stroke="#fff" stroke-width="1.4"/><circle cx="14.5" cy="13" r="5.6" fill="none" stroke="#fff" stroke-width="1.6"/><circle cx="14.5" cy="13" r="2.6" fill="#fff"/></svg>
<div class="r" style="left:1904px;top:1192px;width:60px;height:33px;background:#0f5c2e;"></div>
<svg class="r" style="left:1923px;top:1197px;" width="21" height="20" viewBox="0 0 21 20"><rect x="1" y="1" width="19" height="18" fill="none" stroke="#fff" stroke-width="1.6"/><path d="M1 7H20M1 13H20M7.3 1V19M13.6 1V19" stroke="#fff" stroke-width="1.5"/></svg>
<svg class="r" style="left:1983px;top:1197px;" width="22" height="20" viewBox="0 0 22 20"><rect x="1" y="1" width="20" height="18" fill="none" stroke="#fff" stroke-width="1.6"/><rect x="5.5" y="5" width="11" height="11" fill="none" stroke="#fff" stroke-width="1.4"/><path d="M8 8.5H14M8 12H14" stroke="#fff" stroke-width="1.4"/></svg>
<svg class="r" style="left:2043px;top:1197px;" width="22" height="20" viewBox="0 0 22 20"><rect x="1" y="1" width="20" height="18" fill="none" stroke="#fff" stroke-width="1.6"/><path d="M7 1V10.5M14 1V10.5M7 10.5H14" fill="none" stroke="#fff" stroke-width="1.5"/></svg>
<div class="r" style="left:2092px;top:1207px;width:12px;height:1px;background:#d8e8de;"></div>
<div class="r" style="left:2112px;top:1207px;width:148px;height:2px;background:#fff;"></div>
<div class="r" style="left:2167px;top:1200px;width:8px;height:17px;background:#fff;"></div>
<div class="r" style="left:2185px;top:1203.5px;width:1.6px;height:9px;background:#fff;"></div>
<div class="r" style="left:2268px;top:1207px;width:12px;height:1px;background:#d8e8de;"></div>
<div class="r" style="left:2273px;top:1202px;width:1px;height:12px;background:#d8e8de;"></div>
<span class="t" style="top:1200px;font-size:17px;left:2298.30px;transform-origin:0 50%;transform:scaleX(0.8904);color:#fff;">80 %</span>
</div>
<div class="r" style="left:0px;top:0px;width:2372px;height:2px;background:#217346;"></div>
<div class="r" style="left:0px;top:0px;width:2px;height:1227px;background:#217346;"></div>
<div class="r" style="left:2370px;top:0px;width:2px;height:1227px;background:#217346;"></div>
<div class="r" style="left:2372px;top:0px;width:5px;height:5px;background:#fff;"></div>
<div class="r" style="left:0px;top:1227px;width:5px;height:5px;background:#fff;"></div>
</body></html>
